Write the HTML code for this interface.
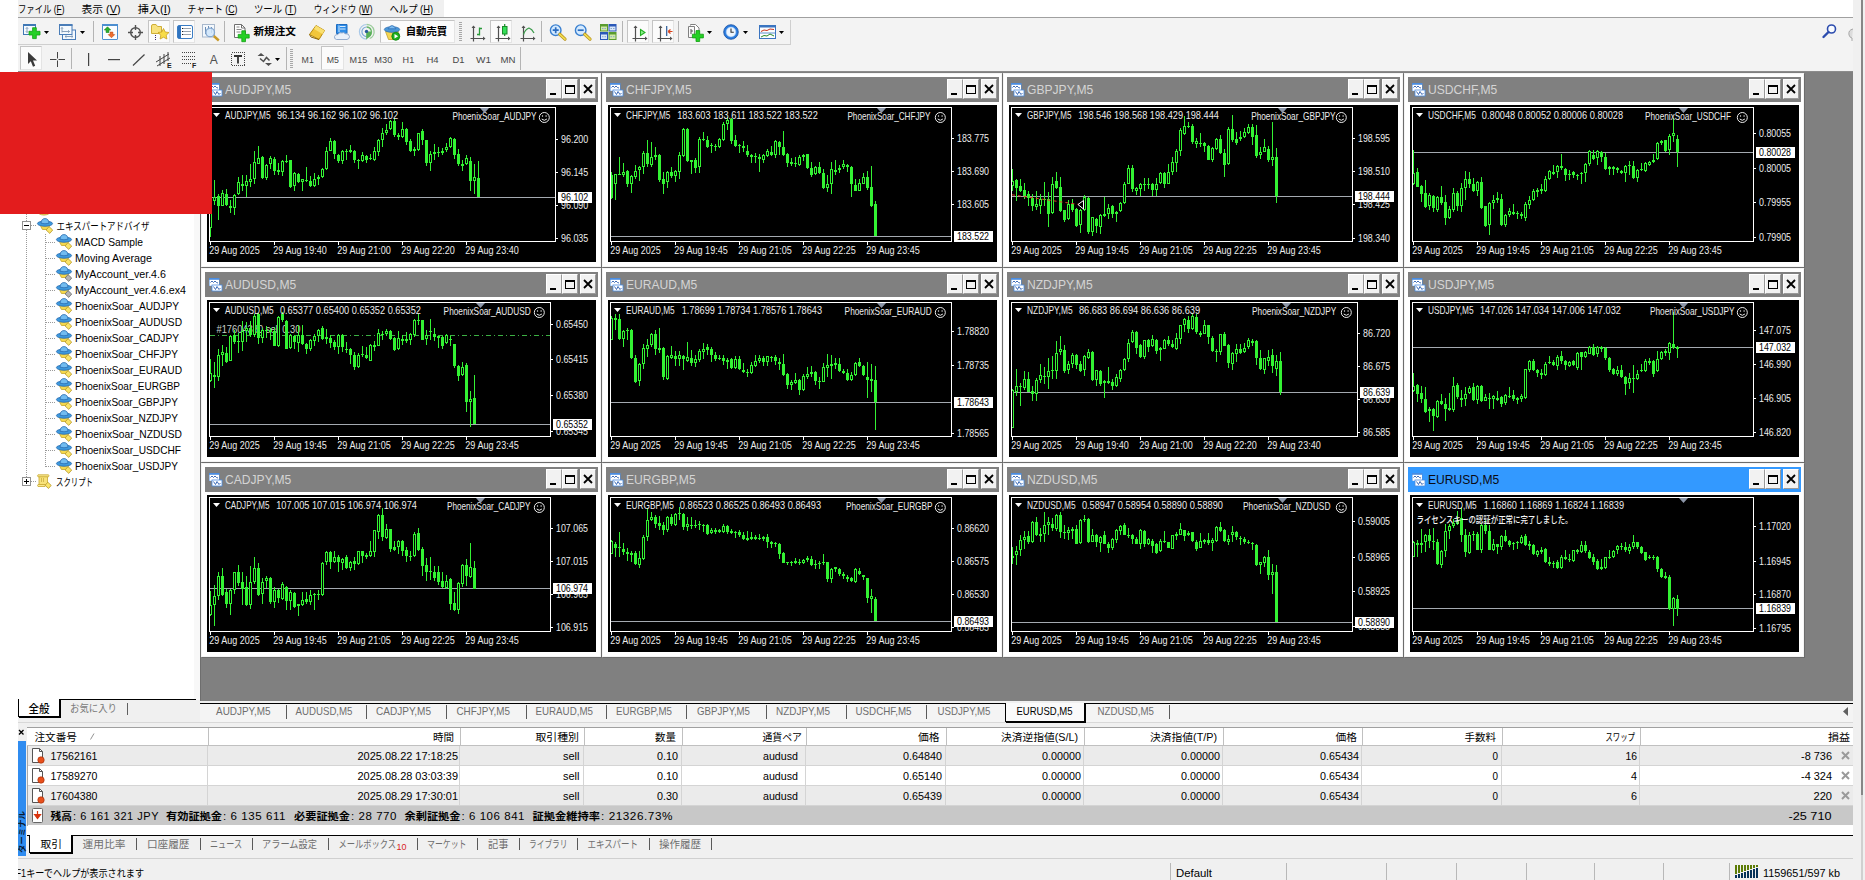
<!DOCTYPE html><html lang="ja"><head><meta charset="utf-8"><title>MetaTrader 4</title><style>
*{box-sizing:border-box;margin:0;padding:0}
html,body{width:1865px;height:880px;overflow:hidden;background:#fff}
body{position:relative;font-family:"Liberation Sans","Noto Sans CJK JP",sans-serif;font-size:11px;color:#000;line-height:1}
.a{position:absolute}
.t{position:absolute;white-space:nowrap}
.mi{position:absolute;top:2px;height:14px;line-height:14px;font-size:11px;white-space:nowrap}
.mi u{text-decoration:underline}
.win{position:absolute;width:400px;height:194px;background:#fff;border:1px solid #f4f4f4;box-shadow:1px 1px 0 #6c6c6c}
.win .tb{position:absolute;left:3px;top:3px;width:393px;height:25px;background:#808080}
.win .tb.act{background:#3399ff}
.win .tt{position:absolute;left:20px;top:5px;font-size:13px;line-height:15px;color:#d4d4d4;white-space:nowrap;transform:scaleX(0.93);transform-origin:0 0}
.win .tb.act .tt{color:#0a0a14}
.cb{position:absolute;top:2px;width:16px;height:20px;background:#f2f2f2;border:1px solid #fff;border-right-color:#9a9a9a;border-bottom-color:#9a9a9a}
.win .cl{position:absolute;left:5px;top:31px;width:389px;height:157px;background:#000}
svg{position:absolute;left:0;top:0;overflow:visible}
svg text{font-family:"Liberation Sans","Noto Sans CJK JP",sans-serif}
.tab{position:absolute;top:0;height:18px;line-height:18px;font-size:11px;color:#707070;white-space:nowrap}
.sep{position:absolute;width:1px;background:#606060}
.th{position:absolute;top:0;height:18px;line-height:18px;font-size:11px;text-align:right;padding-right:4px;border-right:1px solid #c8c8c8;white-space:nowrap}
.td{position:absolute;height:20px;line-height:20px;font-size:11px;text-align:right;padding-right:3px;border-right:1px solid #d8d8d8;white-space:nowrap}
.nv{position:absolute;left:74px;height:16px;line-height:16px;font-size:11px;white-space:nowrap}
</style></head><body>
<div class="a" style="left:18px;top:0;width:426px;height:17px;background:#f0f0f0"></div>
<svg class="a" style="left:0;top:0" width="460" height="18" viewBox="0 0 460 18"><text x="18" y="13" font-size="10.5" textLength="46.5" lengthAdjust="spacingAndGlyphs">ファイル (<tspan text-decoration="underline">F</tspan>)</text><text x="81.5" y="13" font-size="10.5" textLength="39" lengthAdjust="spacingAndGlyphs">表示 (<tspan text-decoration="underline">V</tspan>)</text><text x="137.7" y="13" font-size="10.5" textLength="33" lengthAdjust="spacingAndGlyphs">挿入(<tspan text-decoration="underline">I</tspan>)</text><text x="187.5" y="13" font-size="10.5" textLength="50" lengthAdjust="spacingAndGlyphs">チャート (<tspan text-decoration="underline">C</tspan>)</text><text x="254" y="13" font-size="10.5" textLength="42.7" lengthAdjust="spacingAndGlyphs">ツール (<tspan text-decoration="underline">T</tspan>)</text><text x="313.7" y="13" font-size="10.5" textLength="58.8" lengthAdjust="spacingAndGlyphs">ウィンドウ (<tspan text-decoration="underline">W</tspan>)</text><text x="389.5" y="13" font-size="10.5" textLength="43.5" lengthAdjust="spacingAndGlyphs">ヘルプ (<tspan text-decoration="underline">H</tspan>)</text></svg>
<div class="a" style="left:18px;top:17px;width:1835px;height:1px;background:#a0a0a0"></div>
<div class="a" style="left:18px;top:18px;width:1835px;height:53px;background:#f3f3f3"></div>
<div class="a" style="left:18px;top:44px;width:773px;height:1px;background:#cfcfcf"></div>
<div class="a" style="left:790px;top:20px;width:1px;height:25px;background:#cfcfcf"></div>
<div class="a" style="left:18px;top:71px;width:1835px;height:1px;background:#8c8c8c"></div>
<div class="a" style="left:1853px;top:0;width:12px;height:880px;background:#f0f0f0"></div>
<div class="a" style="left:1861px;top:0;width:2px;height:880px;background:#868686"></div>
<svg class="a" style="left:23px;top:24px" width="18" height="16" viewBox="0 0 18 16" ><rect x="0.500" y="1" width="12" height="9.500" fill="#f4f9fe" stroke="#3f78b5"/><rect x="0" y="0" width="13" height="2" fill="#3f78b5"/><path d="M4 3.500v5M2.800 4.800l1.200-1.300 1.200 1.300M2.800 7.200l1.200 1.300 1.200-1.300" stroke="#7f98b4" fill="none" stroke-width="0.900"/><path d="M6 7.3h3.600v-3.600h3.700v3.600h3.700v3.700h-3.700v3.600h-3.700v-3.600h-3.600z" fill="#25d025" stroke="#12a012" stroke-width="0.800"/></svg>
<svg class="a" style="left:44px;top:31px" width="5" height="3" viewBox="0 0 5 3" ><path d="M0 0h5l-2.500 3z" fill="#000"/></svg>
<svg class="a" style="left:59px;top:24px" width="18" height="17" viewBox="0 0 18 17" ><rect x="3.500" y="6" width="13" height="9.500" fill="#f4f9fe" stroke="#4a7db8"/><path d="M6 12.500h8M6 12.500l1.500-1.200M6 12.500l1.500 1.200M14 12.500l-1.500-1.200M14 12.500l-1.500 1.200" stroke="#7f98b4" fill="none" stroke-width="0.900"/><rect x="0.500" y="1" width="12.500" height="9.500" fill="#f4f9fe" stroke="#4a7db8"/><rect x="0" y="0" width="13.500" height="2" fill="#4a7db8"/><path d="M3 3.500v5M3 7.500h7.500M10.500 7.500l-1.500-1.200M10.500 7.500l-1.500 1.200M3 3.500l-1 1.200M3 3.500l1 1.200" stroke="#7f98b4" fill="none" stroke-width="0.900"/></svg>
<svg class="a" style="left:80px;top:31px" width="5" height="3" viewBox="0 0 5 3" ><path d="M0 0h5l-2.500 3z" fill="#000"/></svg>
<div class="a" style="left:93px;top:21px;width:1px;height:21px;background:#b4b4b4"></div>
<svg class="a" style="left:102px;top:24px" width="16" height="16" viewBox="0 0 16 16" ><rect x="0.500" y="1" width="15" height="14.500" rx="0.500" fill="#fbfdff" stroke="#4d8fd0"/><rect x="0" y="0" width="16" height="2" fill="#4d8fd0"/><path d="M5.500 2.800l3.200 3.200h-1.800v2.500h-2.800v-2.500h-1.800z" fill="#2bb02b" stroke="#148014" stroke-width="0.600"/><path d="M9.500 13.800l-3.200-3.200h1.800v-2.500h2.800v2.500h1.800z" fill="#f07030" stroke="#c04a10" stroke-width="0.600"/></svg>
<svg class="a" style="left:128px;top:25px" width="15" height="15" viewBox="0 0 15 15" ><circle cx="7.500" cy="7.500" r="4.800" fill="none" stroke="#505050" stroke-width="1.400"/><path d="M7.500 0v5M7.500 10v5M0 7.500h5M10 7.500h5" stroke="#505050" stroke-width="1.400"/></svg>
<div class="a" style="left:148px;top:20px;width:22px;height:23px;background:#fbfbfb;border:1px solid #c4c4c4;border-right-color:#e4e4e4;border-bottom-color:#e4e4e4"></div>
<svg class="a" style="left:151px;top:23px" width="19" height="19" viewBox="0 0 19 19" ><path d="M0.500 3q0-1.500 1.500-1.500h3l1.500 2h4v7h-10z" fill="#f8e27e" stroke="#cfae36"/><path d="M4.500 12v5" stroke="#3a2a6a" stroke-dasharray="1 1"/><path d="M12.500 5.500l1.700 3.500 3.800 .500-2.800 2.700 .700 3.800-3.400-1.800-3.400 1.800 .700-3.800-2.800-2.700 3.800-.500z" fill="#f8dc48" stroke="#c8a020" stroke-width="0.800"/></svg>
<div class="a" style="left:173px;top:20px;width:22px;height:23px;background:#fbfbfb;border:1px solid #c4c4c4;border-right-color:#e4e4e4;border-bottom-color:#e4e4e4"></div>
<svg class="a" style="left:177px;top:25px" width="16" height="14" viewBox="0 0 16 14" ><rect x="0.500" y="0.500" width="15" height="13" rx="1.500" fill="#fff" stroke="#3a7cc4"/><rect x="1" y="1" width="3" height="12" fill="#2f74c0"/><path d="M6 3.500h8M6 6.500h8M6 9.500h8" stroke="#9aa4b0"/><path d="M5 3.500h1M5 6.500h1M5 9.500h1" stroke="#222"/></svg>
<svg class="a" style="left:202px;top:24px" width="19" height="18" viewBox="0 0 19 18" ><rect x="0.500" y="0.500" width="12" height="12.500" fill="#f4f8fc" stroke="#a8b8cc"/><path d="M3.500 3v7M6.500 2v4M9.500 3v6" stroke="#6a8cb4"/><circle cx="8.200" cy="8.400" r="4.300" fill="#cfe6fb" fill-opacity="0.850" stroke="#86a8d0" stroke-width="1.300"/><path d="M11.800 12l5 4.500" stroke="#c89a28" stroke-width="2.400"/></svg>
<div class="a" style="left:224px;top:21px;width:1px;height:21px;background:#b4b4b4"></div>
<svg class="a" style="left:233px;top:24px" width="18" height="19" viewBox="0 0 18 19" ><path d="M1.500 0.500h7l3.500 3.500v9.500h-10.500z" fill="#fff" stroke="#707070"/><path d="M8.500 0.500v3.500h3.500" fill="none" stroke="#707070"/><path d="M3.500 3h3M3.500 5.500h5M3.500 8h4" stroke="#8a8a8a"/><path d="M5.2 10.4h3.600v-3.600h3.700v3.600h3.700v3.700h-3.700v3.600h-3.700v-3.600h-3.600z" fill="#25d025" stroke="#12a012" stroke-width="0.800"/></svg>
<svg class="a" style="left:309px;top:25px" width="16" height="15" viewBox="0 0 16 15" ><path d="M0.500 9.500l6.500-9 8.500 5-5.500 9z" fill="#f2c63a" stroke="#b88a10"/><path d="M7 0.500l8.500 5-2 3.500-8.500-5z" fill="#fae070"/><path d="M0.500 9.500l1.500 2.500 8 2.500" fill="none" stroke="#8a6608"/></svg>
<svg class="a" style="left:334px;top:24px" width="17" height="16" viewBox="0 0 17 16" ><path d="M2.500 0.500l2-0h8.500v9h-10.500z" fill="#2f8ee8" stroke="#1f6cc0"/><path d="M6 2.500h5.500M6 5h5.500M5 1.500v6.500" stroke="#d8ecff"/><path d="M2.500 15.500q-2.500-0.500-2-3 .800-2.500 3.500-2 1.200-2.600 4-1.600 1.800-1 3.200 .800 3.800-.600 4.300 2.800 0 2.500-2.500 3z" fill="#eaf1fa" stroke="#8aa4c8" stroke-width="0.900"/></svg>
<svg class="a" style="left:359px;top:24px" width="16" height="16" viewBox="0 0 16 16" ><path d="M7.700 0.500a7.300 7.300 0 0 0 0 14.600" fill="none" stroke="#a8c8e8" stroke-width="1.200"/><path d="M7.700 3a4.800 4.800 0 0 0 0 9.600" fill="none" stroke="#7aa8d8" stroke-width="1.200"/><path d="M7.700 0.500a7.300 7.300 0 0 1 3 14" fill="none" stroke="#9ccc9c" stroke-width="1.300"/><path d="M7.700 3a4.800 4.800 0 0 1 3 8.500" fill="none" stroke="#6ab86a" stroke-width="1.300"/><path d="M7.200 7.500v8l4.500-3.500q1.500-2 0-4.500z" fill="#58b058"/><circle cx="7.500" cy="7.400" r="1.700" fill="#2a5a9a"/></svg>
<div class="a" style="left:380px;top:20px;width:75px;height:23px;background:#fbfbfb;border:1px solid #c4c4c4;border-right-color:#e4e4e4;border-bottom-color:#e4e4e4"></div>
<svg class="a" style="left:384px;top:24px" width="17" height="17" viewBox="0 0 17 17" ><path d="M1.500 7.500h13l-3 8h-7z" fill="#f4d652" stroke="#c0a030" stroke-width="0.800"/><ellipse cx="8" cy="5.500" rx="7.700" ry="2.800" fill="#4a98d8" stroke="#2e6eb4" stroke-width="0.800"/><path d="M4 4.800q4-6.500 8 0z" fill="#7cbcf0" stroke="#2e6eb4" stroke-width="0.800"/><circle cx="11.800" cy="12.300" r="4" fill="#1fb01f" stroke="#0d800d" stroke-width="0.800"/><path d="M10.500 10l3.700 2.300-3.700 2.300z" fill="#fff"/></svg>
<div class="a" style="left:459px;top:22px;width:3px;height:20px;background:repeating-linear-gradient(#a8a8a8 0 1px,transparent 1px 2px)"></div>
<svg class="a" style="left:470px;top:25px" width="16" height="17" viewBox="0 0 16 17" ><path d="M3.500 1v15.500M0.500 13.500h14.500" stroke="#505050" stroke-width="1.200" fill="none"/><path d="M3.500 0.500l-2 2.500h4zM15.500 13.500l-2.500-2v4z" fill="#505050"/><path d="M9.500 2.500v8M9.500 9.500h-2.500M9.500 3.500h2.500" stroke="#2a9a3a" stroke-width="1.300" fill="none"/></svg>
<div class="a" style="left:490px;top:20px;width:22px;height:23px;background:#fbfbfb;border:1px solid #c4c4c4;border-right-color:#e4e4e4;border-bottom-color:#e4e4e4"></div>
<svg class="a" style="left:495px;top:24px" width="16" height="18" viewBox="0 0 16 18" ><path d="M3.500 2v15.500M0.500 14.500h14.500" stroke="#505050" stroke-width="1.200" fill="none"/><path d="M3.500 1.500l-2 2.500h4zM15.500 14.500l-2.500-2v4z" fill="#505050"/><path d="M9.700 0v12" stroke="#1a8a2a" stroke-width="1.200"/><rect x="7.500" y="2.500" width="4.500" height="7.500" fill="#34e058" stroke="#1a8a2a"/></svg>
<svg class="a" style="left:520px;top:25px" width="16" height="17" viewBox="0 0 16 17" ><path d="M3.500 1v15.500M0.500 13.500h14.500" stroke="#505050" stroke-width="1.200" fill="none"/><path d="M3.500 0.500l-2 2.500h4zM15.500 13.500l-2.500-2v4z" fill="#505050"/><path d="M3.500 9.500q1.500-5 5.500-6.500 3 1 5 5" stroke="#3a9a4a" stroke-width="1.200" fill="none"/></svg>
<div class="a" style="left:541px;top:21px;width:1px;height:21px;background:#b4b4b4"></div>
<svg class="a" style="left:549px;top:24px" width="18" height="17" viewBox="0 0 18 17" ><circle cx="6.700" cy="6.200" r="5.300" fill="#d4eaff" stroke="#3a80d0" stroke-width="1.400"/><path d="M10.800 10.300l5.200 4.800" stroke="#b89018" stroke-width="3.200" stroke-linecap="round"/><path d="M10.800 10.300l5.200 4.800" stroke="#f0dc50" stroke-width="1.800" stroke-linecap="round"/><path d="M3.700 6.200h6M6.700 3.200v6" stroke="#2a6cc0" stroke-width="1.700"/></svg>
<svg class="a" style="left:574px;top:24px" width="18" height="17" viewBox="0 0 18 17" ><circle cx="6.700" cy="6.200" r="5.300" fill="#d4eaff" stroke="#3a80d0" stroke-width="1.400"/><path d="M10.800 10.300l5.200 4.800" stroke="#b89018" stroke-width="3.200" stroke-linecap="round"/><path d="M10.800 10.300l5.200 4.800" stroke="#f0dc50" stroke-width="1.800" stroke-linecap="round"/><path d="M3.700 6.200h6" stroke="#2a6cc0" stroke-width="1.700"/></svg>
<svg class="a" style="left:600px;top:24px" width="17" height="16" viewBox="0 0 17 16" ><rect x="0" y="0" width="8" height="7.500" fill="#5a9c2e"/><rect x="8.500" y="0" width="8" height="7.500" fill="#2a58b8"/><rect x="0" y="8" width="8" height="8" fill="#2a58b8"/><rect x="8.500" y="8" width="8" height="8" fill="#5a9c2e"/><rect x="1" y="2.500" width="6" height="4" fill="#cfe8a8"/><rect x="9.500" y="2.500" width="6" height="4" fill="#d8e6fa"/><rect x="1" y="10.500" width="6" height="4.500" fill="#d8e6fa"/><rect x="9.500" y="10.500" width="6" height="4.500" fill="#cfe8a8"/><path d="M2 4.500h4M10.500 4.500h4M2 12.700h4M10.500 12.700h4" stroke="#88a8c8" stroke-dasharray="1.500 1"/></svg>
<div class="a" style="left:622px;top:21px;width:1px;height:21px;background:#b4b4b4"></div>
<div class="a" style="left:627px;top:20px;width:22px;height:23px;background:#fbfbfb;border:1px solid #c4c4c4;border-right-color:#e4e4e4;border-bottom-color:#e4e4e4"></div>
<svg class="a" style="left:632px;top:25px" width="16" height="17" viewBox="0 0 16 17" ><path d="M3.500 1v15.500M0.500 13.500h14.500" stroke="#505050" stroke-width="1.200" fill="none"/><path d="M3.500 0.500l-2 2.500h4zM15.500 13.500l-2.500-2v4z" fill="#505050"/><path d="M8.500 4.500l4.500 3-4.500 3z" fill="#8ef08e" stroke="#22b022" stroke-width="1.100"/></svg>
<div class="a" style="left:652px;top:20px;width:22px;height:23px;background:#fbfbfb;border:1px solid #c4c4c4;border-right-color:#e4e4e4;border-bottom-color:#e4e4e4"></div>
<svg class="a" style="left:657px;top:25px" width="16" height="17" viewBox="0 0 16 17" ><path d="M3.500 1v15.500M0.500 13.500h14.500" stroke="#505050" stroke-width="1.200" fill="none"/><path d="M3.500 0.500l-2 2.500h4zM15.500 13.500l-2.500-2v4z" fill="#505050"/><path d="M9.700 1v10" stroke="#2a5a9a" stroke-width="1.200"/><path d="M15.500 6.500h-4.500M11 6.500l2.500-2M11 6.500l2.500 2" stroke="#d8421a" stroke-width="1.200" fill="none"/></svg>
<div class="a" style="left:678px;top:21px;width:1px;height:21px;background:#b4b4b4"></div>
<svg class="a" style="left:687px;top:24px" width="18" height="19" viewBox="0 0 18 19" ><path d="M3.500 1.500v-1h5l3.500 3.500v9.500h-9" fill="#fff" stroke="#808080"/><path d="M1.500 2.500h6l0 0v11h-6z" fill="#fafafa" stroke="#808080"/><path d="M4 5v5M4 7h2" stroke="#555"/><path d="M5.4 10.2h3.600v-3.600h3.700v3.600h3.700v3.700h-3.700v3.600h-3.700v-3.600h-3.600z" fill="#25d025" stroke="#12a012" stroke-width="0.800"/></svg>
<svg class="a" style="left:707px;top:31px" width="5" height="3" viewBox="0 0 5 3" ><path d="M0 0h5l-2.500 3z" fill="#000"/></svg>
<svg class="a" style="left:723px;top:24px" width="17" height="17" viewBox="0 0 17 17" ><circle cx="8" cy="8" r="7.300" fill="#2a7ce0" stroke="#1a50a0" stroke-width="0.800"/><circle cx="8" cy="8" r="4.900" fill="#eef6ff" stroke="#9cc4f0" stroke-width="0.600"/><path d="M8 4.500v3.700h2.800" stroke="#333" fill="none" stroke-width="1.100"/></svg>
<svg class="a" style="left:743px;top:31px" width="5" height="3" viewBox="0 0 5 3" ><path d="M0 0h5l-2.500 3z" fill="#000"/></svg>
<svg class="a" style="left:759px;top:25px" width="17" height="14" viewBox="0 0 17 14" ><rect x="0.500" y="0.500" width="16" height="13" fill="#fbfdff" stroke="#3a74c0"/><rect x="0" y="0" width="17" height="2.500" fill="#3a74c0"/><path d="M1 8h15" stroke="#3a74c0" stroke-width="0.800"/><path d="M2 6.500l3-1.500 3 .500 3-1.500 4 .500" stroke="#c8321a" fill="none"/><path d="M2 12l3-1.500 3 .500 3-2 4 2" stroke="#2a8a2a" fill="none"/></svg>
<svg class="a" style="left:779px;top:31px" width="5" height="3" viewBox="0 0 5 3" ><path d="M0 0h5l-2.500 3z" fill="#000"/></svg>
<svg class="a" style="left:1822px;top:24px" width="15" height="15" viewBox="0 0 15 15" ><circle cx="9.5" cy="5" r="4" fill="#f8fbff" stroke="#2c4cae" stroke-width="1.6"/><path d="M6.500 8l-5 5" stroke="#2c4cae" stroke-width="2.4" stroke-linecap="round"/></svg>
<svg class="a" style="left:1848px;top:28px" width="5" height="14" viewBox="0 0 5 14" ><path d="M5 1q-5 1-4 6 1 3 3 3v3" fill="#dcdcdc" stroke="#a8a8a8"/></svg>
<div class="a" style="left:20px;top:46px;width:22px;height:24px;background:#fbfbfb;border:1px solid #c4c4c4;border-right-color:#e4e4e4;border-bottom-color:#e4e4e4"></div>
<svg class="a" style="left:27px;top:52px" width="11" height="16" viewBox="0 0 11 16" ><path d="M1 0v12l2.800-2.800 2.200 5.500 2.200-1-2.200-5.200h4z" fill="#3a3a3a"/></svg>
<svg class="a" style="left:50px;top:52px" width="15" height="15" viewBox="0 0 15 15" ><path d="M7.500 0v6.500M7.500 8.500v6.500M0 7.500h6.500M8.500 7.500h6.500" stroke="#444"/></svg>
<div class="a" style="left:71px;top:48px;width:1px;height:21px;background:#b4b4b4"></div>
<svg class="a" style="left:88px;top:53px" width="2" height="13" viewBox="0 0 2 13" ><rect x="0" y="0" width="1.200" height="13" fill="#444"/></svg>
<svg class="a" style="left:108px;top:59px" width="12" height="2" viewBox="0 0 12 2" ><rect x="0" y="0" width="12" height="1.200" fill="#444"/></svg>
<svg class="a" style="left:133px;top:54px" width="12" height="12" viewBox="0 0 12 12" ><path d="M0 11.500L11.500 0.500" stroke="#444" stroke-width="1.200"/></svg>
<svg class="a" style="left:156px;top:50px" width="18" height="20" viewBox="0 0 18 20" ><path d="M0 12l13-8M1 16l13-8M4 6v10M8 4v10M12 2v9" stroke="#444" stroke-width="1"/><text x="11" y="17.500" font-size="7" font-weight="bold" fill="#222">E</text></svg>
<svg class="a" style="left:181px;top:51px" width="18" height="19" viewBox="0 0 18 19" ><path d="M1 1.500h13M1 5h13M1 8.500h13M1 12.500h10" stroke="#444" stroke-dasharray="1 1" shape-rendering="crispEdges"/><text x="11" y="16.500" font-size="7" font-weight="bold" fill="#222">F</text></svg>
<svg class="a" style="left:231px;top:52px" width="15" height="15" viewBox="0 0 15 15" ><rect x="0.500" y="0.500" width="13" height="13" fill="none" stroke="#444" stroke-dasharray="1 1" shape-rendering="crispEdges"/><path d="M3 4h8M7 4v7.500" stroke="#333" stroke-width="1.800"/></svg>
<svg class="a" style="left:257px;top:52px" width="16" height="15" viewBox="0 0 16 15" ><path d="M0.500 4l3.500-3 3.500 3zM8 11l3.500 3 3.500-3z" fill="#505050"/><path d="M3 6.500l3.500 3 3-4 3 3" stroke="#505050" fill="none" stroke-width="1.500"/></svg>
<svg class="a" style="left:275px;top:58px" width="5" height="3" viewBox="0 0 5 3" ><path d="M0 0h5l-2.500 3z" fill="#000"/></svg>
<div class="a" style="left:286px;top:47px;width:1px;height:23px;background:#b4b4b4"></div>
<div class="a" style="left:290px;top:49px;width:3px;height:19px;background:repeating-linear-gradient(#a8a8a8 0 1px,transparent 1px 2px)"></div>
<div class="a" style="left:321px;top:46px;width:23px;height:24px;background:#fbfbfb;border:1px solid #c4c4c4;border-right-color:#e4e4e4;border-bottom-color:#e4e4e4"></div>
<div class="a" style="left:520px;top:47px;width:1px;height:23px;background:#b4b4b4"></div>
<svg class="a ov" style="left:0;top:0;pointer-events:none" width="1865" height="880" viewBox="0 0 1865 880"><text x="253.5" y="34.9" font-size="10.3" textLength="42.5" lengthAdjust="spacingAndGlyphs" font-weight="bold">新規注文</text><text x="405.7" y="34.9" font-size="10.3" textLength="41.5" lengthAdjust="spacingAndGlyphs" font-weight="bold">自動売買</text><text x="209.8" y="63.9" font-size="12" fill="#505050">A</text><text x="301.6" y="62.9" font-size="9.6" textLength="12.2" lengthAdjust="spacingAndGlyphs" fill="#484848">M1</text><text x="326.7" y="62.9" font-size="9.6" textLength="12.2" lengthAdjust="spacingAndGlyphs" fill="#484848">M5</text><text x="349.6" y="62.9" font-size="9.6" textLength="17.6" lengthAdjust="spacingAndGlyphs" fill="#484848">M15</text><text x="374.3" y="62.9" font-size="9.6" textLength="18" lengthAdjust="spacingAndGlyphs" fill="#484848">M30</text><text x="402.6" y="62.9" font-size="9.6" textLength="11.6" lengthAdjust="spacingAndGlyphs" fill="#484848">H1</text><text x="426.4" y="62.9" font-size="9.6" textLength="12.2" lengthAdjust="spacingAndGlyphs" fill="#484848">H4</text><text x="452.5" y="62.9" font-size="9.6" textLength="12" lengthAdjust="spacingAndGlyphs" fill="#484848">D1</text><text x="476" y="62.9" font-size="9.6" textLength="15" lengthAdjust="spacingAndGlyphs" fill="#484848">W1</text><text x="500.5" y="62.9" font-size="9.6" textLength="15" lengthAdjust="spacingAndGlyphs" fill="#484848">MN</text></svg>
<div class="a" style="left:200px;top:72px;width:1653px;height:629px;background:#808080"></div>
<div class="a" style="left:18px;top:72px;width:178px;height:628px;background:#fff"></div>
<div class="a" style="left:194px;top:72px;width:6px;height:628px;background:#f8f8f8"></div>
<div class="a" style="left:196px;top:700px;width:4px;height:22px;background:#f0f0f0"></div>
<div class="a" style="left:200px;top:72px;width:1px;height:629px;background:#6e6e6e"></div>
<div class="a" style="left:26px;top:214px;width:1px;height:268px;background:repeating-linear-gradient(#9a9a9a 0 1px,transparent 1px 2px)"></div>
<div class="a" style="left:45px;top:234px;width:1px;height:233px;background:repeating-linear-gradient(#9a9a9a 0 1px,transparent 1px 2px)"></div>
<svg class="a" style="left:37px;top:208px" width="14" height="8" viewBox="0 0 14 8" ><ellipse cx="7" cy="3" rx="6.500" ry="4" fill="#f4dc78" stroke="#c8a838"/></svg>
<div class="a" style="left:22px;top:221px;width:9px;height:9px;background:#fff;border:1px solid #919191"></div>
<div class="a" style="left:24px;top:225px;width:5px;height:1px;background:#000;"></div>
<div class="a" style="left:31px;top:225px;width:6px;height:1px;background:repeating-linear-gradient(90deg,#9a9a9a 0 1px,transparent 1px 2px)"></div>
<svg class="a" style="left:37px;top:218px" width="17" height="16" viewBox="0 0 17 16" ><path d="M3.200 7.200q4.800 2.200 9.600 0l-2.200 4.300h-5.200z" fill="#f6d84a" stroke="#c4a42c" stroke-width="0.800"/><path d="M12 8.600l3.700 3.400-2.900 3.400-3.700-3.400z" fill="#fae468" stroke="#b89828" stroke-width="0.800"/><ellipse cx="8" cy="5.600" rx="7.600" ry="2.600" fill="#3e9ade" stroke="#2a6cb0" stroke-width="0.800"/><path d="M4 5.200q.300-4.600 4-4.600t4 4.600q-4 1.200-8 0z" fill="#72bcf0" stroke="#2a6cb0" stroke-width="0.800"/></svg>
<div class="a" style="left:46px;top:242px;width:9px;height:1px;background:repeating-linear-gradient(90deg,#9a9a9a 0 1px,transparent 1px 2px)"></div>
<svg class="a" style="left:56px;top:234px" width="17" height="16" viewBox="0 0 17 16" ><path d="M3.200 7.200q4.800 2.200 9.600 0l-2.200 4.300h-5.200z" fill="#f6d84a" stroke="#c4a42c" stroke-width="0.800"/><path d="M12 8.600l3.700 3.400-2.900 3.400-3.700-3.400z" fill="#fae468" stroke="#b89828" stroke-width="0.800"/><ellipse cx="8" cy="5.600" rx="7.600" ry="2.600" fill="#3e9ade" stroke="#2a6cb0" stroke-width="0.800"/><path d="M4 5.200q.300-4.600 4-4.600t4 4.600q-4 1.200-8 0z" fill="#72bcf0" stroke="#2a6cb0" stroke-width="0.800"/></svg>
<div class="a" style="left:46px;top:258px;width:9px;height:1px;background:repeating-linear-gradient(90deg,#9a9a9a 0 1px,transparent 1px 2px)"></div>
<svg class="a" style="left:56px;top:250px" width="17" height="16" viewBox="0 0 17 16" ><path d="M3.200 7.200q4.800 2.200 9.600 0l-2.200 4.300h-5.200z" fill="#f6d84a" stroke="#c4a42c" stroke-width="0.800"/><path d="M12 8.600l3.700 3.400-2.900 3.400-3.700-3.400z" fill="#fae468" stroke="#b89828" stroke-width="0.800"/><ellipse cx="8" cy="5.600" rx="7.600" ry="2.600" fill="#3e9ade" stroke="#2a6cb0" stroke-width="0.800"/><path d="M4 5.200q.300-4.600 4-4.600t4 4.600q-4 1.200-8 0z" fill="#72bcf0" stroke="#2a6cb0" stroke-width="0.800"/></svg>
<div class="a" style="left:46px;top:274px;width:9px;height:1px;background:repeating-linear-gradient(90deg,#9a9a9a 0 1px,transparent 1px 2px)"></div>
<svg class="a" style="left:56px;top:266px" width="17" height="16" viewBox="0 0 17 16" ><path d="M3.200 7.200q4.800 2.200 9.600 0l-2.200 4.300h-5.200z" fill="#f6d84a" stroke="#c4a42c" stroke-width="0.800"/><path d="M12 8.600l3.700 3.400-2.900 3.400-3.700-3.400z" fill="#b4b4b4" stroke="#6a6a6a" stroke-width="0.800"/><ellipse cx="8" cy="5.600" rx="7.600" ry="2.600" fill="#3e9ade" stroke="#2a6cb0" stroke-width="0.800"/><path d="M4 5.200q.300-4.600 4-4.600t4 4.600q-4 1.200-8 0z" fill="#72bcf0" stroke="#2a6cb0" stroke-width="0.800"/></svg>
<div class="a" style="left:46px;top:290px;width:9px;height:1px;background:repeating-linear-gradient(90deg,#9a9a9a 0 1px,transparent 1px 2px)"></div>
<svg class="a" style="left:56px;top:282px" width="17" height="16" viewBox="0 0 17 16" ><path d="M3.200 7.200q4.800 2.200 9.600 0l-2.200 4.300h-5.200z" fill="#f6d84a" stroke="#c4a42c" stroke-width="0.800"/><path d="M12 8.600l3.700 3.400-2.900 3.400-3.700-3.400z" fill="#b4b4b4" stroke="#6a6a6a" stroke-width="0.800"/><ellipse cx="8" cy="5.600" rx="7.600" ry="2.600" fill="#3e9ade" stroke="#2a6cb0" stroke-width="0.800"/><path d="M4 5.200q.300-4.600 4-4.600t4 4.600q-4 1.200-8 0z" fill="#72bcf0" stroke="#2a6cb0" stroke-width="0.800"/></svg>
<div class="a" style="left:46px;top:306px;width:9px;height:1px;background:repeating-linear-gradient(90deg,#9a9a9a 0 1px,transparent 1px 2px)"></div>
<svg class="a" style="left:56px;top:298px" width="17" height="16" viewBox="0 0 17 16" ><path d="M3.200 7.200q4.800 2.200 9.600 0l-2.200 4.300h-5.200z" fill="#f6d84a" stroke="#c4a42c" stroke-width="0.800"/><path d="M12 8.600l3.700 3.400-2.900 3.400-3.700-3.400z" fill="#fae468" stroke="#b89828" stroke-width="0.800"/><ellipse cx="8" cy="5.600" rx="7.600" ry="2.600" fill="#3e9ade" stroke="#2a6cb0" stroke-width="0.800"/><path d="M4 5.200q.300-4.600 4-4.600t4 4.600q-4 1.200-8 0z" fill="#72bcf0" stroke="#2a6cb0" stroke-width="0.800"/></svg>
<div class="a" style="left:46px;top:322px;width:9px;height:1px;background:repeating-linear-gradient(90deg,#9a9a9a 0 1px,transparent 1px 2px)"></div>
<svg class="a" style="left:56px;top:314px" width="17" height="16" viewBox="0 0 17 16" ><path d="M3.200 7.200q4.800 2.200 9.600 0l-2.200 4.300h-5.200z" fill="#f6d84a" stroke="#c4a42c" stroke-width="0.800"/><path d="M12 8.600l3.700 3.400-2.900 3.400-3.700-3.400z" fill="#fae468" stroke="#b89828" stroke-width="0.800"/><ellipse cx="8" cy="5.600" rx="7.600" ry="2.600" fill="#3e9ade" stroke="#2a6cb0" stroke-width="0.800"/><path d="M4 5.200q.300-4.600 4-4.600t4 4.600q-4 1.200-8 0z" fill="#72bcf0" stroke="#2a6cb0" stroke-width="0.800"/></svg>
<div class="a" style="left:46px;top:338px;width:9px;height:1px;background:repeating-linear-gradient(90deg,#9a9a9a 0 1px,transparent 1px 2px)"></div>
<svg class="a" style="left:56px;top:330px" width="17" height="16" viewBox="0 0 17 16" ><path d="M3.200 7.200q4.800 2.200 9.600 0l-2.200 4.300h-5.200z" fill="#f6d84a" stroke="#c4a42c" stroke-width="0.800"/><path d="M12 8.600l3.700 3.400-2.900 3.400-3.700-3.400z" fill="#fae468" stroke="#b89828" stroke-width="0.800"/><ellipse cx="8" cy="5.600" rx="7.600" ry="2.600" fill="#3e9ade" stroke="#2a6cb0" stroke-width="0.800"/><path d="M4 5.200q.300-4.600 4-4.600t4 4.600q-4 1.200-8 0z" fill="#72bcf0" stroke="#2a6cb0" stroke-width="0.800"/></svg>
<div class="a" style="left:46px;top:354px;width:9px;height:1px;background:repeating-linear-gradient(90deg,#9a9a9a 0 1px,transparent 1px 2px)"></div>
<svg class="a" style="left:56px;top:346px" width="17" height="16" viewBox="0 0 17 16" ><path d="M3.200 7.200q4.800 2.200 9.600 0l-2.200 4.300h-5.200z" fill="#f6d84a" stroke="#c4a42c" stroke-width="0.800"/><path d="M12 8.600l3.700 3.400-2.900 3.400-3.700-3.400z" fill="#fae468" stroke="#b89828" stroke-width="0.800"/><ellipse cx="8" cy="5.600" rx="7.600" ry="2.600" fill="#3e9ade" stroke="#2a6cb0" stroke-width="0.800"/><path d="M4 5.200q.300-4.600 4-4.600t4 4.600q-4 1.200-8 0z" fill="#72bcf0" stroke="#2a6cb0" stroke-width="0.800"/></svg>
<div class="a" style="left:46px;top:370px;width:9px;height:1px;background:repeating-linear-gradient(90deg,#9a9a9a 0 1px,transparent 1px 2px)"></div>
<svg class="a" style="left:56px;top:362px" width="17" height="16" viewBox="0 0 17 16" ><path d="M3.200 7.200q4.800 2.200 9.600 0l-2.200 4.300h-5.200z" fill="#f6d84a" stroke="#c4a42c" stroke-width="0.800"/><path d="M12 8.600l3.700 3.400-2.900 3.400-3.700-3.400z" fill="#fae468" stroke="#b89828" stroke-width="0.800"/><ellipse cx="8" cy="5.600" rx="7.600" ry="2.600" fill="#3e9ade" stroke="#2a6cb0" stroke-width="0.800"/><path d="M4 5.200q.300-4.600 4-4.600t4 4.600q-4 1.200-8 0z" fill="#72bcf0" stroke="#2a6cb0" stroke-width="0.800"/></svg>
<div class="a" style="left:46px;top:386px;width:9px;height:1px;background:repeating-linear-gradient(90deg,#9a9a9a 0 1px,transparent 1px 2px)"></div>
<svg class="a" style="left:56px;top:378px" width="17" height="16" viewBox="0 0 17 16" ><path d="M3.200 7.200q4.800 2.200 9.600 0l-2.200 4.300h-5.200z" fill="#f6d84a" stroke="#c4a42c" stroke-width="0.800"/><path d="M12 8.600l3.700 3.400-2.900 3.400-3.700-3.400z" fill="#fae468" stroke="#b89828" stroke-width="0.800"/><ellipse cx="8" cy="5.600" rx="7.600" ry="2.600" fill="#3e9ade" stroke="#2a6cb0" stroke-width="0.800"/><path d="M4 5.200q.300-4.600 4-4.600t4 4.600q-4 1.200-8 0z" fill="#72bcf0" stroke="#2a6cb0" stroke-width="0.800"/></svg>
<div class="a" style="left:46px;top:402px;width:9px;height:1px;background:repeating-linear-gradient(90deg,#9a9a9a 0 1px,transparent 1px 2px)"></div>
<svg class="a" style="left:56px;top:394px" width="17" height="16" viewBox="0 0 17 16" ><path d="M3.200 7.200q4.800 2.200 9.600 0l-2.200 4.300h-5.200z" fill="#f6d84a" stroke="#c4a42c" stroke-width="0.800"/><path d="M12 8.600l3.700 3.400-2.900 3.400-3.700-3.400z" fill="#fae468" stroke="#b89828" stroke-width="0.800"/><ellipse cx="8" cy="5.600" rx="7.600" ry="2.600" fill="#3e9ade" stroke="#2a6cb0" stroke-width="0.800"/><path d="M4 5.200q.300-4.600 4-4.600t4 4.600q-4 1.200-8 0z" fill="#72bcf0" stroke="#2a6cb0" stroke-width="0.800"/></svg>
<div class="a" style="left:46px;top:418px;width:9px;height:1px;background:repeating-linear-gradient(90deg,#9a9a9a 0 1px,transparent 1px 2px)"></div>
<svg class="a" style="left:56px;top:410px" width="17" height="16" viewBox="0 0 17 16" ><path d="M3.200 7.200q4.800 2.200 9.600 0l-2.200 4.300h-5.200z" fill="#f6d84a" stroke="#c4a42c" stroke-width="0.800"/><path d="M12 8.600l3.700 3.400-2.900 3.400-3.700-3.400z" fill="#fae468" stroke="#b89828" stroke-width="0.800"/><ellipse cx="8" cy="5.600" rx="7.600" ry="2.600" fill="#3e9ade" stroke="#2a6cb0" stroke-width="0.800"/><path d="M4 5.200q.300-4.600 4-4.600t4 4.600q-4 1.200-8 0z" fill="#72bcf0" stroke="#2a6cb0" stroke-width="0.800"/></svg>
<div class="a" style="left:46px;top:434px;width:9px;height:1px;background:repeating-linear-gradient(90deg,#9a9a9a 0 1px,transparent 1px 2px)"></div>
<svg class="a" style="left:56px;top:426px" width="17" height="16" viewBox="0 0 17 16" ><path d="M3.200 7.200q4.800 2.200 9.600 0l-2.200 4.300h-5.200z" fill="#f6d84a" stroke="#c4a42c" stroke-width="0.800"/><path d="M12 8.600l3.700 3.400-2.900 3.400-3.700-3.400z" fill="#fae468" stroke="#b89828" stroke-width="0.800"/><ellipse cx="8" cy="5.600" rx="7.600" ry="2.600" fill="#3e9ade" stroke="#2a6cb0" stroke-width="0.800"/><path d="M4 5.200q.300-4.600 4-4.600t4 4.600q-4 1.200-8 0z" fill="#72bcf0" stroke="#2a6cb0" stroke-width="0.800"/></svg>
<div class="a" style="left:46px;top:450px;width:9px;height:1px;background:repeating-linear-gradient(90deg,#9a9a9a 0 1px,transparent 1px 2px)"></div>
<svg class="a" style="left:56px;top:442px" width="17" height="16" viewBox="0 0 17 16" ><path d="M3.200 7.200q4.800 2.200 9.600 0l-2.200 4.300h-5.200z" fill="#f6d84a" stroke="#c4a42c" stroke-width="0.800"/><path d="M12 8.600l3.700 3.400-2.900 3.400-3.700-3.400z" fill="#fae468" stroke="#b89828" stroke-width="0.800"/><ellipse cx="8" cy="5.600" rx="7.600" ry="2.600" fill="#3e9ade" stroke="#2a6cb0" stroke-width="0.800"/><path d="M4 5.200q.300-4.600 4-4.600t4 4.600q-4 1.200-8 0z" fill="#72bcf0" stroke="#2a6cb0" stroke-width="0.800"/></svg>
<div class="a" style="left:46px;top:466px;width:9px;height:1px;background:repeating-linear-gradient(90deg,#9a9a9a 0 1px,transparent 1px 2px)"></div>
<svg class="a" style="left:56px;top:458px" width="17" height="16" viewBox="0 0 17 16" ><path d="M3.200 7.200q4.800 2.200 9.600 0l-2.200 4.300h-5.200z" fill="#f6d84a" stroke="#c4a42c" stroke-width="0.800"/><path d="M12 8.600l3.700 3.400-2.900 3.400-3.700-3.400z" fill="#fae468" stroke="#b89828" stroke-width="0.800"/><ellipse cx="8" cy="5.600" rx="7.600" ry="2.600" fill="#3e9ade" stroke="#2a6cb0" stroke-width="0.800"/><path d="M4 5.200q.300-4.600 4-4.600t4 4.600q-4 1.200-8 0z" fill="#72bcf0" stroke="#2a6cb0" stroke-width="0.800"/></svg>
<div class="a" style="left:22px;top:477px;width:9px;height:9px;background:#fff;border:1px solid #919191"></div>
<div class="a" style="left:24px;top:481px;width:5px;height:1px;background:#000;"></div>
<div class="a" style="left:26px;top:479px;width:1px;height:5px;background:#000;"></div>
<div class="a" style="left:31px;top:481px;width:6px;height:1px;background:repeating-linear-gradient(90deg,#9a9a9a 0 1px,transparent 1px 2px)"></div>
<svg class="a" style="left:37px;top:474px" width="15" height="15" viewBox="0 0 15 15" ><path d="M2 2.500h8.500v8.500h-8.500z" fill="#f8e27a" stroke="#c8a830" stroke-width="0.800"/><path d="M1 0.800h10.500q1 1 0 2h-10.500q-1-1 0-2z" fill="#fae890" stroke="#c8a830" stroke-width="0.800"/><path d="M1 10.500h7q.800 1 0 2h-7q-1-1 0-2z" fill="#fae890" stroke="#c8a830" stroke-width="0.800"/><path d="M4 5h1M6 5h1M4 7h1M6 7h1" stroke="#b09020"/><path d="M10.800 8.200l3.400 3.200-2.700 3.100-3.400-3.200z" fill="#fae468" stroke="#b89828" stroke-width="0.800"/></svg>
<div class="a" style="left:18px;top:700px;width:178px;height:22px;background:#f0f0f0;"></div>
<div class="a" style="left:59px;top:699px;width:137px;height:1px;background:#000;"></div>
<div class="a" style="left:18px;top:699px;width:42px;height:18px;background:#fff;border:1px solid #000;border-top:none;box-shadow:1px 1px 0 #000"></div>
<div class="a" style="left:127px;top:703px;width:1px;height:12px;background:#606060;"></div>
<div class="a" style="left:18px;top:722px;width:1835px;height:1px;background:#d8d8d8;"></div>
<svg class="a ov" style="left:0;top:0;pointer-events:none" width="1865" height="880" viewBox="0 0 1865 880"><text x="56.5" y="230.3" font-size="10.5" textLength="93" lengthAdjust="spacingAndGlyphs">エキスパートアドバイザ</text><text x="75" y="246.3" font-size="10.5" textLength="68" lengthAdjust="spacingAndGlyphs">MACD Sample</text><text x="75" y="262.3" font-size="10.5" textLength="77" lengthAdjust="spacingAndGlyphs">Moving Average</text><text x="75" y="278.3" font-size="10.5" textLength="91" lengthAdjust="spacingAndGlyphs">MyAccount_ver.4.6</text><text x="75" y="294.3" font-size="10.5" textLength="111" lengthAdjust="spacingAndGlyphs">MyAccount_ver.4.6.ex4</text><text x="75" y="310.3" font-size="10.5" textLength="104" lengthAdjust="spacingAndGlyphs">PhoenixSoar_AUDJPY</text><text x="75" y="326.3" font-size="10.5" textLength="107" lengthAdjust="spacingAndGlyphs">PhoenixSoar_AUDUSD</text><text x="75" y="342.3" font-size="10.5" textLength="104" lengthAdjust="spacingAndGlyphs">PhoenixSoar_CADJPY</text><text x="75" y="358.3" font-size="10.5" textLength="103" lengthAdjust="spacingAndGlyphs">PhoenixSoar_CHFJPY</text><text x="75" y="374.3" font-size="10.5" textLength="107" lengthAdjust="spacingAndGlyphs">PhoenixSoar_EURAUD</text><text x="75" y="390.3" font-size="10.5" textLength="105" lengthAdjust="spacingAndGlyphs">PhoenixSoar_EURGBP</text><text x="75" y="406.3" font-size="10.5" textLength="103" lengthAdjust="spacingAndGlyphs">PhoenixSoar_GBPJPY</text><text x="75" y="422.3" font-size="10.5" textLength="103" lengthAdjust="spacingAndGlyphs">PhoenixSoar_NZDJPY</text><text x="75" y="438.3" font-size="10.5" textLength="107" lengthAdjust="spacingAndGlyphs">PhoenixSoar_NZDUSD</text><text x="75" y="454.3" font-size="10.5" textLength="106" lengthAdjust="spacingAndGlyphs">PhoenixSoar_USDCHF</text><text x="75" y="470.3" font-size="10.5" textLength="103" lengthAdjust="spacingAndGlyphs">PhoenixSoar_USDJPY</text><text x="56" y="486.3" font-size="10.5" textLength="37" lengthAdjust="spacingAndGlyphs">スクリプト</text><text x="28.5" y="712.5" font-size="11" textLength="21" lengthAdjust="spacingAndGlyphs" font-weight="500">全般</text><text x="70" y="712.3" font-size="10.5" textLength="47" lengthAdjust="spacingAndGlyphs" fill="#7a7a7a">お気に入り</text></svg>
<div class="win" style="left:201px;top:73px"><div class="tb"><svg width="14" height="14" viewBox="0 0 14 14" style="left:4px;top:6px"><rect x="0" y="0" width="10.500" height="8" fill="#4a8ce0"/><rect x="0.500" y="1.800" width="9.500" height="6" fill="#fff"/><path d="M1.500 4.500l1.500-1.500 1.500 1.500 1.500-1.500 1.500 1.500 1.500 .500" stroke="#2a5cb0" fill="none" stroke-width="0.900"/><rect x="3" y="7" width="10" height="6" fill="#fff" stroke="#4a8ce0" stroke-width="0.800"/><path d="M4.500 8.500l2 3 1.500-3 2 3 1.500-1.500" stroke="#2a5cb0" fill="none" stroke-width="0.900"/></svg><div class="tt">AUDJPY,M5</div>
<div class="cb" style="left:341px"><svg width="14" height="18"><rect x="3" y="13" width="6" height="2" fill="#000"/></svg></div>
<div class="cb" style="left:357px"><svg width="14" height="18"><rect x="2.5" y="5.5" width="9" height="8" fill="none" stroke="#000" stroke-width="1"/><rect x="2" y="5" width="10" height="2" fill="#000"/></svg></div>
<div class="cb" style="left:375px"><svg width="14" height="18"><path d="M3 5l8 8M11 5l-8 8" stroke="#000" stroke-width="1.8"/></svg></div>
</div><div class="cl"><svg width="390" height="157" viewBox="0 0 390 157" shape-rendering="crispEdges"><rect x="3" y="92" width="345" height="1" fill="#a4a9b0"/><path d="M3.5 103V132M7.5 75V100M11.5 89V115M15.5 85V101M19.5 84V101M23.5 95V108M22.0 101.5H25.0M22.0 102.5H25.0M27.5 89V110M31.5 72V90M35.5 70V86M34.0 79.5H37.0M34.0 80.5H37.0M39.5 70V92M43.5 59V82M47.5 46V79M51.5 41V59M55.5 51V74M59.5 59V75M63.5 51V64M67.5 52V70M71.5 58V70M70.0 65.5H73.0M70.0 66.5H73.0M75.5 55V71M79.5 50V58M78.0 56.5H81.0M83.5 55V83M87.5 67V86M91.5 68V78M95.5 74V86M99.5 62V77M98.0 75.5H101.0M103.5 71V82M107.5 68V82M111.5 70V80M110.0 72.5H113.0M110.0 73.5H113.0M115.5 63V73M119.5 42V65M123.5 33V46M127.5 35V54M131.5 49V58M135.5 45V59M139.5 44V55M138.0 46.5H141.0M143.5 40V48M142.0 45.5H145.0M142.0 46.5H145.0M147.5 45V58M151.5 54V64M150.0 55.5H153.0M155.5 47V57M159.5 50V58M163.5 49V55M162.0 53.5H165.0M167.5 42V56M171.5 34V51M175.5 23V42M179.5 19V30M183.5 15V25M187.5 13V32M191.5 28V35M190.0 30.5H193.0M190.0 31.5H193.0M195.5 17V33M199.5 23V40M203.5 34V47M207.5 42V51M206.0 44.5H209.0M206.0 45.5H209.0M211.5 28V46M215.5 24V40M219.5 35V61M223.5 46V66M227.5 39V55M226.0 47.5H229.0M226.0 48.5H229.0M231.5 42V52M230.0 47.5H233.0M235.5 43V50M234.0 46.5H237.0M234.0 47.5H237.0M239.5 38V47M243.5 32V43M247.5 33V54M251.5 44V61M255.5 55V66M254.0 59.5H257.0M254.0 60.5H257.0M259.5 50V60M263.5 52V86M267.5 59V89M271.5 56V92" stroke="#33f233" fill="none"/><rect x="2.5" y="104.5" width="2" height="18" fill="#000" stroke="#33f233"/><rect x="6.5" y="92.5" width="2" height="3" fill="#000" stroke="#33f233"/><rect x="10.0" y="91" width="3" height="10" fill="#33f233"/><rect x="14.5" y="88.5" width="2" height="12" fill="#000" stroke="#33f233"/><rect x="18.0" y="89" width="3" height="11" fill="#33f233"/><rect x="26.5" y="90.5" width="2" height="12" fill="#000" stroke="#33f233"/><rect x="30.5" y="77.5" width="2" height="11" fill="#000" stroke="#33f233"/><rect x="38.5" y="76.5" width="2" height="4" fill="#000" stroke="#33f233"/><rect x="42.5" y="74.5" width="2" height="2" fill="#000" stroke="#33f233"/><rect x="46.5" y="57.5" width="2" height="16" fill="#000" stroke="#33f233"/><rect x="50.5" y="53.5" width="2" height="5" fill="#000" stroke="#33f233"/><rect x="54.0" y="52" width="3" height="21" fill="#33f233"/><rect x="58.5" y="60.5" width="2" height="12" fill="#000" stroke="#33f233"/><rect x="62.5" y="53.5" width="2" height="5" fill="#000" stroke="#33f233"/><rect x="66.0" y="54" width="3" height="12" fill="#33f233"/><rect x="74.5" y="56.5" width="2" height="10" fill="#000" stroke="#33f233"/><rect x="82.0" y="55" width="3" height="27" fill="#33f233"/><rect x="86.5" y="68.5" width="2" height="12" fill="#000" stroke="#33f233"/><rect x="90.0" y="69" width="3" height="8" fill="#33f233"/><rect x="94.5" y="74.5" width="2" height="2" fill="#000" stroke="#33f233"/><rect x="102.0" y="76" width="3" height="5" fill="#33f233"/><rect x="106.5" y="74.5" width="2" height="6" fill="#000" stroke="#33f233"/><rect x="114.5" y="64.5" width="2" height="7" fill="#000" stroke="#33f233"/><rect x="118.5" y="46.5" width="2" height="17" fill="#000" stroke="#33f233"/><rect x="122.5" y="36.5" width="2" height="9" fill="#000" stroke="#33f233"/><rect x="126.0" y="36" width="3" height="13" fill="#33f233"/><rect x="130.0" y="50" width="3" height="6" fill="#33f233"/><rect x="134.5" y="46.5" width="2" height="9" fill="#000" stroke="#33f233"/><rect x="146.0" y="46" width="3" height="9" fill="#33f233"/><rect x="154.5" y="50.5" width="2" height="5" fill="#000" stroke="#33f233"/><rect x="158.0" y="51" width="3" height="4" fill="#33f233"/><rect x="166.5" y="46.5" width="2" height="8" fill="#000" stroke="#33f233"/><rect x="170.5" y="35.5" width="2" height="11" fill="#000" stroke="#33f233"/><rect x="174.5" y="28.5" width="2" height="6" fill="#000" stroke="#33f233"/><rect x="178.5" y="25.5" width="2" height="2" fill="#000" stroke="#33f233"/><rect x="182.5" y="16.5" width="2" height="7" fill="#000" stroke="#33f233"/><rect x="186.0" y="16" width="3" height="14" fill="#33f233"/><rect x="194.5" y="24.5" width="2" height="7" fill="#000" stroke="#33f233"/><rect x="198.0" y="24" width="3" height="13" fill="#33f233"/><rect x="202.0" y="36" width="3" height="10" fill="#33f233"/><rect x="210.5" y="28.5" width="2" height="16" fill="#000" stroke="#33f233"/><rect x="214.0" y="26" width="3" height="9" fill="#33f233"/><rect x="218.0" y="35" width="3" height="23" fill="#33f233"/><rect x="222.5" y="49.5" width="2" height="8" fill="#000" stroke="#33f233"/><rect x="238.5" y="42.5" width="2" height="2" fill="#000" stroke="#33f233"/><rect x="242.5" y="33.5" width="2" height="8" fill="#000" stroke="#33f233"/><rect x="246.0" y="34" width="3" height="16" fill="#33f233"/><rect x="250.0" y="49" width="3" height="10" fill="#33f233"/><rect x="258.5" y="53.5" width="2" height="5" fill="#000" stroke="#33f233"/><rect x="262.0" y="56" width="3" height="20" fill="#33f233"/><rect x="266.5" y="72.5" width="2" height="3" fill="#000" stroke="#33f233"/><rect x="270.0" y="73" width="3" height="19" fill="#33f233"/><rect x="2.5" y="2.5" width="346" height="134" fill="none" stroke="#fff"/><rect x="3" y="137" width="1" height="3" fill="#fff"/><text x="2.3" y="149.2" font-size="10.3" textLength="50.5" fill="#ececec" lengthAdjust="spacingAndGlyphs">29 Aug 2025</text><rect x="67" y="137" width="1" height="3" fill="#fff"/><text x="66.3" y="149.2" font-size="10.3" textLength="53.5" fill="#ececec" lengthAdjust="spacingAndGlyphs">29 Aug 19:40</text><rect x="131" y="137" width="1" height="3" fill="#fff"/><text x="130.3" y="149.2" font-size="10.3" textLength="53.5" fill="#ececec" lengthAdjust="spacingAndGlyphs">29 Aug 21:00</text><rect x="195" y="137" width="1" height="3" fill="#fff"/><text x="194.3" y="149.2" font-size="10.3" textLength="53.5" fill="#ececec" lengthAdjust="spacingAndGlyphs">29 Aug 22:20</text><rect x="259" y="137" width="1" height="3" fill="#fff"/><text x="258.3" y="149.2" font-size="10.3" textLength="53.5" fill="#ececec" lengthAdjust="spacingAndGlyphs">29 Aug 23:40</text><rect x="349" y="34" width="2" height="1" fill="#fff"/><text x="354" y="37.7" font-size="10.3" textLength="27.3" fill="#ececec" lengthAdjust="spacingAndGlyphs">96.200</text><rect x="349" y="67" width="2" height="1" fill="#fff"/><text x="354" y="70.7" font-size="10.3" textLength="27.3" fill="#ececec" lengthAdjust="spacingAndGlyphs">96.145</text><rect x="349" y="100" width="2" height="1" fill="#fff"/><text x="354" y="103.7" font-size="10.3" textLength="27.3" fill="#ececec" lengthAdjust="spacingAndGlyphs">96.090</text><rect x="349" y="133" width="2" height="1" fill="#fff"/><text x="354" y="136.7" font-size="10.3" textLength="27.3" fill="#ececec" lengthAdjust="spacingAndGlyphs">96.035</text><rect x="351" y="87" width="33.8" height="11" fill="#fff"/><text x="354" y="95.7" font-size="10.3" textLength="27.3" fill="#000" lengthAdjust="spacingAndGlyphs">96.102</text><path d="M6 8h7l-3.5 4z" fill="#fff" shape-rendering="auto"/><text x="18" y="14" font-size="10.3" textLength="45.6" fill="#ececec" lengthAdjust="spacingAndGlyphs">AUDJPY,M5</text><text x="69.9" y="14" font-size="10.3" textLength="121.3" fill="#ececec" lengthAdjust="spacingAndGlyphs">96.134 96.162 96.102 96.102</text><text x="245.4" y="15" font-size="10.3" textLength="84.1" fill="#ececec" lengthAdjust="spacingAndGlyphs">PhoenixSoar_AUDJPY</text><g shape-rendering="auto" fill="none" stroke="#ececec" stroke-width="1"><circle cx="337.3" cy="12.5" r="5"/><path d="M334.7 14q2.6 2.6 5.2 0"/><circle cx="335.5" cy="11" r="0.7" fill="#ececec" stroke="none"/><circle cx="339.1" cy="11" r="0.7" fill="#ececec" stroke="none"/></g><path d="M273.0 3h9l-4.5 5z" fill="#8c96a8" shape-rendering="auto"/></svg></div></div>
<div class="win" style="left:602px;top:73px"><div class="tb"><svg width="14" height="14" viewBox="0 0 14 14" style="left:4px;top:6px"><rect x="0" y="0" width="10.500" height="8" fill="#4a8ce0"/><rect x="0.500" y="1.800" width="9.500" height="6" fill="#fff"/><path d="M1.500 4.500l1.500-1.500 1.500 1.500 1.500-1.500 1.500 1.500 1.500 .500" stroke="#2a5cb0" fill="none" stroke-width="0.900"/><rect x="3" y="7" width="10" height="6" fill="#fff" stroke="#4a8ce0" stroke-width="0.800"/><path d="M4.500 8.500l2 3 1.500-3 2 3 1.500-1.500" stroke="#2a5cb0" fill="none" stroke-width="0.900"/></svg><div class="tt">CHFJPY,M5</div>
<div class="cb" style="left:341px"><svg width="14" height="18"><rect x="3" y="13" width="6" height="2" fill="#000"/></svg></div>
<div class="cb" style="left:357px"><svg width="14" height="18"><rect x="2.5" y="5.5" width="9" height="8" fill="none" stroke="#000" stroke-width="1"/><rect x="2" y="5" width="10" height="2" fill="#000"/></svg></div>
<div class="cb" style="left:375px"><svg width="14" height="18"><path d="M3 5l8 8M11 5l-8 8" stroke="#000" stroke-width="1.8"/></svg></div>
</div><div class="cl"><svg width="390" height="157" viewBox="0 0 390 157" shape-rendering="crispEdges"><rect x="3" y="131" width="340" height="1" fill="#a4a9b0"/><path d="M3.5 67V94M7.5 69V95M11.5 52V70M10.0 69.5H13.0M15.5 58V72M19.5 65V82M23.5 70V88M27.5 60V74M31.5 61V76M35.5 46V69M39.5 35V62M43.5 37V62M47.5 42V55M46.0 50.5H49.0M46.0 51.5H49.0M51.5 49V77M55.5 67V89M59.5 66V83M63.5 62V73M67.5 65V77M71.5 47V74M75.5 23V52M79.5 23V57M83.5 55V69M82.0 55.5H85.0M82.0 56.5H85.0M87.5 53V68M91.5 32V68M95.5 27V36M94.0 34.5H97.0M99.5 31V43M103.5 38V48M102.0 40.5H105.0M107.5 39V46M106.0 41.5H109.0M111.5 33V43M115.5 17V36M119.5 12V25M123.5 13V39M127.5 30V42M131.5 39V48M130.0 40.5H133.0M135.5 36V47M134.0 41.5H137.0M134.0 42.5H137.0M139.5 40V52M143.5 49V58M142.0 50.5H145.0M142.0 51.5H145.0M147.5 48V58M146.0 51.5H149.0M151.5 49V67M150.0 52.5H153.0M150.0 53.5H153.0M155.5 49V58M159.5 44V52M163.5 41V51M167.5 35V53M171.5 36V50M175.5 26V51M179.5 48V62M183.5 53V61M182.0 57.5H185.0M182.0 58.5H185.0M187.5 52V62M186.0 58.5H189.0M191.5 50V61M195.5 49V56M194.0 50.5H197.0M194.0 51.5H197.0M199.5 49V64M203.5 57V72M207.5 61V70M211.5 57V69M215.5 64V84M219.5 70V87M223.5 57V89M227.5 55V70M226.0 65.5H229.0M226.0 66.5H229.0M231.5 60V68M230.0 63.5H233.0M230.0 64.5H233.0M235.5 55V64M239.5 59V67M238.0 60.5H241.0M238.0 61.5H241.0M243.5 61V92M247.5 74V86M251.5 74V86M255.5 68V79M259.5 66V85M263.5 61V102M267.5 96V131" stroke="#33f233" fill="none"/><rect x="2.0" y="70" width="3" height="23" fill="#33f233"/><rect x="6.5" y="69.5" width="2" height="9" fill="#000" stroke="#33f233"/><rect x="14.5" y="67.5" width="2" height="2" fill="#000" stroke="#33f233"/><rect x="18.0" y="66" width="3" height="13" fill="#33f233"/><rect x="22.5" y="71.5" width="2" height="7" fill="#000" stroke="#33f233"/><rect x="26.5" y="66.5" width="2" height="5" fill="#000" stroke="#33f233"/><rect x="30.5" y="62.5" width="2" height="2" fill="#000" stroke="#33f233"/><rect x="34.5" y="48.5" width="2" height="13" fill="#000" stroke="#33f233"/><rect x="38.0" y="48" width="3" height="11" fill="#33f233"/><rect x="42.5" y="52.5" width="2" height="7" fill="#000" stroke="#33f233"/><rect x="50.0" y="50" width="3" height="25" fill="#33f233"/><rect x="54.0" y="74" width="3" height="5" fill="#33f233"/><rect x="58.5" y="67.5" width="2" height="9" fill="#000" stroke="#33f233"/><rect x="62.0" y="67" width="3" height="4" fill="#33f233"/><rect x="66.5" y="66.5" width="2" height="4" fill="#000" stroke="#33f233"/><rect x="70.5" y="50.5" width="2" height="16" fill="#000" stroke="#33f233"/><rect x="74.5" y="24.5" width="2" height="26" fill="#000" stroke="#33f233"/><rect x="78.0" y="24" width="3" height="32" fill="#33f233"/><rect x="86.0" y="55" width="3" height="8" fill="#33f233"/><rect x="90.5" y="34.5" width="2" height="27" fill="#000" stroke="#33f233"/><rect x="98.0" y="35" width="3" height="7" fill="#33f233"/><rect x="110.5" y="34.5" width="2" height="7" fill="#000" stroke="#33f233"/><rect x="114.5" y="19.5" width="2" height="15" fill="#000" stroke="#33f233"/><rect x="118.5" y="15.5" width="2" height="3" fill="#000" stroke="#33f233"/><rect x="122.0" y="14" width="3" height="22" fill="#33f233"/><rect x="126.0" y="35" width="3" height="6" fill="#33f233"/><rect x="138.0" y="46" width="3" height="4" fill="#33f233"/><rect x="154.5" y="50.5" width="2" height="4" fill="#000" stroke="#33f233"/><rect x="158.5" y="46.5" width="2" height="4" fill="#000" stroke="#33f233"/><rect x="162.0" y="47" width="3" height="3" fill="#33f233"/><rect x="166.5" y="36.5" width="2" height="13" fill="#000" stroke="#33f233"/><rect x="170.0" y="37" width="3" height="5" fill="#33f233"/><rect x="174.0" y="42" width="3" height="8" fill="#33f233"/><rect x="178.0" y="49" width="3" height="9" fill="#33f233"/><rect x="190.5" y="52.5" width="2" height="7" fill="#000" stroke="#33f233"/><rect x="198.0" y="49" width="3" height="14" fill="#33f233"/><rect x="202.0" y="63" width="3" height="7" fill="#33f233"/><rect x="206.5" y="62.5" width="2" height="6" fill="#000" stroke="#33f233"/><rect x="210.0" y="62" width="3" height="6" fill="#33f233"/><rect x="214.0" y="68" width="3" height="15" fill="#33f233"/><rect x="218.5" y="79.5" width="2" height="3" fill="#000" stroke="#33f233"/><rect x="222.5" y="64.5" width="2" height="14" fill="#000" stroke="#33f233"/><rect x="234.5" y="59.5" width="2" height="2" fill="#000" stroke="#33f233"/><rect x="242.0" y="62" width="3" height="17" fill="#33f233"/><rect x="246.0" y="80" width="3" height="6" fill="#33f233"/><rect x="250.5" y="78.5" width="2" height="7" fill="#000" stroke="#33f233"/><rect x="254.5" y="72.5" width="2" height="6" fill="#000" stroke="#33f233"/><rect x="258.0" y="72" width="3" height="11" fill="#33f233"/><rect x="262.0" y="82" width="3" height="19" fill="#33f233"/><rect x="266.0" y="99" width="3" height="32" fill="#33f233"/><rect x="2.5" y="2.5" width="341" height="134" fill="none" stroke="#fff"/><rect x="3" y="137" width="1" height="3" fill="#fff"/><text x="2.3" y="149.2" font-size="10.3" textLength="50.5" fill="#ececec" lengthAdjust="spacingAndGlyphs">29 Aug 2025</text><rect x="67" y="137" width="1" height="3" fill="#fff"/><text x="66.3" y="149.2" font-size="10.3" textLength="53.5" fill="#ececec" lengthAdjust="spacingAndGlyphs">29 Aug 19:45</text><rect x="131" y="137" width="1" height="3" fill="#fff"/><text x="130.3" y="149.2" font-size="10.3" textLength="53.5" fill="#ececec" lengthAdjust="spacingAndGlyphs">29 Aug 21:05</text><rect x="195" y="137" width="1" height="3" fill="#fff"/><text x="194.3" y="149.2" font-size="10.3" textLength="53.5" fill="#ececec" lengthAdjust="spacingAndGlyphs">29 Aug 22:25</text><rect x="259" y="137" width="1" height="3" fill="#fff"/><text x="258.3" y="149.2" font-size="10.3" textLength="53.5" fill="#ececec" lengthAdjust="spacingAndGlyphs">29 Aug 23:45</text><rect x="344" y="33" width="2" height="1" fill="#fff"/><text x="349" y="36.7" font-size="10.3" textLength="32" fill="#ececec" lengthAdjust="spacingAndGlyphs">183.775</text><rect x="344" y="66" width="2" height="1" fill="#fff"/><text x="349" y="69.7" font-size="10.3" textLength="32" fill="#ececec" lengthAdjust="spacingAndGlyphs">183.690</text><rect x="344" y="99" width="2" height="1" fill="#fff"/><text x="349" y="102.7" font-size="10.3" textLength="32" fill="#ececec" lengthAdjust="spacingAndGlyphs">183.605</text><rect x="346" y="126" width="38.5" height="11" fill="#fff"/><text x="349" y="134.7" font-size="10.3" textLength="32" fill="#000" lengthAdjust="spacingAndGlyphs">183.522</text><path d="M6 8h7l-3.5 4z" fill="#fff" shape-rendering="auto"/><text x="18" y="14" font-size="10.3" textLength="44.4" fill="#ececec" lengthAdjust="spacingAndGlyphs">CHFJPY,M5</text><text x="69.2" y="14" font-size="10.3" textLength="140.7" fill="#ececec" lengthAdjust="spacingAndGlyphs">183.603 183.611 183.522 183.522</text><text x="239.4" y="15" font-size="10.3" textLength="83.1" fill="#ececec" lengthAdjust="spacingAndGlyphs">PhoenixSoar_CHFJPY</text><g shape-rendering="auto" fill="none" stroke="#ececec" stroke-width="1"><circle cx="332.3" cy="12.5" r="5"/><path d="M329.7 14q2.6 2.6 5.2 0"/><circle cx="330.5" cy="11" r="0.7" fill="#ececec" stroke="none"/><circle cx="334.1" cy="11" r="0.7" fill="#ececec" stroke="none"/></g><path d="M269.0 3h9l-4.5 5z" fill="#8c96a8" shape-rendering="auto"/></svg></div></div>
<div class="win" style="left:1003px;top:73px"><div class="tb"><svg width="14" height="14" viewBox="0 0 14 14" style="left:4px;top:6px"><rect x="0" y="0" width="10.500" height="8" fill="#4a8ce0"/><rect x="0.500" y="1.800" width="9.500" height="6" fill="#fff"/><path d="M1.500 4.500l1.500-1.500 1.500 1.500 1.500-1.500 1.500 1.500 1.500 .500" stroke="#2a5cb0" fill="none" stroke-width="0.900"/><rect x="3" y="7" width="10" height="6" fill="#fff" stroke="#4a8ce0" stroke-width="0.800"/><path d="M4.500 8.500l2 3 1.500-3 2 3 1.500-1.500" stroke="#2a5cb0" fill="none" stroke-width="0.900"/></svg><div class="tt">GBPJPY,M5</div>
<div class="cb" style="left:341px"><svg width="14" height="18"><rect x="3" y="13" width="6" height="2" fill="#000"/></svg></div>
<div class="cb" style="left:357px"><svg width="14" height="18"><rect x="2.5" y="5.5" width="9" height="8" fill="none" stroke="#000" stroke-width="1"/><rect x="2" y="5" width="10" height="2" fill="#000"/></svg></div>
<div class="cb" style="left:375px"><svg width="14" height="18"><path d="M3 5l8 8M11 5l-8 8" stroke="#000" stroke-width="1.8"/></svg></div>
</div><div class="cl"><svg width="390" height="157" viewBox="0 0 390 157" shape-rendering="crispEdges"><rect x="3" y="91" width="340" height="1" fill="#a4a9b0"/><path d="M3.5 64V86M7.5 74V96M11.5 74V87M15.5 78V94M19.5 86V101M23.5 89V106M27.5 86V105M31.5 89V109M35.5 77V101M34.0 94.5H37.0M39.5 87V122M43.5 72V109M47.5 67V84M51.5 72V107M55.5 105V117M59.5 95V115M63.5 94V107M67.5 103V122M71.5 104V128M75.5 90V106M79.5 92V129M83.5 112V131M87.5 113V128M91.5 109V129M95.5 92V112M94.0 109.5H97.0M94.0 110.5H97.0M99.5 99V114M103.5 100V113M107.5 106V117M106.0 107.5H109.0M106.0 108.5H109.0M111.5 97V107M115.5 77V99M119.5 60V79M123.5 60V87M127.5 82V90M131.5 78V91M135.5 73V86M134.0 79.5H137.0M139.5 73V84M138.0 79.5H141.0M143.5 78V91M147.5 73V91M151.5 67V79M155.5 67V83M159.5 59V79M163.5 52V70M167.5 44V67M171.5 23V51M175.5 11V30M179.5 17V23M178.0 21.5H181.0M183.5 19V39M187.5 33V43M191.5 28V42M190.0 38.5H193.0M195.5 37V47M199.5 40V55M203.5 42V57M207.5 33V45M211.5 30V49M215.5 44V72M219.5 22V60M223.5 10V37M227.5 27V40M231.5 26V36M230.0 32.5H233.0M230.0 33.5H233.0M235.5 23V33M239.5 19V29M243.5 19V40M247.5 20V53M251.5 42V54M255.5 34V47M259.5 41V57M263.5 17V61M267.5 43V98" stroke="#33f233" fill="none"/><rect x="2.5" y="76.5" width="2" height="4" fill="#000" stroke="#33f233"/><rect x="6.0" y="75" width="3" height="8" fill="#33f233"/><rect x="10.0" y="81" width="3" height="5" fill="#33f233"/><rect x="14.0" y="85" width="3" height="6" fill="#33f233"/><rect x="18.0" y="89" width="3" height="4" fill="#33f233"/><rect x="22.0" y="93" width="3" height="8" fill="#33f233"/><rect x="26.5" y="99.5" width="2" height="2" fill="#000" stroke="#33f233"/><rect x="30.5" y="94.5" width="2" height="6" fill="#000" stroke="#33f233"/><rect x="38.0" y="94" width="3" height="15" fill="#33f233"/><rect x="42.5" y="79.5" width="2" height="28" fill="#000" stroke="#33f233"/><rect x="46.0" y="76" width="3" height="7" fill="#33f233"/><rect x="50.0" y="82" width="3" height="24" fill="#33f233"/><rect x="54.0" y="105" width="3" height="10" fill="#33f233"/><rect x="58.5" y="99.5" width="2" height="14" fill="#000" stroke="#33f233"/><rect x="62.0" y="99" width="3" height="6" fill="#33f233"/><rect x="66.0" y="104" width="3" height="17" fill="#33f233"/><rect x="70.5" y="105.5" width="2" height="14" fill="#000" stroke="#33f233"/><rect x="74.5" y="92.5" width="2" height="12" fill="#000" stroke="#33f233"/><rect x="78.0" y="93" width="3" height="34" fill="#33f233"/><rect x="82.5" y="112.5" width="2" height="14" fill="#000" stroke="#33f233"/><rect x="86.0" y="114" width="3" height="7" fill="#33f233"/><rect x="90.5" y="110.5" width="2" height="11" fill="#000" stroke="#33f233"/><rect x="98.5" y="103.5" width="2" height="5" fill="#000" stroke="#33f233"/><rect x="102.0" y="101" width="3" height="8" fill="#33f233"/><rect x="110.5" y="98.5" width="2" height="7" fill="#000" stroke="#33f233"/><rect x="114.5" y="79.5" width="2" height="18" fill="#000" stroke="#33f233"/><rect x="118.5" y="63.5" width="2" height="15" fill="#000" stroke="#33f233"/><rect x="122.0" y="63" width="3" height="21" fill="#33f233"/><rect x="126.5" y="83.5" width="2" height="2" fill="#000" stroke="#33f233"/><rect x="130.5" y="79.5" width="2" height="4" fill="#000" stroke="#33f233"/><rect x="142.0" y="79" width="3" height="6" fill="#33f233"/><rect x="146.5" y="79.5" width="2" height="5" fill="#000" stroke="#33f233"/><rect x="150.5" y="68.5" width="2" height="9" fill="#000" stroke="#33f233"/><rect x="154.0" y="68" width="3" height="11" fill="#33f233"/><rect x="158.5" y="67.5" width="2" height="11" fill="#000" stroke="#33f233"/><rect x="162.5" y="57.5" width="2" height="9" fill="#000" stroke="#33f233"/><rect x="166.5" y="46.5" width="2" height="11" fill="#000" stroke="#33f233"/><rect x="170.5" y="25.5" width="2" height="20" fill="#000" stroke="#33f233"/><rect x="174.5" y="21.5" width="2" height="7" fill="#000" stroke="#33f233"/><rect x="182.0" y="21" width="3" height="16" fill="#33f233"/><rect x="186.5" y="36.5" width="2" height="2" fill="#000" stroke="#33f233"/><rect x="194.0" y="38" width="3" height="3" fill="#33f233"/><rect x="198.0" y="41" width="3" height="14" fill="#33f233"/><rect x="202.5" y="43.5" width="2" height="11" fill="#000" stroke="#33f233"/><rect x="206.5" y="34.5" width="2" height="9" fill="#000" stroke="#33f233"/><rect x="210.0" y="34" width="3" height="14" fill="#33f233"/><rect x="214.0" y="48" width="3" height="12" fill="#33f233"/><rect x="218.5" y="24.5" width="2" height="34" fill="#000" stroke="#33f233"/><rect x="222.0" y="24" width="3" height="11" fill="#33f233"/><rect x="226.0" y="34" width="3" height="4" fill="#33f233"/><rect x="234.5" y="27.5" width="2" height="4" fill="#000" stroke="#33f233"/><rect x="238.5" y="22.5" width="2" height="5" fill="#000" stroke="#33f233"/><rect x="242.0" y="22" width="3" height="10" fill="#33f233"/><rect x="246.0" y="30" width="3" height="21" fill="#33f233"/><rect x="250.5" y="47.5" width="2" height="2" fill="#000" stroke="#33f233"/><rect x="254.5" y="42.5" width="2" height="4" fill="#000" stroke="#33f233"/><rect x="258.0" y="44" width="3" height="11" fill="#33f233"/><rect x="262.5" y="52.5" width="2" height="2" fill="#000" stroke="#33f233"/><rect x="266.0" y="52" width="3" height="39" fill="#33f233"/><path d="M3 89.800L70 99.500" stroke="#e04028" stroke-dasharray="3 3" fill="none" shape-rendering="auto"/><path d="M74.500 95.500l-5.500 4 5.500 4.500z" fill="#000" stroke="#fff" shape-rendering="auto"/><rect x="2.5" y="2.5" width="341" height="134" fill="none" stroke="#fff"/><rect x="3" y="137" width="1" height="3" fill="#fff"/><text x="2.3" y="149.2" font-size="10.3" textLength="50.5" fill="#ececec" lengthAdjust="spacingAndGlyphs">29 Aug 2025</text><rect x="67" y="137" width="1" height="3" fill="#fff"/><text x="66.3" y="149.2" font-size="10.3" textLength="53.5" fill="#ececec" lengthAdjust="spacingAndGlyphs">29 Aug 19:45</text><rect x="131" y="137" width="1" height="3" fill="#fff"/><text x="130.3" y="149.2" font-size="10.3" textLength="53.5" fill="#ececec" lengthAdjust="spacingAndGlyphs">29 Aug 21:05</text><rect x="195" y="137" width="1" height="3" fill="#fff"/><text x="194.3" y="149.2" font-size="10.3" textLength="53.5" fill="#ececec" lengthAdjust="spacingAndGlyphs">29 Aug 22:25</text><rect x="259" y="137" width="1" height="3" fill="#fff"/><text x="258.3" y="149.2" font-size="10.3" textLength="53.5" fill="#ececec" lengthAdjust="spacingAndGlyphs">29 Aug 23:45</text><rect x="344" y="33" width="2" height="1" fill="#fff"/><text x="349" y="36.7" font-size="10.3" textLength="32" fill="#ececec" lengthAdjust="spacingAndGlyphs">198.595</text><rect x="344" y="66" width="2" height="1" fill="#fff"/><text x="349" y="69.7" font-size="10.3" textLength="32" fill="#ececec" lengthAdjust="spacingAndGlyphs">198.510</text><rect x="344" y="99" width="2" height="1" fill="#fff"/><text x="349" y="102.7" font-size="10.3" textLength="32" fill="#ececec" lengthAdjust="spacingAndGlyphs">198.425</text><rect x="344" y="133" width="2" height="1" fill="#fff"/><text x="349" y="136.7" font-size="10.3" textLength="32" fill="#ececec" lengthAdjust="spacingAndGlyphs">198.340</text><rect x="346" y="86" width="38.5" height="11" fill="#fff"/><text x="349" y="94.7" font-size="10.3" textLength="32" fill="#000" lengthAdjust="spacingAndGlyphs">198.444</text><path d="M6 8h7l-3.5 4z" fill="#fff" shape-rendering="auto"/><text x="18" y="14" font-size="10.3" textLength="44.4" fill="#ececec" lengthAdjust="spacingAndGlyphs">GBPJPY,M5</text><text x="69.2" y="14" font-size="10.3" textLength="140.7" fill="#ececec" lengthAdjust="spacingAndGlyphs">198.546 198.568 198.429 198.444</text><text x="242.2" y="15" font-size="10.3" textLength="84.4" fill="#ececec" lengthAdjust="spacingAndGlyphs">PhoenixSoar_GBPJPY</text><g shape-rendering="auto" fill="none" stroke="#ececec" stroke-width="1"><circle cx="332.3" cy="12.5" r="5"/><path d="M329.7 14q2.6 2.6 5.2 0"/><circle cx="330.5" cy="11" r="0.7" fill="#ececec" stroke="none"/><circle cx="334.1" cy="11" r="0.7" fill="#ececec" stroke="none"/></g><path d="M269.0 3h9l-4.5 5z" fill="#8c96a8" shape-rendering="auto"/></svg></div></div>
<div class="win" style="left:1404px;top:73px"><div class="tb"><svg width="14" height="14" viewBox="0 0 14 14" style="left:4px;top:6px"><rect x="0" y="0" width="10.500" height="8" fill="#4a8ce0"/><rect x="0.500" y="1.800" width="9.500" height="6" fill="#fff"/><path d="M1.500 4.500l1.500-1.500 1.500 1.500 1.500-1.500 1.500 1.500 1.500 .500" stroke="#2a5cb0" fill="none" stroke-width="0.900"/><rect x="3" y="7" width="10" height="6" fill="#fff" stroke="#4a8ce0" stroke-width="0.800"/><path d="M4.500 8.500l2 3 1.500-3 2 3 1.500-1.500" stroke="#2a5cb0" fill="none" stroke-width="0.900"/></svg><div class="tt">USDCHF,M5</div>
<div class="cb" style="left:341px"><svg width="14" height="18"><rect x="3" y="13" width="6" height="2" fill="#000"/></svg></div>
<div class="cb" style="left:357px"><svg width="14" height="18"><rect x="2.5" y="5.5" width="9" height="8" fill="none" stroke="#000" stroke-width="1"/><rect x="2" y="5" width="10" height="2" fill="#000"/></svg></div>
<div class="cb" style="left:375px"><svg width="14" height="18"><path d="M3 5l8 8M11 5l-8 8" stroke="#000" stroke-width="1.8"/></svg></div>
</div><div class="cl"><svg width="390" height="157" viewBox="0 0 390 157" shape-rendering="crispEdges"><rect x="3" y="47" width="340" height="1" fill="#a4a9b0"/><path d="M3.5 45V80M7.5 63V82M11.5 80V97M15.5 75V103M19.5 88V105M23.5 90V107M27.5 91V107M31.5 81V100M35.5 90V120M39.5 101V114M43.5 83V107M47.5 86V106M51.5 78V107M55.5 66V95M59.5 67V83M63.5 73V87M67.5 76V91M71.5 72V104M75.5 101V122M79.5 97V130M83.5 90V104M87.5 87V98M86.0 93.5H89.0M86.0 94.5H89.0M91.5 89V121M95.5 109V122M99.5 103V112M103.5 99V110M102.0 107.5H105.0M102.0 108.5H105.0M107.5 106V114M106.0 108.5H109.0M111.5 107V114M110.0 109.5H113.0M110.0 110.5H113.0M115.5 97V116M119.5 91V104M123.5 84V96M127.5 83V92M126.0 85.5H129.0M126.0 86.5H129.0M131.5 79V89M130.0 84.5H133.0M130.0 85.5H133.0M135.5 71V87M139.5 65V75M143.5 60V70M142.0 67.5H145.0M142.0 68.5H145.0M147.5 60V73M151.5 49V65M150.0 61.5H153.0M150.0 62.5H153.0M155.5 63V76M159.5 65V75M158.0 69.5H161.0M163.5 66V73M167.5 69V75M166.0 70.5H169.0M171.5 67V79M170.0 68.5H173.0M175.5 58V77M179.5 45V61M183.5 45V55M187.5 45V60M191.5 46V57M195.5 48V65M199.5 61V70M198.0 62.5H201.0M198.0 63.5H201.0M203.5 61V70M202.0 62.5H205.0M202.0 63.5H205.0M207.5 62V68M206.0 63.5H209.0M206.0 64.5H209.0M211.5 65V69M210.0 66.5H213.0M210.0 67.5H213.0M215.5 60V77M219.5 56V70M218.0 60.5H221.0M223.5 56V74M227.5 64V77M231.5 58V66M230.0 64.5H233.0M235.5 57V67M239.5 56V61M243.5 49V58M242.0 55.5H245.0M242.0 56.5H245.0M247.5 37V55M251.5 35V40M250.0 36.5H253.0M250.0 37.5H253.0M255.5 35V47M259.5 29V50M263.5 13V37M267.5 30V62" stroke="#33f233" fill="none"/><rect x="2.5" y="68.5" width="2" height="10" fill="#000" stroke="#33f233"/><rect x="6.0" y="67" width="3" height="15" fill="#33f233"/><rect x="10.0" y="81" width="3" height="8" fill="#33f233"/><rect x="14.0" y="88" width="3" height="14" fill="#33f233"/><rect x="18.5" y="90.5" width="2" height="10" fill="#000" stroke="#33f233"/><rect x="22.0" y="91" width="3" height="12" fill="#33f233"/><rect x="26.5" y="92.5" width="2" height="12" fill="#000" stroke="#33f233"/><rect x="30.0" y="92" width="3" height="6" fill="#33f233"/><rect x="34.0" y="97" width="3" height="16" fill="#33f233"/><rect x="38.5" y="104.5" width="2" height="8" fill="#000" stroke="#33f233"/><rect x="42.5" y="88.5" width="2" height="16" fill="#000" stroke="#33f233"/><rect x="46.0" y="88" width="3" height="13" fill="#33f233"/><rect x="50.5" y="83.5" width="2" height="17" fill="#000" stroke="#33f233"/><rect x="54.5" y="74.5" width="2" height="8" fill="#000" stroke="#33f233"/><rect x="58.0" y="74" width="3" height="5" fill="#33f233"/><rect x="62.0" y="79" width="3" height="7" fill="#33f233"/><rect x="66.5" y="77.5" width="2" height="8" fill="#000" stroke="#33f233"/><rect x="70.0" y="77" width="3" height="26" fill="#33f233"/><rect x="74.0" y="101" width="3" height="20" fill="#33f233"/><rect x="78.5" y="98.5" width="2" height="21" fill="#000" stroke="#33f233"/><rect x="82.5" y="95.5" width="2" height="2" fill="#000" stroke="#33f233"/><rect x="90.0" y="94" width="3" height="26" fill="#33f233"/><rect x="94.5" y="110.5" width="2" height="9" fill="#000" stroke="#33f233"/><rect x="98.5" y="106.5" width="2" height="3" fill="#000" stroke="#33f233"/><rect x="114.5" y="99.5" width="2" height="13" fill="#000" stroke="#33f233"/><rect x="118.5" y="95.5" width="2" height="4" fill="#000" stroke="#33f233"/><rect x="122.5" y="86.5" width="2" height="8" fill="#000" stroke="#33f233"/><rect x="134.5" y="74.5" width="2" height="11" fill="#000" stroke="#33f233"/><rect x="138.5" y="66.5" width="2" height="7" fill="#000" stroke="#33f233"/><rect x="146.5" y="61.5" width="2" height="5" fill="#000" stroke="#33f233"/><rect x="154.0" y="64" width="3" height="6" fill="#33f233"/><rect x="162.0" y="67" width="3" height="3" fill="#33f233"/><rect x="174.5" y="59.5" width="2" height="8" fill="#000" stroke="#33f233"/><rect x="178.5" y="46.5" width="2" height="12" fill="#000" stroke="#33f233"/><rect x="182.0" y="50" width="3" height="4" fill="#33f233"/><rect x="186.5" y="46.5" width="2" height="6" fill="#000" stroke="#33f233"/><rect x="190.0" y="47" width="3" height="5" fill="#33f233"/><rect x="194.0" y="52" width="3" height="12" fill="#33f233"/><rect x="214.5" y="61.5" width="2" height="6" fill="#000" stroke="#33f233"/><rect x="222.0" y="61" width="3" height="12" fill="#33f233"/><rect x="226.5" y="65.5" width="2" height="7" fill="#000" stroke="#33f233"/><rect x="234.5" y="58.5" width="2" height="7" fill="#000" stroke="#33f233"/><rect x="238.5" y="57.5" width="2" height="2" fill="#000" stroke="#33f233"/><rect x="246.5" y="38.5" width="2" height="15" fill="#000" stroke="#33f233"/><rect x="254.0" y="35" width="3" height="11" fill="#33f233"/><rect x="258.5" y="31.5" width="2" height="13" fill="#000" stroke="#33f233"/><rect x="262.5" y="28.5" width="2" height="2" fill="#000" stroke="#33f233"/><rect x="266.0" y="34" width="3" height="13" fill="#33f233"/><rect x="2.5" y="2.5" width="341" height="134" fill="none" stroke="#fff"/><rect x="3" y="137" width="1" height="3" fill="#fff"/><text x="2.3" y="149.2" font-size="10.3" textLength="50.5" fill="#ececec" lengthAdjust="spacingAndGlyphs">29 Aug 2025</text><rect x="67" y="137" width="1" height="3" fill="#fff"/><text x="66.3" y="149.2" font-size="10.3" textLength="53.5" fill="#ececec" lengthAdjust="spacingAndGlyphs">29 Aug 19:45</text><rect x="131" y="137" width="1" height="3" fill="#fff"/><text x="130.3" y="149.2" font-size="10.3" textLength="53.5" fill="#ececec" lengthAdjust="spacingAndGlyphs">29 Aug 21:05</text><rect x="195" y="137" width="1" height="3" fill="#fff"/><text x="194.3" y="149.2" font-size="10.3" textLength="53.5" fill="#ececec" lengthAdjust="spacingAndGlyphs">29 Aug 22:25</text><rect x="259" y="137" width="1" height="3" fill="#fff"/><text x="258.3" y="149.2" font-size="10.3" textLength="53.5" fill="#ececec" lengthAdjust="spacingAndGlyphs">29 Aug 23:45</text><rect x="344" y="28" width="2" height="1" fill="#fff"/><text x="349" y="31.7" font-size="10.3" textLength="32" fill="#ececec" lengthAdjust="spacingAndGlyphs">0.80055</text><rect x="344" y="63" width="2" height="1" fill="#fff"/><text x="349" y="66.7" font-size="10.3" textLength="32" fill="#ececec" lengthAdjust="spacingAndGlyphs">0.80005</text><rect x="344" y="97" width="2" height="1" fill="#fff"/><text x="349" y="100.7" font-size="10.3" textLength="32" fill="#ececec" lengthAdjust="spacingAndGlyphs">0.79955</text><rect x="344" y="132" width="2" height="1" fill="#fff"/><text x="349" y="135.7" font-size="10.3" textLength="32" fill="#ececec" lengthAdjust="spacingAndGlyphs">0.79905</text><rect x="346" y="42" width="38.5" height="11" fill="#fff"/><text x="349" y="50.7" font-size="10.3" textLength="32" fill="#000" lengthAdjust="spacingAndGlyphs">0.80028</text><path d="M6 8h7l-3.5 4z" fill="#fff" shape-rendering="auto"/><text x="18" y="14" font-size="10.3" textLength="47.8" fill="#ececec" lengthAdjust="spacingAndGlyphs">USDCHF,M5</text><text x="71.8" y="14" font-size="10.3" textLength="141.3" fill="#ececec" lengthAdjust="spacingAndGlyphs">0.80048 0.80052 0.80006 0.80028</text><text x="235" y="15" font-size="10.3" textLength="86.0" fill="#ececec" lengthAdjust="spacingAndGlyphs">PhoenixSoar_USDCHF</text><g shape-rendering="auto" fill="none" stroke="#ececec" stroke-width="1"><circle cx="332.3" cy="12.5" r="5"/><path d="M329.7 14q2.6 2.6 5.2 0"/><circle cx="330.5" cy="11" r="0.7" fill="#ececec" stroke="none"/><circle cx="334.1" cy="11" r="0.7" fill="#ececec" stroke="none"/></g><path d="M269.0 3h9l-4.5 5z" fill="#8c96a8" shape-rendering="auto"/></svg></div></div>
<div class="win" style="left:201px;top:268px"><div class="tb"><svg width="14" height="14" viewBox="0 0 14 14" style="left:4px;top:6px"><rect x="0" y="0" width="10.500" height="8" fill="#4a8ce0"/><rect x="0.500" y="1.800" width="9.500" height="6" fill="#fff"/><path d="M1.500 4.500l1.500-1.500 1.500 1.500 1.500-1.500 1.500 1.500 1.500 .500" stroke="#2a5cb0" fill="none" stroke-width="0.900"/><rect x="3" y="7" width="10" height="6" fill="#fff" stroke="#4a8ce0" stroke-width="0.800"/><path d="M4.500 8.500l2 3 1.500-3 2 3 1.500-1.500" stroke="#2a5cb0" fill="none" stroke-width="0.900"/></svg><div class="tt">AUDUSD,M5</div>
<div class="cb" style="left:341px"><svg width="14" height="18"><rect x="3" y="13" width="6" height="2" fill="#000"/></svg></div>
<div class="cb" style="left:357px"><svg width="14" height="18"><rect x="2.5" y="5.5" width="9" height="8" fill="none" stroke="#000" stroke-width="1"/><rect x="2" y="5" width="10" height="2" fill="#000"/></svg></div>
<div class="cb" style="left:375px"><svg width="14" height="18"><path d="M3 5l8 8M11 5l-8 8" stroke="#000" stroke-width="1.8"/></svg></div>
</div><div class="cl"><svg width="390" height="157" viewBox="0 0 390 157" shape-rendering="crispEdges"><path d="M3 35.500H343" stroke="#3cb043" stroke-dasharray="5 3 1 3" fill="none"/><text x="9.500" y="33" font-size="10.3" textLength="84" fill="#c8d0c8" lengthAdjust="spacingAndGlyphs">#17604380 sell 0.30</text><rect x="3" y="124" width="340" height="1" fill="#a4a9b0"/><path d="M3.5 59V82M7.5 62V88M6.0 75.5H9.0M6.0 76.5H9.0M11.5 49V81M15.5 45V66M19.5 47V63M23.5 35V61M27.5 30V44M31.5 33V53M30.0 41.5H33.0M35.5 21V51M39.5 22V42M43.5 21V37M47.5 14V37M51.5 13V44M55.5 28V43M59.5 26V38M58.0 30.5H61.0M63.5 28V40M62.0 30.5H65.0M62.0 31.5H65.0M67.5 27V46M71.5 16V47M75.5 12V22M79.5 20V49M83.5 34V49M87.5 35V49M91.5 25V52M95.5 25V45M99.5 43V54M103.5 39V51M107.5 34V46M111.5 29V42M115.5 26V40M119.5 29V44M118.0 37.5H121.0M118.0 38.5H121.0M123.5 35V48M127.5 40V50M131.5 34V54M135.5 34V52M139.5 42V53M138.0 49.5H141.0M143.5 48V64M147.5 52V70M151.5 53V68M155.5 46V57M154.0 54.5H157.0M159.5 47V59M163.5 44V61M167.5 41V51M166.0 45.5H169.0M166.0 46.5H169.0M171.5 29V46M175.5 31V40M174.0 34.5H177.0M179.5 29V36M183.5 30V40M187.5 37V51M191.5 31V50M195.5 35V45M194.0 39.5H197.0M194.0 40.5H197.0M199.5 32V43M198.0 39.5H201.0M198.0 40.5H201.0M203.5 33V45M207.5 19V37M211.5 14V25M210.0 20.5H213.0M215.5 20V40M219.5 30V45M223.5 19V40M222.0 31.5H225.0M227.5 28V41M231.5 36V48M230.0 36.5H233.0M230.0 37.5H233.0M235.5 36V49M239.5 34V44M243.5 36V46M242.0 39.5H245.0M247.5 44V68M251.5 65V81M255.5 62V76M259.5 63V112M263.5 91V127M267.5 75V124" stroke="#33f233" fill="none"/><rect x="2.5" y="73.5" width="2" height="7" fill="#000" stroke="#33f233"/><rect x="10.5" y="55.5" width="2" height="21" fill="#000" stroke="#33f233"/><rect x="14.5" y="52.5" width="2" height="2" fill="#000" stroke="#33f233"/><rect x="18.0" y="53" width="3" height="9" fill="#33f233"/><rect x="22.5" y="36.5" width="2" height="24" fill="#000" stroke="#33f233"/><rect x="26.0" y="35" width="3" height="7" fill="#33f233"/><rect x="34.5" y="31.5" width="2" height="10" fill="#000" stroke="#33f233"/><rect x="38.5" y="28.5" width="2" height="2" fill="#000" stroke="#33f233"/><rect x="42.0" y="28" width="3" height="7" fill="#33f233"/><rect x="46.5" y="16.5" width="2" height="18" fill="#000" stroke="#33f233"/><rect x="50.0" y="14" width="3" height="24" fill="#33f233"/><rect x="54.5" y="30.5" width="2" height="7" fill="#000" stroke="#33f233"/><rect x="66.0" y="31" width="3" height="15" fill="#33f233"/><rect x="70.5" y="17.5" width="2" height="28" fill="#000" stroke="#33f233"/><rect x="74.0" y="14" width="3" height="6" fill="#33f233"/><rect x="78.0" y="21" width="3" height="28" fill="#33f233"/><rect x="82.5" y="35.5" width="2" height="12" fill="#000" stroke="#33f233"/><rect x="86.0" y="36" width="3" height="6" fill="#33f233"/><rect x="90.5" y="35.5" width="2" height="7" fill="#000" stroke="#33f233"/><rect x="94.0" y="35" width="3" height="9" fill="#33f233"/><rect x="98.0" y="44" width="3" height="5" fill="#33f233"/><rect x="102.5" y="40.5" width="2" height="8" fill="#000" stroke="#33f233"/><rect x="106.5" y="36.5" width="2" height="4" fill="#000" stroke="#33f233"/><rect x="110.5" y="30.5" width="2" height="5" fill="#000" stroke="#33f233"/><rect x="114.0" y="28" width="3" height="11" fill="#33f233"/><rect x="122.0" y="38" width="3" height="5" fill="#33f233"/><rect x="126.0" y="42" width="3" height="5" fill="#33f233"/><rect x="130.5" y="35.5" width="2" height="11" fill="#000" stroke="#33f233"/><rect x="134.0" y="35" width="3" height="12" fill="#33f233"/><rect x="142.0" y="49" width="3" height="6" fill="#33f233"/><rect x="146.0" y="55" width="3" height="12" fill="#33f233"/><rect x="150.5" y="55.5" width="2" height="11" fill="#000" stroke="#33f233"/><rect x="158.0" y="55" width="3" height="3" fill="#33f233"/><rect x="162.5" y="45.5" width="2" height="15" fill="#000" stroke="#33f233"/><rect x="170.5" y="33.5" width="2" height="12" fill="#000" stroke="#33f233"/><rect x="178.5" y="31.5" width="2" height="2" fill="#000" stroke="#33f233"/><rect x="182.0" y="31" width="3" height="8" fill="#33f233"/><rect x="186.0" y="38" width="3" height="12" fill="#33f233"/><rect x="190.5" y="38.5" width="2" height="10" fill="#000" stroke="#33f233"/><rect x="202.5" y="34.5" width="2" height="5" fill="#000" stroke="#33f233"/><rect x="206.5" y="20.5" width="2" height="14" fill="#000" stroke="#33f233"/><rect x="214.0" y="20" width="3" height="20" fill="#33f233"/><rect x="218.5" y="35.5" width="2" height="3" fill="#000" stroke="#33f233"/><rect x="226.0" y="34" width="3" height="3" fill="#33f233"/><rect x="234.0" y="37" width="3" height="9" fill="#33f233"/><rect x="238.5" y="35.5" width="2" height="7" fill="#000" stroke="#33f233"/><rect x="246.0" y="44" width="3" height="22" fill="#33f233"/><rect x="250.0" y="66" width="3" height="10" fill="#33f233"/><rect x="254.5" y="67.5" width="2" height="7" fill="#000" stroke="#33f233"/><rect x="258.0" y="65" width="3" height="37" fill="#33f233"/><rect x="262.5" y="99.5" width="2" height="2" fill="#000" stroke="#33f233"/><rect x="266.0" y="98" width="3" height="26" fill="#33f233"/><rect x="2.5" y="2.5" width="341" height="134" fill="none" stroke="#fff"/><rect x="3" y="137" width="1" height="3" fill="#fff"/><text x="2.3" y="149.2" font-size="10.3" textLength="50.5" fill="#ececec" lengthAdjust="spacingAndGlyphs">29 Aug 2025</text><rect x="67" y="137" width="1" height="3" fill="#fff"/><text x="66.3" y="149.2" font-size="10.3" textLength="53.5" fill="#ececec" lengthAdjust="spacingAndGlyphs">29 Aug 19:45</text><rect x="131" y="137" width="1" height="3" fill="#fff"/><text x="130.3" y="149.2" font-size="10.3" textLength="53.5" fill="#ececec" lengthAdjust="spacingAndGlyphs">29 Aug 21:05</text><rect x="195" y="137" width="1" height="3" fill="#fff"/><text x="194.3" y="149.2" font-size="10.3" textLength="53.5" fill="#ececec" lengthAdjust="spacingAndGlyphs">29 Aug 22:25</text><rect x="259" y="137" width="1" height="3" fill="#fff"/><text x="258.3" y="149.2" font-size="10.3" textLength="53.5" fill="#ececec" lengthAdjust="spacingAndGlyphs">29 Aug 23:45</text><rect x="344" y="24" width="2" height="1" fill="#fff"/><text x="349" y="27.7" font-size="10.3" textLength="32" fill="#ececec" lengthAdjust="spacingAndGlyphs">0.65450</text><rect x="344" y="59" width="2" height="1" fill="#fff"/><text x="349" y="62.7" font-size="10.3" textLength="32" fill="#ececec" lengthAdjust="spacingAndGlyphs">0.65415</text><rect x="344" y="95" width="2" height="1" fill="#fff"/><text x="349" y="98.7" font-size="10.3" textLength="32" fill="#ececec" lengthAdjust="spacingAndGlyphs">0.65380</text><rect x="344" y="131" width="2" height="1" fill="#fff"/><text x="349" y="134.7" font-size="10.3" textLength="32" fill="#ececec" lengthAdjust="spacingAndGlyphs">0.65345</text><rect x="346" y="119" width="38.5" height="11" fill="#fff"/><text x="349" y="127.7" font-size="10.3" textLength="32" fill="#000" lengthAdjust="spacingAndGlyphs">0.65352</text><path d="M6 8h7l-3.5 4z" fill="#fff" shape-rendering="auto"/><text x="18" y="14" font-size="10.3" textLength="48.7" fill="#ececec" lengthAdjust="spacingAndGlyphs">AUDUSD,M5</text><text x="72.9" y="14" font-size="10.3" textLength="141.1" fill="#ececec" lengthAdjust="spacingAndGlyphs">0.65377 0.65400 0.65352 0.65352</text><text x="236.6" y="15" font-size="10.3" textLength="87.2" fill="#ececec" lengthAdjust="spacingAndGlyphs">PhoenixSoar_AUDUSD</text><g shape-rendering="auto" fill="none" stroke="#ececec" stroke-width="1"><circle cx="332.3" cy="12.5" r="5"/><path d="M329.7 14q2.6 2.6 5.2 0"/><circle cx="330.5" cy="11" r="0.7" fill="#ececec" stroke="none"/><circle cx="334.1" cy="11" r="0.7" fill="#ececec" stroke="none"/></g><path d="M269.0 3h9l-4.5 5z" fill="#8c96a8" shape-rendering="auto"/></svg></div></div>
<div class="win" style="left:602px;top:268px"><div class="tb"><svg width="14" height="14" viewBox="0 0 14 14" style="left:4px;top:6px"><rect x="0" y="0" width="10.500" height="8" fill="#4a8ce0"/><rect x="0.500" y="1.800" width="9.500" height="6" fill="#fff"/><path d="M1.500 4.500l1.500-1.500 1.500 1.500 1.500-1.500 1.500 1.500 1.500 .500" stroke="#2a5cb0" fill="none" stroke-width="0.900"/><rect x="3" y="7" width="10" height="6" fill="#fff" stroke="#4a8ce0" stroke-width="0.800"/><path d="M4.500 8.500l2 3 1.500-3 2 3 1.500-1.500" stroke="#2a5cb0" fill="none" stroke-width="0.900"/></svg><div class="tt">EURAUD,M5</div>
<div class="cb" style="left:341px"><svg width="14" height="18"><rect x="3" y="13" width="6" height="2" fill="#000"/></svg></div>
<div class="cb" style="left:357px"><svg width="14" height="18"><rect x="2.5" y="5.5" width="9" height="8" fill="none" stroke="#000" stroke-width="1"/><rect x="2" y="5" width="10" height="2" fill="#000"/></svg></div>
<div class="cb" style="left:375px"><svg width="14" height="18"><path d="M3 5l8 8M11 5l-8 8" stroke="#000" stroke-width="1.8"/></svg></div>
</div><div class="cl"><svg width="390" height="157" viewBox="0 0 390 157" shape-rendering="crispEdges"><rect x="3" y="102" width="340" height="1" fill="#a4a9b0"/><path d="M3.5 16V40M7.5 14V30M6.0 18.5H9.0M6.0 19.5H9.0M11.5 14V40M15.5 30V47M19.5 28V40M18.0 30.5H21.0M23.5 29V59M27.5 55V83M31.5 63V86M35.5 44V69M39.5 39V57M43.5 33V47M47.5 30V55M51.5 28V53M50.0 48.5H53.0M50.0 49.5H53.0M55.5 47V80M59.5 55V80M63.5 46V59M67.5 51V66M71.5 51V66M75.5 55V70M79.5 42V62M83.5 50V66M87.5 55V67M91.5 49V62M95.5 43V59M99.5 44V55M103.5 47V62M107.5 52V61M111.5 55V60M110.0 58.5H113.0M115.5 55V65M119.5 58V69M118.0 60.5H121.0M118.0 61.5H121.0M123.5 58V69M127.5 56V69M131.5 56V70M135.5 63V73M134.0 70.5H137.0M134.0 71.5H137.0M139.5 69V77M138.0 72.5H141.0M143.5 62V74M147.5 55V67M151.5 55V63M155.5 56V66M159.5 56V66M163.5 56V62M162.0 57.5H165.0M167.5 55V65M171.5 58V70M170.0 62.5H173.0M170.0 63.5H173.0M175.5 54V76M179.5 73V89M183.5 80V90M187.5 73V84M191.5 79V95M195.5 74V91M199.5 67V79M203.5 66V77M202.0 72.5H205.0M202.0 73.5H205.0M207.5 71V85M211.5 77V89M210.0 81.5H213.0M215.5 63V82M219.5 54V77M223.5 55V79M222.0 64.5H225.0M222.0 65.5H225.0M227.5 58V69M226.0 63.5H229.0M226.0 64.5H229.0M231.5 58V72M235.5 69V74M234.0 71.5H237.0M234.0 72.5H237.0M239.5 69V81M243.5 72V81M247.5 62V76M251.5 58V67M255.5 65V76M259.5 62V98M263.5 64V92M262.0 79.5H265.0M262.0 80.5H265.0M267.5 66V130" stroke="#33f233" fill="none"/><rect x="2.5" y="18.5" width="2" height="21" fill="#000" stroke="#33f233"/><rect x="10.0" y="19" width="3" height="20" fill="#33f233"/><rect x="14.5" y="31.5" width="2" height="7" fill="#000" stroke="#33f233"/><rect x="22.0" y="30" width="3" height="28" fill="#33f233"/><rect x="26.0" y="58" width="3" height="24" fill="#33f233"/><rect x="30.5" y="64.5" width="2" height="16" fill="#000" stroke="#33f233"/><rect x="34.5" y="48.5" width="2" height="15" fill="#000" stroke="#33f233"/><rect x="38.5" y="45.5" width="2" height="3" fill="#000" stroke="#33f233"/><rect x="42.5" y="34.5" width="2" height="10" fill="#000" stroke="#33f233"/><rect x="46.0" y="34" width="3" height="15" fill="#33f233"/><rect x="54.0" y="48" width="3" height="29" fill="#33f233"/><rect x="58.5" y="56.5" width="2" height="22" fill="#000" stroke="#33f233"/><rect x="62.5" y="55.5" width="2" height="2" fill="#000" stroke="#33f233"/><rect x="66.0" y="56" width="3" height="3" fill="#33f233"/><rect x="70.5" y="55.5" width="2" height="3" fill="#000" stroke="#33f233"/><rect x="74.0" y="56" width="3" height="3" fill="#33f233"/><rect x="78.5" y="57.5" width="2" height="3" fill="#000" stroke="#33f233"/><rect x="82.0" y="58" width="3" height="5" fill="#33f233"/><rect x="86.5" y="59.5" width="2" height="3" fill="#000" stroke="#33f233"/><rect x="90.5" y="51.5" width="2" height="8" fill="#000" stroke="#33f233"/><rect x="94.5" y="49.5" width="2" height="2" fill="#000" stroke="#33f233"/><rect x="98.0" y="47" width="3" height="3" fill="#33f233"/><rect x="102.0" y="49" width="3" height="6" fill="#33f233"/><rect x="106.0" y="55" width="3" height="4" fill="#33f233"/><rect x="114.0" y="58" width="3" height="3" fill="#33f233"/><rect x="122.0" y="59" width="3" height="9" fill="#33f233"/><rect x="126.5" y="59.5" width="2" height="8" fill="#000" stroke="#33f233"/><rect x="130.0" y="59" width="3" height="10" fill="#33f233"/><rect x="142.5" y="65.5" width="2" height="7" fill="#000" stroke="#33f233"/><rect x="146.5" y="61.5" width="2" height="4" fill="#000" stroke="#33f233"/><rect x="150.5" y="58.5" width="2" height="2" fill="#000" stroke="#33f233"/><rect x="154.0" y="58" width="3" height="4" fill="#33f233"/><rect x="158.5" y="56.5" width="2" height="5" fill="#000" stroke="#33f233"/><rect x="166.0" y="57" width="3" height="4" fill="#33f233"/><rect x="174.0" y="64" width="3" height="11" fill="#33f233"/><rect x="178.0" y="74" width="3" height="11" fill="#33f233"/><rect x="182.5" y="82.5" width="2" height="2" fill="#000" stroke="#33f233"/><rect x="186.5" y="80.5" width="2" height="2" fill="#000" stroke="#33f233"/><rect x="190.0" y="80" width="3" height="10" fill="#33f233"/><rect x="194.5" y="76.5" width="2" height="13" fill="#000" stroke="#33f233"/><rect x="198.5" y="74.5" width="2" height="2" fill="#000" stroke="#33f233"/><rect x="206.0" y="72" width="3" height="9" fill="#33f233"/><rect x="214.5" y="67.5" width="2" height="14" fill="#000" stroke="#33f233"/><rect x="218.5" y="65.5" width="2" height="2" fill="#000" stroke="#33f233"/><rect x="230.0" y="64" width="3" height="7" fill="#33f233"/><rect x="238.0" y="73" width="3" height="7" fill="#33f233"/><rect x="242.5" y="75.5" width="2" height="4" fill="#000" stroke="#33f233"/><rect x="246.5" y="63.5" width="2" height="11" fill="#000" stroke="#33f233"/><rect x="250.0" y="62" width="3" height="4" fill="#33f233"/><rect x="254.0" y="66" width="3" height="9" fill="#33f233"/><rect x="258.0" y="77" width="3" height="3" fill="#33f233"/><rect x="266.0" y="80" width="3" height="22" fill="#33f233"/><rect x="2.5" y="2.5" width="341" height="134" fill="none" stroke="#fff"/><rect x="3" y="137" width="1" height="3" fill="#fff"/><text x="2.3" y="149.2" font-size="10.3" textLength="50.5" fill="#ececec" lengthAdjust="spacingAndGlyphs">29 Aug 2025</text><rect x="67" y="137" width="1" height="3" fill="#fff"/><text x="66.3" y="149.2" font-size="10.3" textLength="53.5" fill="#ececec" lengthAdjust="spacingAndGlyphs">29 Aug 19:45</text><rect x="131" y="137" width="1" height="3" fill="#fff"/><text x="130.3" y="149.2" font-size="10.3" textLength="53.5" fill="#ececec" lengthAdjust="spacingAndGlyphs">29 Aug 21:05</text><rect x="195" y="137" width="1" height="3" fill="#fff"/><text x="194.3" y="149.2" font-size="10.3" textLength="53.5" fill="#ececec" lengthAdjust="spacingAndGlyphs">29 Aug 22:25</text><rect x="259" y="137" width="1" height="3" fill="#fff"/><text x="258.3" y="149.2" font-size="10.3" textLength="53.5" fill="#ececec" lengthAdjust="spacingAndGlyphs">29 Aug 23:45</text><rect x="344" y="31" width="2" height="1" fill="#fff"/><text x="349" y="34.7" font-size="10.3" textLength="32" fill="#ececec" lengthAdjust="spacingAndGlyphs">1.78820</text><rect x="344" y="65" width="2" height="1" fill="#fff"/><text x="349" y="68.7" font-size="10.3" textLength="32" fill="#ececec" lengthAdjust="spacingAndGlyphs">1.78735</text><rect x="344" y="133" width="2" height="1" fill="#fff"/><text x="349" y="136.7" font-size="10.3" textLength="32" fill="#ececec" lengthAdjust="spacingAndGlyphs">1.78565</text><rect x="346" y="97" width="38.5" height="11" fill="#fff"/><text x="349" y="105.7" font-size="10.3" textLength="32" fill="#000" lengthAdjust="spacingAndGlyphs">1.78643</text><path d="M6 8h7l-3.5 4z" fill="#fff" shape-rendering="auto"/><text x="18" y="14" font-size="10.3" textLength="48.7" fill="#ececec" lengthAdjust="spacingAndGlyphs">EURAUD,M5</text><text x="73.7" y="14" font-size="10.3" textLength="140.3" fill="#ececec" lengthAdjust="spacingAndGlyphs">1.78699 1.78734 1.78576 1.78643</text><text x="236.6" y="15" font-size="10.3" textLength="87.2" fill="#ececec" lengthAdjust="spacingAndGlyphs">PhoenixSoar_EURAUD</text><g shape-rendering="auto" fill="none" stroke="#ececec" stroke-width="1"><circle cx="332.3" cy="12.5" r="5"/><path d="M329.7 14q2.6 2.6 5.2 0"/><circle cx="330.5" cy="11" r="0.7" fill="#ececec" stroke="none"/><circle cx="334.1" cy="11" r="0.7" fill="#ececec" stroke="none"/></g><path d="M269.0 3h9l-4.5 5z" fill="#8c96a8" shape-rendering="auto"/></svg></div></div>
<div class="win" style="left:1003px;top:268px"><div class="tb"><svg width="14" height="14" viewBox="0 0 14 14" style="left:4px;top:6px"><rect x="0" y="0" width="10.500" height="8" fill="#4a8ce0"/><rect x="0.500" y="1.800" width="9.500" height="6" fill="#fff"/><path d="M1.500 4.500l1.500-1.500 1.500 1.500 1.500-1.500 1.500 1.500 1.500 .500" stroke="#2a5cb0" fill="none" stroke-width="0.900"/><rect x="3" y="7" width="10" height="6" fill="#fff" stroke="#4a8ce0" stroke-width="0.800"/><path d="M4.500 8.500l2 3 1.500-3 2 3 1.500-1.500" stroke="#2a5cb0" fill="none" stroke-width="0.900"/></svg><div class="tt">NZDJPY,M5</div>
<div class="cb" style="left:341px"><svg width="14" height="18"><rect x="3" y="13" width="6" height="2" fill="#000"/></svg></div>
<div class="cb" style="left:357px"><svg width="14" height="18"><rect x="2.5" y="5.5" width="9" height="8" fill="none" stroke="#000" stroke-width="1"/><rect x="2" y="5" width="10" height="2" fill="#000"/></svg></div>
<div class="cb" style="left:375px"><svg width="14" height="18"><path d="M3 5l8 8M11 5l-8 8" stroke="#000" stroke-width="1.8"/></svg></div>
</div><div class="cl"><svg width="390" height="157" viewBox="0 0 390 157" shape-rendering="crispEdges"><rect x="3" y="92" width="345" height="1" fill="#a4a9b0"/><path d="M3.5 89V128M7.5 69V96M11.5 83V106M10.0 86.5H13.0M15.5 71V90M19.5 72V92M23.5 86V101M27.5 78V101M31.5 64V83M35.5 67V84M34.0 76.5H37.0M39.5 58V89M43.5 56V79M42.0 70.5H45.0M47.5 41V79M51.5 36V55M55.5 45V73M59.5 61V74M63.5 53V68M67.5 54V69M71.5 61V72M75.5 55V76M79.5 49V59M83.5 51V81M87.5 70V86M91.5 70V86M95.5 80V98M94.0 81.5H97.0M94.0 82.5H97.0M99.5 67V84M98.0 81.5H101.0M98.0 82.5H101.0M103.5 79V90M107.5 74V87M111.5 69V82M115.5 58V71M119.5 39V62M123.5 30V43M127.5 31V54M131.5 44V58M135.5 40V59M139.5 39V52M143.5 35V47M147.5 39V54M151.5 47V61M150.0 48.5H153.0M150.0 49.5H153.0M155.5 39V49M159.5 36V46M163.5 40V48M167.5 33V50M171.5 25V44M175.5 18V32M179.5 16V33M183.5 14V30M187.5 14V34M191.5 31V37M190.0 33.5H193.0M190.0 34.5H193.0M195.5 20V34M199.5 25V44M203.5 36V52M207.5 49V62M206.0 51.5H209.0M211.5 34V55M215.5 32V46M219.5 44V68M223.5 52V70M227.5 44V62M231.5 44V54M235.5 43V53M239.5 38V49M243.5 39V46M242.0 41.5H245.0M242.0 42.5H245.0M247.5 40V65M251.5 50V70M255.5 58V74M259.5 50V66M263.5 49V73M267.5 55V76M271.5 52V95" stroke="#33f233" fill="none"/><rect x="2.5" y="90.5" width="2" height="37" fill="#000" stroke="#33f233"/><rect x="6.5" y="86.5" width="2" height="5" fill="#000" stroke="#33f233"/><rect x="14.5" y="79.5" width="2" height="8" fill="#000" stroke="#33f233"/><rect x="18.0" y="79" width="3" height="13" fill="#33f233"/><rect x="22.0" y="91" width="3" height="3" fill="#33f233"/><rect x="26.5" y="80.5" width="2" height="13" fill="#000" stroke="#33f233"/><rect x="30.5" y="75.5" width="2" height="4" fill="#000" stroke="#33f233"/><rect x="38.5" y="71.5" width="2" height="5" fill="#000" stroke="#33f233"/><rect x="46.5" y="53.5" width="2" height="17" fill="#000" stroke="#33f233"/><rect x="50.5" y="49.5" width="2" height="2" fill="#000" stroke="#33f233"/><rect x="54.0" y="50" width="3" height="21" fill="#33f233"/><rect x="58.5" y="64.5" width="2" height="5" fill="#000" stroke="#33f233"/><rect x="62.5" y="55.5" width="2" height="8" fill="#000" stroke="#33f233"/><rect x="66.0" y="55" width="3" height="10" fill="#33f233"/><rect x="70.0" y="64" width="3" height="7" fill="#33f233"/><rect x="74.5" y="56.5" width="2" height="13" fill="#000" stroke="#33f233"/><rect x="78.5" y="52.5" width="2" height="5" fill="#000" stroke="#33f233"/><rect x="82.0" y="52" width="3" height="28" fill="#33f233"/><rect x="86.5" y="70.5" width="2" height="9" fill="#000" stroke="#33f233"/><rect x="90.0" y="71" width="3" height="13" fill="#33f233"/><rect x="102.0" y="82" width="3" height="4" fill="#33f233"/><rect x="106.5" y="77.5" width="2" height="8" fill="#000" stroke="#33f233"/><rect x="110.5" y="70.5" width="2" height="8" fill="#000" stroke="#33f233"/><rect x="114.5" y="59.5" width="2" height="10" fill="#000" stroke="#33f233"/><rect x="118.5" y="43.5" width="2" height="15" fill="#000" stroke="#33f233"/><rect x="122.5" y="32.5" width="2" height="9" fill="#000" stroke="#33f233"/><rect x="126.0" y="32" width="3" height="16" fill="#33f233"/><rect x="130.0" y="45" width="3" height="12" fill="#33f233"/><rect x="134.5" y="40.5" width="2" height="16" fill="#000" stroke="#33f233"/><rect x="138.0" y="40" width="3" height="7" fill="#33f233"/><rect x="142.5" y="39.5" width="2" height="6" fill="#000" stroke="#33f233"/><rect x="146.0" y="40" width="3" height="11" fill="#33f233"/><rect x="154.5" y="40.5" width="2" height="8" fill="#000" stroke="#33f233"/><rect x="158.0" y="40" width="3" height="4" fill="#33f233"/><rect x="162.0" y="44" width="3" height="3" fill="#33f233"/><rect x="166.5" y="38.5" width="2" height="10" fill="#000" stroke="#33f233"/><rect x="170.5" y="25.5" width="2" height="13" fill="#000" stroke="#33f233"/><rect x="174.5" y="19.5" width="2" height="5" fill="#000" stroke="#33f233"/><rect x="178.0" y="20" width="3" height="9" fill="#33f233"/><rect x="182.5" y="16.5" width="2" height="12" fill="#000" stroke="#33f233"/><rect x="186.0" y="17" width="3" height="15" fill="#33f233"/><rect x="194.5" y="25.5" width="2" height="8" fill="#000" stroke="#33f233"/><rect x="198.0" y="25" width="3" height="12" fill="#33f233"/><rect x="202.0" y="38" width="3" height="13" fill="#33f233"/><rect x="210.5" y="34.5" width="2" height="17" fill="#000" stroke="#33f233"/><rect x="214.0" y="34" width="3" height="12" fill="#33f233"/><rect x="218.0" y="45" width="3" height="18" fill="#33f233"/><rect x="222.5" y="53.5" width="2" height="10" fill="#000" stroke="#33f233"/><rect x="226.5" y="49.5" width="2" height="4" fill="#000" stroke="#33f233"/><rect x="230.0" y="49" width="3" height="4" fill="#33f233"/><rect x="234.5" y="48.5" width="2" height="3" fill="#000" stroke="#33f233"/><rect x="238.5" y="40.5" width="2" height="6" fill="#000" stroke="#33f233"/><rect x="246.0" y="41" width="3" height="17" fill="#33f233"/><rect x="250.0" y="58" width="3" height="11" fill="#33f233"/><rect x="254.5" y="58.5" width="2" height="11" fill="#000" stroke="#33f233"/><rect x="258.5" y="57.5" width="2" height="3" fill="#000" stroke="#33f233"/><rect x="262.0" y="55" width="3" height="11" fill="#33f233"/><rect x="266.5" y="61.5" width="2" height="7" fill="#000" stroke="#33f233"/><rect x="270.0" y="61" width="3" height="31" fill="#33f233"/><rect x="2.5" y="2.5" width="346" height="134" fill="none" stroke="#fff"/><rect x="3" y="137" width="1" height="3" fill="#fff"/><text x="2.3" y="149.2" font-size="10.3" textLength="50.5" fill="#ececec" lengthAdjust="spacingAndGlyphs">29 Aug 2025</text><rect x="67" y="137" width="1" height="3" fill="#fff"/><text x="66.3" y="149.2" font-size="10.3" textLength="53.5" fill="#ececec" lengthAdjust="spacingAndGlyphs">29 Aug 19:40</text><rect x="131" y="137" width="1" height="3" fill="#fff"/><text x="130.3" y="149.2" font-size="10.3" textLength="53.5" fill="#ececec" lengthAdjust="spacingAndGlyphs">29 Aug 21:00</text><rect x="195" y="137" width="1" height="3" fill="#fff"/><text x="194.3" y="149.2" font-size="10.3" textLength="53.5" fill="#ececec" lengthAdjust="spacingAndGlyphs">29 Aug 22:20</text><rect x="259" y="137" width="1" height="3" fill="#fff"/><text x="258.3" y="149.2" font-size="10.3" textLength="53.5" fill="#ececec" lengthAdjust="spacingAndGlyphs">29 Aug 23:40</text><rect x="349" y="33" width="2" height="1" fill="#fff"/><text x="354" y="36.7" font-size="10.3" textLength="27.3" fill="#ececec" lengthAdjust="spacingAndGlyphs">86.720</text><rect x="349" y="66" width="2" height="1" fill="#fff"/><text x="354" y="69.7" font-size="10.3" textLength="27.3" fill="#ececec" lengthAdjust="spacingAndGlyphs">86.675</text><rect x="349" y="99" width="2" height="1" fill="#fff"/><text x="354" y="102.7" font-size="10.3" textLength="27.3" fill="#ececec" lengthAdjust="spacingAndGlyphs">86.630</text><rect x="349" y="132" width="2" height="1" fill="#fff"/><text x="354" y="135.7" font-size="10.3" textLength="27.3" fill="#ececec" lengthAdjust="spacingAndGlyphs">86.585</text><rect x="351" y="87" width="33.8" height="11" fill="#fff"/><text x="354" y="95.7" font-size="10.3" textLength="27.3" fill="#000" lengthAdjust="spacingAndGlyphs">86.639</text><path d="M6 8h7l-3.5 4z" fill="#fff" shape-rendering="auto"/><text x="18" y="14" font-size="10.3" textLength="45.6" fill="#ececec" lengthAdjust="spacingAndGlyphs">NZDJPY,M5</text><text x="69.9" y="14" font-size="10.3" textLength="121.3" fill="#ececec" lengthAdjust="spacingAndGlyphs">86.683 86.694 86.636 86.639</text><text x="243.1" y="15" font-size="10.3" textLength="84.1" fill="#ececec" lengthAdjust="spacingAndGlyphs">PhoenixSoar_NZDJPY</text><g shape-rendering="auto" fill="none" stroke="#ececec" stroke-width="1"><circle cx="337.3" cy="12.5" r="5"/><path d="M334.7 14q2.6 2.6 5.2 0"/><circle cx="335.5" cy="11" r="0.7" fill="#ececec" stroke="none"/><circle cx="339.1" cy="11" r="0.7" fill="#ececec" stroke="none"/></g><path d="M273.0 3h9l-4.5 5z" fill="#8c96a8" shape-rendering="auto"/></svg></div></div>
<div class="win" style="left:1404px;top:268px"><div class="tb"><svg width="14" height="14" viewBox="0 0 14 14" style="left:4px;top:6px"><rect x="0" y="0" width="10.500" height="8" fill="#4a8ce0"/><rect x="0.500" y="1.800" width="9.500" height="6" fill="#fff"/><path d="M1.500 4.500l1.500-1.500 1.500 1.500 1.500-1.500 1.500 1.500 1.500 .500" stroke="#2a5cb0" fill="none" stroke-width="0.900"/><rect x="3" y="7" width="10" height="6" fill="#fff" stroke="#4a8ce0" stroke-width="0.800"/><path d="M4.500 8.500l2 3 1.500-3 2 3 1.500-1.500" stroke="#2a5cb0" fill="none" stroke-width="0.900"/></svg><div class="tt">USDJPY,M5</div>
<div class="cb" style="left:341px"><svg width="14" height="18"><rect x="3" y="13" width="6" height="2" fill="#000"/></svg></div>
<div class="cb" style="left:357px"><svg width="14" height="18"><rect x="2.5" y="5.5" width="9" height="8" fill="none" stroke="#000" stroke-width="1"/><rect x="2" y="5" width="10" height="2" fill="#000"/></svg></div>
<div class="cb" style="left:375px"><svg width="14" height="18"><path d="M3 5l8 8M11 5l-8 8" stroke="#000" stroke-width="1.8"/></svg></div>
</div><div class="cl"><svg width="390" height="157" viewBox="0 0 390 157" shape-rendering="crispEdges"><rect x="3" y="47" width="340" height="1" fill="#a4a9b0"/><path d="M3.5 73V92M7.5 84V102M11.5 86V103M15.5 87V113M19.5 107V122M18.0 109.5H21.0M18.0 110.5H21.0M23.5 108V131M27.5 100V118M31.5 94V105M35.5 98V121M39.5 93V111M38.0 108.5H41.0M38.0 109.5H41.0M43.5 77V112M47.5 83V99M51.5 90V107M50.0 98.5H53.0M50.0 99.5H53.0M55.5 87V106M59.5 86V94M63.5 83V101M67.5 85V104M71.5 85V102M75.5 94V101M79.5 93V109M78.0 98.5H81.0M83.5 95V109M87.5 91V101M86.0 98.5H89.0M86.0 99.5H89.0M91.5 96V107M95.5 94V105M99.5 87V98M98.0 96.5H101.0M103.5 90V101M107.5 97V104M106.0 98.5H109.0M106.0 99.5H109.0M111.5 94V102M115.5 69V99M119.5 60V72M123.5 59V71M127.5 69V77M131.5 69V79M130.0 73.5H133.0M130.0 74.5H133.0M135.5 62V76M139.5 56V64M138.0 62.5H141.0M143.5 60V66M147.5 55V70M151.5 51V64M155.5 60V70M159.5 61V67M163.5 60V66M167.5 52V70M171.5 52V70M175.5 51V58M179.5 46V54M183.5 44V56M187.5 46V57M191.5 46V52M190.0 47.5H193.0M190.0 48.5H193.0M195.5 47V60M199.5 57V72M203.5 68V75M207.5 66V76M211.5 65V78M215.5 76V95M219.5 73V89M223.5 65V93M222.0 78.5H225.0M227.5 70V80M231.5 64V72M230.0 70.5H233.0M235.5 59V72M239.5 58V65M238.0 61.5H241.0M238.0 62.5H241.0M243.5 60V77M247.5 51V72M251.5 51V60M255.5 49V56M254.0 51.5H257.0M254.0 52.5H257.0M259.5 42V60M263.5 12V49M267.5 46V58M266.0 47.5H269.0M266.0 48.5H269.0" stroke="#33f233" fill="none"/><rect x="2.5" y="86.5" width="2" height="4" fill="#000" stroke="#33f233"/><rect x="6.0" y="85" width="3" height="9" fill="#33f233"/><rect x="10.0" y="93" width="3" height="6" fill="#33f233"/><rect x="14.0" y="99" width="3" height="13" fill="#33f233"/><rect x="22.0" y="109" width="3" height="7" fill="#33f233"/><rect x="26.5" y="101.5" width="2" height="15" fill="#000" stroke="#33f233"/><rect x="30.0" y="101" width="3" height="3" fill="#33f233"/><rect x="34.0" y="104" width="3" height="5" fill="#33f233"/><rect x="42.5" y="86.5" width="2" height="23" fill="#000" stroke="#33f233"/><rect x="46.0" y="85" width="3" height="12" fill="#33f233"/><rect x="54.5" y="94.5" width="2" height="4" fill="#000" stroke="#33f233"/><rect x="58.5" y="88.5" width="2" height="4" fill="#000" stroke="#33f233"/><rect x="62.0" y="87" width="3" height="13" fill="#33f233"/><rect x="66.5" y="86.5" width="2" height="13" fill="#000" stroke="#33f233"/><rect x="70.0" y="86" width="3" height="15" fill="#33f233"/><rect x="74.5" y="97.5" width="2" height="3" fill="#000" stroke="#33f233"/><rect x="82.5" y="96.5" width="2" height="2" fill="#000" stroke="#33f233"/><rect x="90.0" y="97" width="3" height="7" fill="#33f233"/><rect x="94.5" y="95.5" width="2" height="7" fill="#000" stroke="#33f233"/><rect x="102.0" y="95" width="3" height="4" fill="#33f233"/><rect x="110.5" y="96.5" width="2" height="2" fill="#000" stroke="#33f233"/><rect x="114.5" y="69.5" width="2" height="28" fill="#000" stroke="#33f233"/><rect x="118.5" y="61.5" width="2" height="8" fill="#000" stroke="#33f233"/><rect x="122.0" y="61" width="3" height="9" fill="#33f233"/><rect x="126.0" y="70" width="3" height="3" fill="#33f233"/><rect x="134.5" y="64.5" width="2" height="10" fill="#000" stroke="#33f233"/><rect x="142.0" y="62" width="3" height="3" fill="#33f233"/><rect x="146.5" y="57.5" width="2" height="8" fill="#000" stroke="#33f233"/><rect x="150.0" y="56" width="3" height="5" fill="#33f233"/><rect x="154.0" y="61" width="3" height="4" fill="#33f233"/><rect x="158.5" y="62.5" width="2" height="3" fill="#000" stroke="#33f233"/><rect x="162.0" y="61" width="3" height="4" fill="#33f233"/><rect x="166.5" y="53.5" width="2" height="14" fill="#000" stroke="#33f233"/><rect x="170.0" y="52" width="3" height="5" fill="#33f233"/><rect x="174.5" y="52.5" width="2" height="4" fill="#000" stroke="#33f233"/><rect x="178.5" y="47.5" width="2" height="6" fill="#000" stroke="#33f233"/><rect x="182.0" y="47" width="3" height="8" fill="#33f233"/><rect x="186.5" y="47.5" width="2" height="6" fill="#000" stroke="#33f233"/><rect x="194.0" y="48" width="3" height="10" fill="#33f233"/><rect x="198.0" y="58" width="3" height="12" fill="#33f233"/><rect x="202.0" y="69" width="3" height="5" fill="#33f233"/><rect x="206.5" y="70.5" width="2" height="3" fill="#000" stroke="#33f233"/><rect x="210.0" y="70" width="3" height="7" fill="#33f233"/><rect x="214.0" y="77" width="3" height="7" fill="#33f233"/><rect x="218.5" y="78.5" width="2" height="4" fill="#000" stroke="#33f233"/><rect x="226.5" y="74.5" width="2" height="4" fill="#000" stroke="#33f233"/><rect x="234.5" y="61.5" width="2" height="9" fill="#000" stroke="#33f233"/><rect x="242.0" y="61" width="3" height="13" fill="#33f233"/><rect x="246.5" y="59.5" width="2" height="11" fill="#000" stroke="#33f233"/><rect x="250.5" y="52.5" width="2" height="6" fill="#000" stroke="#33f233"/><rect x="258.5" y="43.5" width="2" height="9" fill="#000" stroke="#33f233"/><rect x="262.0" y="44" width="3" height="4" fill="#33f233"/><rect x="2.5" y="2.5" width="341" height="134" fill="none" stroke="#fff"/><rect x="3" y="137" width="1" height="3" fill="#fff"/><text x="2.3" y="149.2" font-size="10.3" textLength="50.5" fill="#ececec" lengthAdjust="spacingAndGlyphs">29 Aug 2025</text><rect x="67" y="137" width="1" height="3" fill="#fff"/><text x="66.3" y="149.2" font-size="10.3" textLength="53.5" fill="#ececec" lengthAdjust="spacingAndGlyphs">29 Aug 19:45</text><rect x="131" y="137" width="1" height="3" fill="#fff"/><text x="130.3" y="149.2" font-size="10.3" textLength="53.5" fill="#ececec" lengthAdjust="spacingAndGlyphs">29 Aug 21:05</text><rect x="195" y="137" width="1" height="3" fill="#fff"/><text x="194.3" y="149.2" font-size="10.3" textLength="53.5" fill="#ececec" lengthAdjust="spacingAndGlyphs">29 Aug 22:25</text><rect x="259" y="137" width="1" height="3" fill="#fff"/><text x="258.3" y="149.2" font-size="10.3" textLength="53.5" fill="#ececec" lengthAdjust="spacingAndGlyphs">29 Aug 23:45</text><rect x="344" y="30" width="2" height="1" fill="#fff"/><text x="349" y="33.7" font-size="10.3" textLength="32" fill="#ececec" lengthAdjust="spacingAndGlyphs">147.075</text><rect x="344" y="64" width="2" height="1" fill="#fff"/><text x="349" y="67.7" font-size="10.3" textLength="32" fill="#ececec" lengthAdjust="spacingAndGlyphs">146.990</text><rect x="344" y="98" width="2" height="1" fill="#fff"/><text x="349" y="101.7" font-size="10.3" textLength="32" fill="#ececec" lengthAdjust="spacingAndGlyphs">146.905</text><rect x="344" y="132" width="2" height="1" fill="#fff"/><text x="349" y="135.7" font-size="10.3" textLength="32" fill="#ececec" lengthAdjust="spacingAndGlyphs">146.820</text><rect x="346" y="42" width="38.5" height="11" fill="#fff"/><text x="349" y="50.7" font-size="10.3" textLength="32" fill="#000" lengthAdjust="spacingAndGlyphs">147.032</text><path d="M6 8h7l-3.5 4z" fill="#fff" shape-rendering="auto"/><text x="18" y="14" font-size="10.3" textLength="45.6" fill="#ececec" lengthAdjust="spacingAndGlyphs">USDJPY,M5</text><text x="69.9" y="14" font-size="10.3" textLength="141.0" fill="#ececec" lengthAdjust="spacingAndGlyphs">147.026 147.034 147.006 147.032</text><text x="240" y="15" font-size="10.3" textLength="84.5" fill="#ececec" lengthAdjust="spacingAndGlyphs">PhoenixSoar_USDJPY</text><g shape-rendering="auto" fill="none" stroke="#ececec" stroke-width="1"><circle cx="332.3" cy="12.5" r="5"/><path d="M329.7 14q2.6 2.6 5.2 0"/><circle cx="330.5" cy="11" r="0.7" fill="#ececec" stroke="none"/><circle cx="334.1" cy="11" r="0.7" fill="#ececec" stroke="none"/></g><path d="M269.0 3h9l-4.5 5z" fill="#8c96a8" shape-rendering="auto"/></svg></div></div>
<div class="win" style="left:201px;top:463px"><div class="tb"><svg width="14" height="14" viewBox="0 0 14 14" style="left:4px;top:6px"><rect x="0" y="0" width="10.500" height="8" fill="#4a8ce0"/><rect x="0.500" y="1.800" width="9.500" height="6" fill="#fff"/><path d="M1.500 4.500l1.500-1.500 1.500 1.500 1.500-1.500 1.500 1.500 1.500 .500" stroke="#2a5cb0" fill="none" stroke-width="0.900"/><rect x="3" y="7" width="10" height="6" fill="#fff" stroke="#4a8ce0" stroke-width="0.800"/><path d="M4.500 8.500l2 3 1.500-3 2 3 1.500-1.500" stroke="#2a5cb0" fill="none" stroke-width="0.900"/></svg><div class="tt">CADJPY,M5</div>
<div class="cb" style="left:341px"><svg width="14" height="18"><rect x="3" y="13" width="6" height="2" fill="#000"/></svg></div>
<div class="cb" style="left:357px"><svg width="14" height="18"><rect x="2.5" y="5.5" width="9" height="8" fill="none" stroke="#000" stroke-width="1"/><rect x="2" y="5" width="10" height="2" fill="#000"/></svg></div>
<div class="cb" style="left:375px"><svg width="14" height="18"><path d="M3 5l8 8M11 5l-8 8" stroke="#000" stroke-width="1.8"/></svg></div>
</div><div class="cl"><svg width="390" height="157" viewBox="0 0 390 157" shape-rendering="crispEdges"><rect x="3" y="93" width="340" height="1" fill="#a4a9b0"/><path d="M3.5 96V121M7.5 90V131M11.5 77V105M15.5 73V101M19.5 94V113M23.5 94V120M27.5 77V99M31.5 70V91M35.5 77V110M39.5 81V111M43.5 71V114M47.5 62V89M51.5 68V101M55.5 83V109M59.5 81V93M63.5 82V109M67.5 92V113M71.5 94V108M75.5 87V105M79.5 91V115M83.5 95V115M87.5 97V113M91.5 109V121M90.0 109.5H93.0M90.0 110.5H93.0M95.5 97V111M99.5 97V109M103.5 95V110M107.5 98V115M106.0 99.5H109.0M111.5 95V105M110.0 99.5H113.0M115.5 67V101M119.5 56V70M123.5 56V74M127.5 56V68M131.5 60V77M135.5 63V75M139.5 60V74M143.5 66V76M147.5 62V75M151.5 56V70M155.5 56V68M159.5 58V64M158.0 60.5H161.0M158.0 61.5H161.0M163.5 46V62M167.5 35V62M171.5 19V44M175.5 13V46M179.5 29V44M183.5 34V57M187.5 46V56M191.5 45V59M195.5 45V61M199.5 52V67M203.5 56V66M202.0 61.5H205.0M207.5 37V62M211.5 33V56M215.5 52V81M219.5 63V86M223.5 62V85M222.0 76.5H225.0M227.5 71V86M231.5 71V90M235.5 77V93M239.5 80V94M243.5 83V115M247.5 97V116M251.5 87V119M255.5 69V92M259.5 64V91M263.5 48V83M267.5 66V94" stroke="#33f233" fill="none"/><rect x="2.5" y="110.5" width="2" height="9" fill="#000" stroke="#33f233"/><rect x="6.5" y="101.5" width="2" height="8" fill="#000" stroke="#33f233"/><rect x="10.5" y="81.5" width="2" height="19" fill="#000" stroke="#33f233"/><rect x="14.0" y="81" width="3" height="19" fill="#33f233"/><rect x="18.0" y="97" width="3" height="12" fill="#33f233"/><rect x="22.5" y="95.5" width="2" height="13" fill="#000" stroke="#33f233"/><rect x="26.5" y="77.5" width="2" height="17" fill="#000" stroke="#33f233"/><rect x="30.0" y="77" width="3" height="11" fill="#33f233"/><rect x="34.0" y="87" width="3" height="7" fill="#33f233"/><rect x="38.0" y="92" width="3" height="18" fill="#33f233"/><rect x="42.5" y="87.5" width="2" height="22" fill="#000" stroke="#33f233"/><rect x="46.5" y="73.5" width="2" height="13" fill="#000" stroke="#33f233"/><rect x="50.0" y="73" width="3" height="27" fill="#33f233"/><rect x="54.5" y="87.5" width="2" height="11" fill="#000" stroke="#33f233"/><rect x="58.5" y="83.5" width="2" height="2" fill="#000" stroke="#33f233"/><rect x="62.0" y="83" width="3" height="24" fill="#33f233"/><rect x="66.5" y="95.5" width="2" height="11" fill="#000" stroke="#33f233"/><rect x="70.0" y="95" width="3" height="8" fill="#33f233"/><rect x="74.5" y="89.5" width="2" height="14" fill="#000" stroke="#33f233"/><rect x="78.0" y="92" width="3" height="14" fill="#33f233"/><rect x="82.5" y="97.5" width="2" height="8" fill="#000" stroke="#33f233"/><rect x="86.0" y="98" width="3" height="14" fill="#33f233"/><rect x="94.5" y="105.5" width="2" height="4" fill="#000" stroke="#33f233"/><rect x="98.0" y="104" width="3" height="3" fill="#33f233"/><rect x="102.5" y="100.5" width="2" height="6" fill="#000" stroke="#33f233"/><rect x="114.5" y="68.5" width="2" height="31" fill="#000" stroke="#33f233"/><rect x="118.5" y="57.5" width="2" height="9" fill="#000" stroke="#33f233"/><rect x="122.0" y="57" width="3" height="10" fill="#33f233"/><rect x="126.5" y="62.5" width="2" height="4" fill="#000" stroke="#33f233"/><rect x="130.0" y="62" width="3" height="5" fill="#33f233"/><rect x="134.5" y="64.5" width="2" height="3" fill="#000" stroke="#33f233"/><rect x="138.0" y="62" width="3" height="11" fill="#33f233"/><rect x="142.5" y="67.5" width="2" height="5" fill="#000" stroke="#33f233"/><rect x="146.0" y="66" width="3" height="3" fill="#33f233"/><rect x="150.5" y="56.5" width="2" height="12" fill="#000" stroke="#33f233"/><rect x="154.0" y="56" width="3" height="5" fill="#33f233"/><rect x="162.5" y="56.5" width="2" height="4" fill="#000" stroke="#33f233"/><rect x="166.5" y="35.5" width="2" height="21" fill="#000" stroke="#33f233"/><rect x="170.5" y="20.5" width="2" height="16" fill="#000" stroke="#33f233"/><rect x="174.0" y="20" width="3" height="22" fill="#33f233"/><rect x="178.5" y="34.5" width="2" height="8" fill="#000" stroke="#33f233"/><rect x="182.0" y="34" width="3" height="20" fill="#33f233"/><rect x="186.0" y="52" width="3" height="3" fill="#33f233"/><rect x="190.5" y="46.5" width="2" height="5" fill="#000" stroke="#33f233"/><rect x="194.0" y="46" width="3" height="10" fill="#33f233"/><rect x="198.0" y="55" width="3" height="6" fill="#33f233"/><rect x="206.5" y="39.5" width="2" height="21" fill="#000" stroke="#33f233"/><rect x="210.0" y="38" width="3" height="17" fill="#33f233"/><rect x="214.0" y="54" width="3" height="17" fill="#33f233"/><rect x="218.0" y="70" width="3" height="7" fill="#33f233"/><rect x="226.0" y="77" width="3" height="6" fill="#33f233"/><rect x="230.0" y="77" width="3" height="10" fill="#33f233"/><rect x="234.0" y="86" width="3" height="6" fill="#33f233"/><rect x="238.5" y="86.5" width="2" height="6" fill="#000" stroke="#33f233"/><rect x="242.0" y="84" width="3" height="25" fill="#33f233"/><rect x="246.0" y="108" width="3" height="7" fill="#33f233"/><rect x="250.5" y="88.5" width="2" height="26" fill="#000" stroke="#33f233"/><rect x="254.5" y="70.5" width="2" height="18" fill="#000" stroke="#33f233"/><rect x="258.0" y="70" width="3" height="11" fill="#33f233"/><rect x="262.5" y="72.5" width="2" height="9" fill="#000" stroke="#33f233"/><rect x="266.0" y="73" width="3" height="21" fill="#33f233"/><rect x="2.5" y="2.5" width="341" height="134" fill="none" stroke="#fff"/><rect x="3" y="137" width="1" height="3" fill="#fff"/><text x="2.3" y="149.2" font-size="10.3" textLength="50.5" fill="#ececec" lengthAdjust="spacingAndGlyphs">29 Aug 2025</text><rect x="67" y="137" width="1" height="3" fill="#fff"/><text x="66.3" y="149.2" font-size="10.3" textLength="53.5" fill="#ececec" lengthAdjust="spacingAndGlyphs">29 Aug 19:45</text><rect x="131" y="137" width="1" height="3" fill="#fff"/><text x="130.3" y="149.2" font-size="10.3" textLength="53.5" fill="#ececec" lengthAdjust="spacingAndGlyphs">29 Aug 21:05</text><rect x="195" y="137" width="1" height="3" fill="#fff"/><text x="194.3" y="149.2" font-size="10.3" textLength="53.5" fill="#ececec" lengthAdjust="spacingAndGlyphs">29 Aug 22:25</text><rect x="259" y="137" width="1" height="3" fill="#fff"/><text x="258.3" y="149.2" font-size="10.3" textLength="53.5" fill="#ececec" lengthAdjust="spacingAndGlyphs">29 Aug 23:45</text><rect x="344" y="33" width="2" height="1" fill="#fff"/><text x="349" y="36.7" font-size="10.3" textLength="32" fill="#ececec" lengthAdjust="spacingAndGlyphs">107.065</text><rect x="344" y="66" width="2" height="1" fill="#fff"/><text x="349" y="69.7" font-size="10.3" textLength="32" fill="#ececec" lengthAdjust="spacingAndGlyphs">107.015</text><rect x="344" y="99" width="2" height="1" fill="#fff"/><text x="349" y="102.7" font-size="10.3" textLength="32" fill="#ececec" lengthAdjust="spacingAndGlyphs">106.965</text><rect x="344" y="132" width="2" height="1" fill="#fff"/><text x="349" y="135.7" font-size="10.3" textLength="32" fill="#ececec" lengthAdjust="spacingAndGlyphs">106.915</text><rect x="346" y="88" width="38.5" height="11" fill="#fff"/><text x="349" y="96.7" font-size="10.3" textLength="32" fill="#000" lengthAdjust="spacingAndGlyphs">106.974</text><path d="M6 8h7l-3.5 4z" fill="#fff" shape-rendering="auto"/><text x="18" y="14" font-size="10.3" textLength="44.4" fill="#ececec" lengthAdjust="spacingAndGlyphs">CADJPY,M5</text><text x="69.2" y="14" font-size="10.3" textLength="140.7" fill="#ececec" lengthAdjust="spacingAndGlyphs">107.005 107.015 106.974 106.974</text><text x="240" y="15" font-size="10.3" textLength="83.5" fill="#ececec" lengthAdjust="spacingAndGlyphs">PhoenixSoar_CADJPY</text><g shape-rendering="auto" fill="none" stroke="#ececec" stroke-width="1"><circle cx="332.3" cy="12.5" r="5"/><path d="M329.7 14q2.6 2.6 5.2 0"/><circle cx="330.5" cy="11" r="0.7" fill="#ececec" stroke="none"/><circle cx="334.1" cy="11" r="0.7" fill="#ececec" stroke="none"/></g><path d="M269.0 3h9l-4.5 5z" fill="#8c96a8" shape-rendering="auto"/></svg></div></div>
<div class="win" style="left:602px;top:463px"><div class="tb"><svg width="14" height="14" viewBox="0 0 14 14" style="left:4px;top:6px"><rect x="0" y="0" width="10.500" height="8" fill="#4a8ce0"/><rect x="0.500" y="1.800" width="9.500" height="6" fill="#fff"/><path d="M1.500 4.500l1.500-1.500 1.500 1.500 1.500-1.500 1.500 1.500 1.500 .500" stroke="#2a5cb0" fill="none" stroke-width="0.900"/><rect x="3" y="7" width="10" height="6" fill="#fff" stroke="#4a8ce0" stroke-width="0.800"/><path d="M4.500 8.500l2 3 1.500-3 2 3 1.500-1.500" stroke="#2a5cb0" fill="none" stroke-width="0.900"/></svg><div class="tt">EURGBP,M5</div>
<div class="cb" style="left:341px"><svg width="14" height="18"><rect x="3" y="13" width="6" height="2" fill="#000"/></svg></div>
<div class="cb" style="left:357px"><svg width="14" height="18"><rect x="2.5" y="5.5" width="9" height="8" fill="none" stroke="#000" stroke-width="1"/><rect x="2" y="5" width="10" height="2" fill="#000"/></svg></div>
<div class="cb" style="left:375px"><svg width="14" height="18"><path d="M3 5l8 8M11 5l-8 8" stroke="#000" stroke-width="1.8"/></svg></div>
</div><div class="cl"><svg width="390" height="157" viewBox="0 0 390 157" shape-rendering="crispEdges"><rect x="3" y="126" width="340" height="1" fill="#a4a9b0"/><path d="M3.5 45V59M7.5 47V62M11.5 37V62M10.0 52.5H13.0M15.5 48V60M19.5 53V66M18.0 57.5H21.0M18.0 58.5H21.0M23.5 56V67M22.0 58.5H25.0M22.0 59.5H25.0M27.5 56V70M31.5 56V73M35.5 40V65M39.5 13V46M43.5 17V26M47.5 20V33M51.5 21V35M55.5 27V40M59.5 21V37M63.5 19V31M67.5 18V31M71.5 12V25M70.0 18.5H73.0M75.5 18V35M79.5 22V36M83.5 22V34M82.0 30.5H85.0M87.5 25V33M86.0 30.5H89.0M91.5 26V35M90.0 29.5H93.0M95.5 29V37M94.0 30.5H97.0M99.5 29V40M103.5 33V39M107.5 33V39M106.0 35.5H109.0M106.0 36.5H109.0M111.5 34V38M110.0 35.5H113.0M110.0 36.5H113.0M115.5 29V38M119.5 30V39M123.5 34V39M122.0 36.5H125.0M122.0 37.5H125.0M127.5 36V43M126.0 37.5H129.0M131.5 35V42M135.5 37V45M139.5 36V46M138.0 43.5H141.0M138.0 44.5H141.0M143.5 37V45M142.0 42.5H145.0M142.0 43.5H145.0M147.5 40V45M146.0 42.5H149.0M146.0 43.5H149.0M151.5 39V45M150.0 43.5H153.0M155.5 41V46M154.0 42.5H157.0M154.0 43.5H157.0M159.5 39V53M163.5 46V53M162.0 47.5H165.0M162.0 48.5H165.0M167.5 47V52M166.0 48.5H169.0M171.5 48V64M175.5 57V68M179.5 67V70M178.0 67.5H181.0M183.5 66V71M182.0 67.5H185.0M187.5 63V69M186.0 66.5H189.0M186.0 67.5H189.0M191.5 64V70M190.0 67.5H193.0M195.5 64V69M199.5 61V67M198.0 63.5H201.0M198.0 64.5H201.0M203.5 61V71M207.5 65V74M206.0 69.5H209.0M211.5 66V74M210.0 68.5H213.0M215.5 59V70M214.0 67.5H217.0M219.5 67V87M223.5 73V88M227.5 72V77M226.0 72.5H229.0M226.0 73.5H229.0M231.5 73V81M235.5 77V84M234.0 79.5H237.0M234.0 80.5H237.0M239.5 80V87M238.0 82.5H241.0M238.0 83.5H241.0M243.5 82V87M247.5 73V88M251.5 73V80M255.5 80V85M254.0 80.5H257.0M254.0 81.5H257.0M259.5 83V108M263.5 94V118M267.5 102V126" stroke="#33f233" fill="none"/><rect x="2.5" y="46.5" width="2" height="12" fill="#000" stroke="#33f233"/><rect x="6.0" y="49" width="3" height="4" fill="#33f233"/><rect x="14.0" y="54" width="3" height="3" fill="#33f233"/><rect x="26.0" y="58" width="3" height="11" fill="#33f233"/><rect x="30.5" y="63.5" width="2" height="6" fill="#000" stroke="#33f233"/><rect x="34.5" y="42.5" width="2" height="21" fill="#000" stroke="#33f233"/><rect x="38.5" y="25.5" width="2" height="16" fill="#000" stroke="#33f233"/><rect x="42.5" y="22.5" width="2" height="2" fill="#000" stroke="#33f233"/><rect x="46.0" y="22" width="3" height="7" fill="#33f233"/><rect x="50.0" y="28" width="3" height="3" fill="#33f233"/><rect x="54.0" y="30" width="3" height="5" fill="#33f233"/><rect x="58.5" y="22.5" width="2" height="12" fill="#000" stroke="#33f233"/><rect x="62.0" y="22" width="3" height="7" fill="#33f233"/><rect x="66.5" y="19.5" width="2" height="10" fill="#000" stroke="#33f233"/><rect x="74.0" y="19" width="3" height="13" fill="#33f233"/><rect x="78.5" y="29.5" width="2" height="2" fill="#000" stroke="#33f233"/><rect x="98.0" y="30" width="3" height="9" fill="#33f233"/><rect x="102.5" y="35.5" width="2" height="2" fill="#000" stroke="#33f233"/><rect x="114.5" y="31.5" width="2" height="5" fill="#000" stroke="#33f233"/><rect x="118.0" y="31" width="3" height="6" fill="#33f233"/><rect x="130.0" y="37" width="3" height="3" fill="#33f233"/><rect x="134.0" y="40" width="3" height="4" fill="#33f233"/><rect x="158.0" y="42" width="3" height="5" fill="#33f233"/><rect x="170.0" y="49" width="3" height="10" fill="#33f233"/><rect x="174.0" y="58" width="3" height="10" fill="#33f233"/><rect x="194.5" y="65.5" width="2" height="2" fill="#000" stroke="#33f233"/><rect x="202.0" y="64" width="3" height="6" fill="#33f233"/><rect x="218.0" y="67" width="3" height="17" fill="#33f233"/><rect x="222.5" y="74.5" width="2" height="9" fill="#000" stroke="#33f233"/><rect x="230.0" y="74" width="3" height="5" fill="#33f233"/><rect x="242.0" y="83" width="3" height="3" fill="#33f233"/><rect x="246.5" y="74.5" width="2" height="12" fill="#000" stroke="#33f233"/><rect x="250.0" y="76" width="3" height="3" fill="#33f233"/><rect x="258.0" y="83" width="3" height="20" fill="#33f233"/><rect x="262.5" y="101.5" width="2" height="2" fill="#000" stroke="#33f233"/><rect x="266.0" y="104" width="3" height="22" fill="#33f233"/><rect x="2.5" y="2.5" width="341" height="134" fill="none" stroke="#fff"/><rect x="3" y="137" width="1" height="3" fill="#fff"/><text x="2.3" y="149.2" font-size="10.3" textLength="50.5" fill="#ececec" lengthAdjust="spacingAndGlyphs">29 Aug 2025</text><rect x="67" y="137" width="1" height="3" fill="#fff"/><text x="66.3" y="149.2" font-size="10.3" textLength="53.5" fill="#ececec" lengthAdjust="spacingAndGlyphs">29 Aug 19:45</text><rect x="131" y="137" width="1" height="3" fill="#fff"/><text x="130.3" y="149.2" font-size="10.3" textLength="53.5" fill="#ececec" lengthAdjust="spacingAndGlyphs">29 Aug 21:05</text><rect x="195" y="137" width="1" height="3" fill="#fff"/><text x="194.3" y="149.2" font-size="10.3" textLength="53.5" fill="#ececec" lengthAdjust="spacingAndGlyphs">29 Aug 22:25</text><rect x="259" y="137" width="1" height="3" fill="#fff"/><text x="258.3" y="149.2" font-size="10.3" textLength="53.5" fill="#ececec" lengthAdjust="spacingAndGlyphs">29 Aug 23:45</text><rect x="344" y="33" width="2" height="1" fill="#fff"/><text x="349" y="36.7" font-size="10.3" textLength="32" fill="#ececec" lengthAdjust="spacingAndGlyphs">0.86620</text><rect x="344" y="66" width="2" height="1" fill="#fff"/><text x="349" y="69.7" font-size="10.3" textLength="32" fill="#ececec" lengthAdjust="spacingAndGlyphs">0.86575</text><rect x="344" y="99" width="2" height="1" fill="#fff"/><text x="349" y="102.7" font-size="10.3" textLength="32" fill="#ececec" lengthAdjust="spacingAndGlyphs">0.86530</text><rect x="344" y="132" width="2" height="1" fill="#fff"/><text x="349" y="135.7" font-size="10.3" textLength="32" fill="#ececec" lengthAdjust="spacingAndGlyphs">0.86485</text><rect x="346" y="121" width="38.5" height="11" fill="#fff"/><text x="349" y="129.7" font-size="10.3" textLength="32" fill="#000" lengthAdjust="spacingAndGlyphs">0.86493</text><path d="M6 8h7l-3.5 4z" fill="#fff" shape-rendering="auto"/><text x="18" y="14" font-size="10.3" textLength="47.8" fill="#ececec" lengthAdjust="spacingAndGlyphs">EURGBP,M5</text><text x="71.8" y="14" font-size="10.3" textLength="141.3" fill="#ececec" lengthAdjust="spacingAndGlyphs">0.86523 0.86525 0.86493 0.86493</text><text x="238" y="15" font-size="10.3" textLength="86.5" fill="#ececec" lengthAdjust="spacingAndGlyphs">PhoenixSoar_EURGBP</text><g shape-rendering="auto" fill="none" stroke="#ececec" stroke-width="1"><circle cx="332.3" cy="12.5" r="5"/><path d="M329.7 14q2.6 2.6 5.2 0"/><circle cx="330.5" cy="11" r="0.7" fill="#ececec" stroke="none"/><circle cx="334.1" cy="11" r="0.7" fill="#ececec" stroke="none"/></g><path d="M269.0 3h9l-4.5 5z" fill="#8c96a8" shape-rendering="auto"/></svg></div></div>
<div class="win" style="left:1003px;top:463px"><div class="tb"><svg width="14" height="14" viewBox="0 0 14 14" style="left:4px;top:6px"><rect x="0" y="0" width="10.500" height="8" fill="#4a8ce0"/><rect x="0.500" y="1.800" width="9.500" height="6" fill="#fff"/><path d="M1.500 4.500l1.500-1.500 1.500 1.500 1.500-1.500 1.500 1.500 1.500 .500" stroke="#2a5cb0" fill="none" stroke-width="0.900"/><rect x="3" y="7" width="10" height="6" fill="#fff" stroke="#4a8ce0" stroke-width="0.800"/><path d="M4.500 8.500l2 3 1.500-3 2 3 1.500-1.500" stroke="#2a5cb0" fill="none" stroke-width="0.900"/></svg><div class="tt">NZDUSD,M5</div>
<div class="cb" style="left:341px"><svg width="14" height="18"><rect x="3" y="13" width="6" height="2" fill="#000"/></svg></div>
<div class="cb" style="left:357px"><svg width="14" height="18"><rect x="2.5" y="5.5" width="9" height="8" fill="none" stroke="#000" stroke-width="1"/><rect x="2" y="5" width="10" height="2" fill="#000"/></svg></div>
<div class="cb" style="left:375px"><svg width="14" height="18"><path d="M3 5l8 8M11 5l-8 8" stroke="#000" stroke-width="1.8"/></svg></div>
</div><div class="cl"><svg width="390" height="157" viewBox="0 0 390 157" shape-rendering="crispEdges"><rect x="3" y="127" width="340" height="1" fill="#a4a9b0"/><path d="M3.5 52V69M2.0 61.5H5.0M2.0 62.5H5.0M7.5 51V70M11.5 40V61M15.5 36V54M19.5 36V49M23.5 26V48M27.5 22V41M31.5 33V47M30.0 39.5H33.0M30.0 40.5H33.0M35.5 17V47M39.5 22V40M43.5 23V36M47.5 19V36M51.5 17V43M55.5 30V44M54.0 37.5H57.0M59.5 32V45M63.5 32V44M62.0 34.5H65.0M62.0 35.5H65.0M67.5 30V49M71.5 24V49M75.5 20V27M74.0 24.5H77.0M79.5 23V48M83.5 34V47M87.5 39V52M91.5 41V57M95.5 36V49M99.5 47V58M103.5 43V55M107.5 34V48M111.5 30V40M115.5 28V40M119.5 33V43M118.0 40.5H121.0M123.5 39V49M127.5 42V49M131.5 34V54M135.5 35V52M139.5 43V50M143.5 44V58M147.5 48V59M151.5 44V57M155.5 36V48M154.0 46.5H157.0M159.5 47V53M163.5 40V54M167.5 37V45M166.0 39.5H169.0M166.0 40.5H169.0M171.5 28V40M175.5 35V46M179.5 36V41M178.0 38.5H181.0M178.0 39.5H181.0M183.5 37V47M187.5 45V56M191.5 38V53M195.5 44V49M194.0 45.5H197.0M194.0 46.5H197.0M199.5 38V50M203.5 43V56M207.5 31V47M211.5 27V37M215.5 34V47M219.5 40V50M223.5 31V47M227.5 36V45M231.5 41V50M230.0 43.5H233.0M235.5 42V49M239.5 45V49M238.0 47.5H241.0M243.5 47V55M242.0 48.5H245.0M247.5 49V71M251.5 67V79M255.5 61V72M259.5 55V85M263.5 69V99M267.5 70V127" stroke="#33f233" fill="none"/><rect x="6.5" y="56.5" width="2" height="3" fill="#000" stroke="#33f233"/><rect x="10.5" y="45.5" width="2" height="9" fill="#000" stroke="#33f233"/><rect x="14.5" y="42.5" width="2" height="2" fill="#000" stroke="#33f233"/><rect x="18.0" y="41" width="3" height="6" fill="#33f233"/><rect x="22.5" y="27.5" width="2" height="19" fill="#000" stroke="#33f233"/><rect x="26.0" y="27" width="3" height="13" fill="#33f233"/><rect x="34.5" y="30.5" width="2" height="8" fill="#000" stroke="#33f233"/><rect x="38.5" y="27.5" width="2" height="2" fill="#000" stroke="#33f233"/><rect x="42.0" y="29" width="3" height="4" fill="#33f233"/><rect x="46.5" y="20.5" width="2" height="13" fill="#000" stroke="#33f233"/><rect x="50.0" y="20" width="3" height="17" fill="#33f233"/><rect x="58.5" y="35.5" width="2" height="2" fill="#000" stroke="#33f233"/><rect x="66.0" y="34" width="3" height="15" fill="#33f233"/><rect x="70.5" y="25.5" width="2" height="22" fill="#000" stroke="#33f233"/><rect x="78.0" y="24" width="3" height="23" fill="#33f233"/><rect x="82.5" y="40.5" width="2" height="6" fill="#000" stroke="#33f233"/><rect x="86.0" y="40" width="3" height="7" fill="#33f233"/><rect x="90.5" y="42.5" width="2" height="5" fill="#000" stroke="#33f233"/><rect x="94.0" y="40" width="3" height="9" fill="#33f233"/><rect x="98.0" y="49" width="3" height="4" fill="#33f233"/><rect x="102.5" y="44.5" width="2" height="8" fill="#000" stroke="#33f233"/><rect x="106.5" y="35.5" width="2" height="9" fill="#000" stroke="#33f233"/><rect x="110.5" y="31.5" width="2" height="4" fill="#000" stroke="#33f233"/><rect x="114.0" y="30" width="3" height="10" fill="#33f233"/><rect x="122.0" y="40" width="3" height="4" fill="#33f233"/><rect x="126.0" y="44" width="3" height="5" fill="#33f233"/><rect x="130.5" y="35.5" width="2" height="13" fill="#000" stroke="#33f233"/><rect x="134.0" y="36" width="3" height="13" fill="#33f233"/><rect x="138.5" y="44.5" width="2" height="4" fill="#000" stroke="#33f233"/><rect x="142.0" y="46" width="3" height="5" fill="#33f233"/><rect x="146.0" y="49" width="3" height="9" fill="#33f233"/><rect x="150.5" y="46.5" width="2" height="9" fill="#000" stroke="#33f233"/><rect x="158.0" y="47" width="3" height="6" fill="#33f233"/><rect x="162.5" y="40.5" width="2" height="13" fill="#000" stroke="#33f233"/><rect x="170.5" y="34.5" width="2" height="5" fill="#000" stroke="#33f233"/><rect x="174.0" y="35" width="3" height="6" fill="#33f233"/><rect x="182.0" y="37" width="3" height="9" fill="#33f233"/><rect x="186.0" y="47" width="3" height="7" fill="#33f233"/><rect x="190.5" y="46.5" width="2" height="6" fill="#000" stroke="#33f233"/><rect x="198.0" y="45" width="3" height="3" fill="#33f233"/><rect x="202.5" y="45.5" width="2" height="2" fill="#000" stroke="#33f233"/><rect x="206.5" y="32.5" width="2" height="13" fill="#000" stroke="#33f233"/><rect x="210.0" y="32" width="3" height="4" fill="#33f233"/><rect x="214.0" y="35" width="3" height="11" fill="#33f233"/><rect x="218.5" y="44.5" width="2" height="2" fill="#000" stroke="#33f233"/><rect x="222.5" y="37.5" width="2" height="2" fill="#000" stroke="#33f233"/><rect x="226.0" y="37" width="3" height="5" fill="#33f233"/><rect x="234.0" y="44" width="3" height="3" fill="#33f233"/><rect x="246.0" y="50" width="3" height="20" fill="#33f233"/><rect x="250.5" y="67.5" width="2" height="2" fill="#000" stroke="#33f233"/><rect x="254.5" y="62.5" width="2" height="5" fill="#000" stroke="#33f233"/><rect x="258.0" y="62" width="3" height="18" fill="#33f233"/><rect x="262.5" y="77.5" width="2" height="2" fill="#000" stroke="#33f233"/><rect x="266.0" y="77" width="3" height="50" fill="#33f233"/><rect x="2.5" y="2.5" width="341" height="134" fill="none" stroke="#fff"/><rect x="3" y="137" width="1" height="3" fill="#fff"/><text x="2.3" y="149.2" font-size="10.3" textLength="50.5" fill="#ececec" lengthAdjust="spacingAndGlyphs">29 Aug 2025</text><rect x="67" y="137" width="1" height="3" fill="#fff"/><text x="66.3" y="149.2" font-size="10.3" textLength="53.5" fill="#ececec" lengthAdjust="spacingAndGlyphs">29 Aug 19:45</text><rect x="131" y="137" width="1" height="3" fill="#fff"/><text x="130.3" y="149.2" font-size="10.3" textLength="53.5" fill="#ececec" lengthAdjust="spacingAndGlyphs">29 Aug 21:05</text><rect x="195" y="137" width="1" height="3" fill="#fff"/><text x="194.3" y="149.2" font-size="10.3" textLength="53.5" fill="#ececec" lengthAdjust="spacingAndGlyphs">29 Aug 22:25</text><rect x="259" y="137" width="1" height="3" fill="#fff"/><text x="258.3" y="149.2" font-size="10.3" textLength="53.5" fill="#ececec" lengthAdjust="spacingAndGlyphs">29 Aug 23:45</text><rect x="344" y="26" width="2" height="1" fill="#fff"/><text x="349" y="29.7" font-size="10.3" textLength="32" fill="#ececec" lengthAdjust="spacingAndGlyphs">0.59005</text><rect x="344" y="62" width="2" height="1" fill="#fff"/><text x="349" y="65.7" font-size="10.3" textLength="32" fill="#ececec" lengthAdjust="spacingAndGlyphs">0.58965</text><rect x="344" y="96" width="2" height="1" fill="#fff"/><text x="349" y="99.7" font-size="10.3" textLength="32" fill="#ececec" lengthAdjust="spacingAndGlyphs">0.58925</text><rect x="344" y="131" width="2" height="1" fill="#fff"/><text x="349" y="134.7" font-size="10.3" textLength="32" fill="#ececec" lengthAdjust="spacingAndGlyphs">0.58885</text><rect x="346" y="122" width="38.5" height="11" fill="#fff"/><text x="349" y="130.7" font-size="10.3" textLength="32" fill="#000" lengthAdjust="spacingAndGlyphs">0.58890</text><path d="M6 8h7l-3.5 4z" fill="#fff" shape-rendering="auto"/><text x="18" y="14" font-size="10.3" textLength="48.7" fill="#ececec" lengthAdjust="spacingAndGlyphs">NZDUSD,M5</text><text x="72.9" y="14" font-size="10.3" textLength="141.1" fill="#ececec" lengthAdjust="spacingAndGlyphs">0.58947 0.58954 0.58890 0.58890</text><text x="234" y="15" font-size="10.3" textLength="87.5" fill="#ececec" lengthAdjust="spacingAndGlyphs">PhoenixSoar_NZDUSD</text><g shape-rendering="auto" fill="none" stroke="#ececec" stroke-width="1"><circle cx="332.3" cy="12.5" r="5"/><path d="M329.7 14q2.6 2.6 5.2 0"/><circle cx="330.5" cy="11" r="0.7" fill="#ececec" stroke="none"/><circle cx="334.1" cy="11" r="0.7" fill="#ececec" stroke="none"/></g><path d="M269.0 3h9l-4.5 5z" fill="#8c96a8" shape-rendering="auto"/></svg></div></div>
<div class="win" style="left:1404px;top:463px"><div class="tb act"><svg width="14" height="14" viewBox="0 0 14 14" style="left:4px;top:6px"><rect x="0" y="0" width="10.500" height="8" fill="#4a8ce0"/><rect x="0.500" y="1.800" width="9.500" height="6" fill="#fff"/><path d="M1.500 4.500l1.500-1.500 1.500 1.500 1.500-1.500 1.500 1.500 1.500 .500" stroke="#2a5cb0" fill="none" stroke-width="0.900"/><rect x="3" y="7" width="10" height="6" fill="#fff" stroke="#4a8ce0" stroke-width="0.800"/><path d="M4.500 8.500l2 3 1.500-3 2 3 1.500-1.500" stroke="#2a5cb0" fill="none" stroke-width="0.900"/></svg><div class="tt">EURUSD,M5</div>
<div class="cb" style="left:341px"><svg width="14" height="18"><rect x="3" y="13" width="6" height="2" fill="#000"/></svg></div>
<div class="cb" style="left:357px"><svg width="14" height="18"><rect x="2.5" y="5.5" width="9" height="8" fill="none" stroke="#000" stroke-width="1"/><rect x="2" y="5" width="10" height="2" fill="#000"/></svg></div>
<div class="cb" style="left:375px"><svg width="14" height="18"><path d="M3 5l8 8M11 5l-8 8" stroke="#000" stroke-width="1.8"/></svg></div>
</div><div class="cl"><svg width="390" height="157" viewBox="0 0 390 157" shape-rendering="crispEdges"><rect x="3" y="113" width="340" height="1" fill="#a4a9b0"/><path d="M3.5 46V62M7.5 45V62M6.0 48.5H9.0M6.0 49.5H9.0M11.5 34V58M10.0 48.5H13.0M10.0 49.5H13.0M15.5 39V57M19.5 34V53M23.5 33V55M22.0 46.5H25.0M27.5 44V70M31.5 55V73M35.5 29V62M39.5 29V44M43.5 24V33M47.5 16V30M51.5 12V47M55.5 34V62M59.5 37V59M63.5 36V46M62.0 39.5H65.0M67.5 37V55M71.5 29V58M75.5 25V39M79.5 30V55M83.5 44V56M87.5 49V59M91.5 40V55M95.5 35V47M99.5 45V52M103.5 47V55M102.0 48.5H105.0M107.5 46V54M106.0 47.5H109.0M111.5 40V49M115.5 39V51M119.5 46V55M118.0 49.5H121.0M118.0 50.5H121.0M123.5 49V60M127.5 55V62M131.5 52V59M130.0 55.5H133.0M130.0 56.5H133.0M135.5 53V68M139.5 62V71M138.0 67.5H141.0M138.0 68.5H141.0M143.5 66V73M142.0 68.5H145.0M147.5 65V74M151.5 60V74M155.5 55V65M154.0 62.5H157.0M154.0 63.5H157.0M159.5 59V67M158.0 64.5H161.0M163.5 55V67M167.5 54V59M166.0 55.5H169.0M166.0 56.5H169.0M171.5 46V58M175.5 46V58M179.5 55V64M183.5 59V70M187.5 64V75M191.5 64V75M190.0 72.5H193.0M190.0 73.5H193.0M195.5 62V74M199.5 55V64M198.0 62.5H201.0M203.5 55V63M207.5 50V59M211.5 48V55M210.0 51.5H213.0M215.5 47V57M219.5 49V59M223.5 40V54M227.5 47V54M231.5 51V59M235.5 57V66M239.5 60V64M238.0 62.5H241.0M243.5 60V65M242.0 62.5H245.0M247.5 61V77M251.5 73V83M255.5 77V84M254.0 81.5H257.0M254.0 82.5H257.0M259.5 80V115M263.5 102V131M267.5 100V121" stroke="#33f233" fill="none"/><rect x="2.5" y="47.5" width="2" height="14" fill="#000" stroke="#33f233"/><rect x="14.5" y="40.5" width="2" height="6" fill="#000" stroke="#33f233"/><rect x="18.0" y="40" width="3" height="6" fill="#33f233"/><rect x="26.0" y="47" width="3" height="22" fill="#33f233"/><rect x="30.5" y="56.5" width="2" height="13" fill="#000" stroke="#33f233"/><rect x="34.5" y="36.5" width="2" height="19" fill="#000" stroke="#33f233"/><rect x="38.5" y="31.5" width="2" height="4" fill="#000" stroke="#33f233"/><rect x="42.5" y="28.5" width="2" height="2" fill="#000" stroke="#33f233"/><rect x="46.5" y="26.5" width="2" height="2" fill="#000" stroke="#33f233"/><rect x="50.0" y="23" width="3" height="17" fill="#33f233"/><rect x="54.0" y="40" width="3" height="17" fill="#33f233"/><rect x="58.5" y="40.5" width="2" height="17" fill="#000" stroke="#33f233"/><rect x="66.0" y="39" width="3" height="16" fill="#33f233"/><rect x="70.5" y="30.5" width="2" height="24" fill="#000" stroke="#33f233"/><rect x="74.0" y="30" width="3" height="6" fill="#33f233"/><rect x="78.0" y="36" width="3" height="19" fill="#33f233"/><rect x="82.5" y="49.5" width="2" height="5" fill="#000" stroke="#33f233"/><rect x="86.0" y="49" width="3" height="3" fill="#33f233"/><rect x="90.5" y="41.5" width="2" height="10" fill="#000" stroke="#33f233"/><rect x="94.0" y="41" width="3" height="5" fill="#33f233"/><rect x="98.0" y="46" width="3" height="4" fill="#33f233"/><rect x="110.5" y="42.5" width="2" height="5" fill="#000" stroke="#33f233"/><rect x="114.0" y="41" width="3" height="9" fill="#33f233"/><rect x="122.0" y="50" width="3" height="9" fill="#33f233"/><rect x="126.5" y="56.5" width="2" height="3" fill="#000" stroke="#33f233"/><rect x="134.0" y="54" width="3" height="13" fill="#33f233"/><rect x="146.0" y="67" width="3" height="6" fill="#33f233"/><rect x="150.5" y="62.5" width="2" height="10" fill="#000" stroke="#33f233"/><rect x="162.5" y="55.5" width="2" height="10" fill="#000" stroke="#33f233"/><rect x="170.5" y="50.5" width="2" height="6" fill="#000" stroke="#33f233"/><rect x="174.0" y="50" width="3" height="6" fill="#33f233"/><rect x="178.0" y="57" width="3" height="6" fill="#33f233"/><rect x="182.0" y="62" width="3" height="5" fill="#33f233"/><rect x="186.0" y="66" width="3" height="8" fill="#33f233"/><rect x="194.5" y="62.5" width="2" height="10" fill="#000" stroke="#33f233"/><rect x="202.5" y="56.5" width="2" height="5" fill="#000" stroke="#33f233"/><rect x="206.5" y="51.5" width="2" height="3" fill="#000" stroke="#33f233"/><rect x="214.0" y="52" width="3" height="3" fill="#33f233"/><rect x="218.5" y="52.5" width="2" height="3" fill="#000" stroke="#33f233"/><rect x="222.5" y="47.5" width="2" height="4" fill="#000" stroke="#33f233"/><rect x="226.0" y="47" width="3" height="5" fill="#33f233"/><rect x="230.0" y="52" width="3" height="6" fill="#33f233"/><rect x="234.0" y="57" width="3" height="8" fill="#33f233"/><rect x="246.0" y="62" width="3" height="12" fill="#33f233"/><rect x="250.0" y="74" width="3" height="8" fill="#33f233"/><rect x="258.0" y="82" width="3" height="32" fill="#33f233"/><rect x="262.5" y="103.5" width="2" height="10" fill="#000" stroke="#33f233"/><rect x="266.0" y="104" width="3" height="10" fill="#33f233"/><rect x="2.5" y="2.5" width="341" height="134" fill="none" stroke="#fff"/><rect x="3" y="137" width="1" height="3" fill="#fff"/><text x="2.3" y="149.2" font-size="10.3" textLength="50.5" fill="#ececec" lengthAdjust="spacingAndGlyphs">29 Aug 2025</text><rect x="67" y="137" width="1" height="3" fill="#fff"/><text x="66.3" y="149.2" font-size="10.3" textLength="53.5" fill="#ececec" lengthAdjust="spacingAndGlyphs">29 Aug 19:45</text><rect x="131" y="137" width="1" height="3" fill="#fff"/><text x="130.3" y="149.2" font-size="10.3" textLength="53.5" fill="#ececec" lengthAdjust="spacingAndGlyphs">29 Aug 21:05</text><rect x="195" y="137" width="1" height="3" fill="#fff"/><text x="194.3" y="149.2" font-size="10.3" textLength="53.5" fill="#ececec" lengthAdjust="spacingAndGlyphs">29 Aug 22:25</text><rect x="259" y="137" width="1" height="3" fill="#fff"/><text x="258.3" y="149.2" font-size="10.3" textLength="53.5" fill="#ececec" lengthAdjust="spacingAndGlyphs">29 Aug 23:45</text><rect x="344" y="31" width="2" height="1" fill="#fff"/><text x="349" y="34.7" font-size="10.3" textLength="32" fill="#ececec" lengthAdjust="spacingAndGlyphs">1.17020</text><rect x="344" y="66" width="2" height="1" fill="#fff"/><text x="349" y="69.7" font-size="10.3" textLength="32" fill="#ececec" lengthAdjust="spacingAndGlyphs">1.16945</text><rect x="344" y="99" width="2" height="1" fill="#fff"/><text x="349" y="102.7" font-size="10.3" textLength="32" fill="#ececec" lengthAdjust="spacingAndGlyphs">1.16870</text><rect x="344" y="133" width="2" height="1" fill="#fff"/><text x="349" y="136.7" font-size="10.3" textLength="32" fill="#ececec" lengthAdjust="spacingAndGlyphs">1.16795</text><rect x="346" y="108" width="38.5" height="11" fill="#fff"/><text x="349" y="116.7" font-size="10.3" textLength="32" fill="#000" lengthAdjust="spacingAndGlyphs">1.16839</text><path d="M6 8h7l-3.5 4z" fill="#fff" shape-rendering="auto"/><text x="18" y="14" font-size="10.3" textLength="48.7" fill="#ececec" lengthAdjust="spacingAndGlyphs">EURUSD,M5</text><text x="73.7" y="14" font-size="10.3" textLength="140.3" fill="#ececec" lengthAdjust="spacingAndGlyphs">1.16860 1.16869 1.16824 1.16839</text><text x="6.500" y="27.500" font-size="9.6" textLength="156" fill="#f4f4f4" font-weight="500" lengthAdjust="spacingAndGlyphs">ライセンスキーの認証が正常に完了しました。</text><path d="M269.0 3h9l-4.5 5z" fill="#8c96a8" shape-rendering="auto"/></svg></div></div>
<div class="a" style="left:200px;top:701px;width:1653px;height:2px;background:#f0f0f0;"></div>
<div class="a" style="left:200px;top:703px;width:1653px;height:1px;background:#000;"></div>
<div class="a" style="left:200px;top:704px;width:1653px;height:18px;background:#f4f4f4;"></div>
<div class="a" style="left:286px;top:705px;width:1px;height:14px;background:#5a5a5a;"></div>
<div class="a" style="left:366px;top:705px;width:1px;height:14px;background:#5a5a5a;"></div>
<div class="a" style="left:446px;top:705px;width:1px;height:14px;background:#5a5a5a;"></div>
<div class="a" style="left:526px;top:705px;width:1px;height:14px;background:#5a5a5a;"></div>
<div class="a" style="left:606px;top:705px;width:1px;height:14px;background:#5a5a5a;"></div>
<div class="a" style="left:686px;top:705px;width:1px;height:14px;background:#5a5a5a;"></div>
<div class="a" style="left:766px;top:705px;width:1px;height:14px;background:#5a5a5a;"></div>
<div class="a" style="left:846px;top:705px;width:1px;height:14px;background:#5a5a5a;"></div>
<div class="a" style="left:926px;top:705px;width:1px;height:14px;background:#5a5a5a;"></div>
<div class="a" style="left:1169px;top:705px;width:1px;height:14px;background:#5a5a5a;"></div>
<div class="a" style="left:1005px;top:703px;width:80px;height:19px;background:#fafafa;border:1px solid #000;border-top:none;box-shadow:1px 1px 0 #000"></div>
<svg class="a" style="left:1843px;top:707px" width="5" height="9" viewBox="0 0 5 9" ><path d="M5 0v9l-5-4.500z" fill="#606060"/></svg>
<div class="a" style="left:18px;top:723px;width:1835px;height:135px;background:#f0f0f0;"></div>
<div class="a" style="left:27px;top:727px;width:1826px;height:108px;background:#fff;"></div>
<div class="a" style="left:27px;top:727px;width:1826px;height:1px;background:#a0a0a0;"></div>
<div class="a" style="left:18px;top:741px;width:8px;height:115px;background:#2f8cf0;"></div>
<svg class="a" style="left:18px;top:729px" width="7" height="7" viewBox="0 0 7 7" ><path d="M1 1l4.500 4.500M5.500 1l-4.500 4.500" stroke="#000" stroke-width="1.3"/></svg>
<svg class="a" style="left:18px;top:800px" width="8" height="56" viewBox="0 0 8 56"><text transform="rotate(-90 6.800 53)" x="6.800" y="53" font-size="7.500" font-weight="bold" fill="#0a1a30" textLength="42" lengthAdjust="spacingAndGlyphs">ターミナル</text></svg>
<div class="a" style="left:27px;top:745px;width:1826px;height:1px;background:#c0c0c0;"></div>
<div class="a" style="left:208px;top:728px;width:1px;height:17px;background:#c0c0c0;"></div>
<div class="a" style="left:460px;top:728px;width:1px;height:17px;background:#c0c0c0;"></div>
<div class="a" style="left:584px;top:728px;width:1px;height:17px;background:#c0c0c0;"></div>
<div class="a" style="left:682px;top:728px;width:1px;height:17px;background:#c0c0c0;"></div>
<div class="a" style="left:806px;top:728px;width:1px;height:17px;background:#c0c0c0;"></div>
<div class="a" style="left:946px;top:728px;width:1px;height:17px;background:#c0c0c0;"></div>
<div class="a" style="left:1084px;top:728px;width:1px;height:17px;background:#c0c0c0;"></div>
<div class="a" style="left:1223px;top:728px;width:1px;height:17px;background:#c0c0c0;"></div>
<div class="a" style="left:1362px;top:728px;width:1px;height:17px;background:#c0c0c0;"></div>
<div class="a" style="left:1502px;top:728px;width:1px;height:17px;background:#c0c0c0;"></div>
<div class="a" style="left:1640px;top:728px;width:1px;height:17px;background:#c0c0c0;"></div>
<div class="a" style="left:27px;top:746px;width:1826px;height:20px;background:#ebebeb;"></div>
<div class="a" style="left:27px;top:765px;width:1826px;height:1px;background:#d4d4d4;"></div>
<div class="a" style="left:207px;top:746px;width:1px;height:19px;background:#d4d4d4;"></div>
<div class="a" style="left:459px;top:746px;width:1px;height:19px;background:#d4d4d4;"></div>
<div class="a" style="left:583px;top:746px;width:1px;height:19px;background:#d4d4d4;"></div>
<div class="a" style="left:681px;top:746px;width:1px;height:19px;background:#d4d4d4;"></div>
<div class="a" style="left:805px;top:746px;width:1px;height:19px;background:#d4d4d4;"></div>
<div class="a" style="left:945px;top:746px;width:1px;height:19px;background:#d4d4d4;"></div>
<div class="a" style="left:1083px;top:746px;width:1px;height:19px;background:#d4d4d4;"></div>
<div class="a" style="left:1222px;top:746px;width:1px;height:19px;background:#d4d4d4;"></div>
<div class="a" style="left:1361px;top:746px;width:1px;height:19px;background:#d4d4d4;"></div>
<div class="a" style="left:1501px;top:746px;width:1px;height:19px;background:#d4d4d4;"></div>
<div class="a" style="left:1639px;top:746px;width:1px;height:19px;background:#d4d4d4;"></div>
<div class="a" style="left:27px;top:766px;width:1826px;height:20px;background:#fff;"></div>
<div class="a" style="left:27px;top:785px;width:1826px;height:1px;background:#d4d4d4;"></div>
<div class="a" style="left:207px;top:766px;width:1px;height:19px;background:#d4d4d4;"></div>
<div class="a" style="left:459px;top:766px;width:1px;height:19px;background:#d4d4d4;"></div>
<div class="a" style="left:583px;top:766px;width:1px;height:19px;background:#d4d4d4;"></div>
<div class="a" style="left:681px;top:766px;width:1px;height:19px;background:#d4d4d4;"></div>
<div class="a" style="left:805px;top:766px;width:1px;height:19px;background:#d4d4d4;"></div>
<div class="a" style="left:945px;top:766px;width:1px;height:19px;background:#d4d4d4;"></div>
<div class="a" style="left:1083px;top:766px;width:1px;height:19px;background:#d4d4d4;"></div>
<div class="a" style="left:1222px;top:766px;width:1px;height:19px;background:#d4d4d4;"></div>
<div class="a" style="left:1361px;top:766px;width:1px;height:19px;background:#d4d4d4;"></div>
<div class="a" style="left:1501px;top:766px;width:1px;height:19px;background:#d4d4d4;"></div>
<div class="a" style="left:1639px;top:766px;width:1px;height:19px;background:#d4d4d4;"></div>
<div class="a" style="left:27px;top:786px;width:1826px;height:20px;background:#ebebeb;"></div>
<div class="a" style="left:27px;top:805px;width:1826px;height:1px;background:#d4d4d4;"></div>
<div class="a" style="left:207px;top:786px;width:1px;height:19px;background:#d4d4d4;"></div>
<div class="a" style="left:459px;top:786px;width:1px;height:19px;background:#d4d4d4;"></div>
<div class="a" style="left:583px;top:786px;width:1px;height:19px;background:#d4d4d4;"></div>
<div class="a" style="left:681px;top:786px;width:1px;height:19px;background:#d4d4d4;"></div>
<div class="a" style="left:805px;top:786px;width:1px;height:19px;background:#d4d4d4;"></div>
<div class="a" style="left:945px;top:786px;width:1px;height:19px;background:#d4d4d4;"></div>
<div class="a" style="left:1083px;top:786px;width:1px;height:19px;background:#d4d4d4;"></div>
<div class="a" style="left:1222px;top:786px;width:1px;height:19px;background:#d4d4d4;"></div>
<div class="a" style="left:1361px;top:786px;width:1px;height:19px;background:#d4d4d4;"></div>
<div class="a" style="left:1501px;top:786px;width:1px;height:19px;background:#d4d4d4;"></div>
<div class="a" style="left:1639px;top:786px;width:1px;height:19px;background:#d4d4d4;"></div>
<div class="a" style="left:27px;top:806px;width:1826px;height:19px;background:#c8c8c8;"></div>
<div class="a" style="left:27px;top:746px;width:1px;height:80px;background:#a8a8a8;"></div>
<svg class="a" style="left:90px;top:733px" width="5" height="7" viewBox="0 0 5 7" ><path d="M0.500 6.500L4 0.500" stroke="#777" stroke-width="0.8"/></svg>
<svg class="a" style="left:31px;top:748px" width="15" height="16" viewBox="0 0 15 16" ><path d="M1.500 0.500h7l3 3v11h-10z" fill="#fff" stroke="#555"/><path d="M8.500 0.500v3h3" fill="none" stroke="#555"/><circle cx="10" cy="12" r="3.200" fill="#e8501c" stroke="#a8300c" stroke-width="0.700"/></svg>
<svg class="a" style="left:1841px;top:751px" width="9" height="9" viewBox="0 0 9 9" ><path d="M1 1l7 7M8 1l-7 7" stroke="#9a9a9a" stroke-width="2"/></svg>
<svg class="a" style="left:31px;top:768px" width="15" height="16" viewBox="0 0 15 16" ><path d="M1.500 0.500h7l3 3v11h-10z" fill="#fff" stroke="#555"/><path d="M8.500 0.500v3h3" fill="none" stroke="#555"/><circle cx="10" cy="12" r="3.200" fill="#e8501c" stroke="#a8300c" stroke-width="0.700"/></svg>
<svg class="a" style="left:1841px;top:771px" width="9" height="9" viewBox="0 0 9 9" ><path d="M1 1l7 7M8 1l-7 7" stroke="#9a9a9a" stroke-width="2"/></svg>
<svg class="a" style="left:31px;top:788px" width="15" height="16" viewBox="0 0 15 16" ><path d="M1.500 0.500h7l3 3v11h-10z" fill="#fff" stroke="#555"/><path d="M8.500 0.500v3h3" fill="none" stroke="#555"/><circle cx="10" cy="12" r="3.200" fill="#e8501c" stroke="#a8300c" stroke-width="0.700"/></svg>
<svg class="a" style="left:1841px;top:791px" width="9" height="9" viewBox="0 0 9 9" ><path d="M1 1l7 7M8 1l-7 7" stroke="#9a9a9a" stroke-width="2"/></svg>
<svg class="a" style="left:32px;top:808px" width="11" height="15" viewBox="0 0 11 15" ><rect x="0.500" y="0.500" width="10" height="14" rx="1" fill="#fff" stroke="#666"/><path d="M5.500 3v4M2.500 6.500l3 4 3-4z" fill="#d8320c" stroke="#d8320c" stroke-width="1.200"/></svg>
<div class="a" style="left:27px;top:835px;width:1826px;height:1px;background:#000;"></div>
<div class="a" style="left:27px;top:836px;width:1826px;height:22px;background:#f0f0f0;"></div>
<div class="a" style="left:29px;top:835px;width:43px;height:18px;background:#fff;border:1px solid #000;border-top:none;box-shadow:1px 1px 0 #000"></div>
<div class="a" style="left:136px;top:838px;width:1px;height:12px;background:#5a5a5a;"></div>
<div class="a" style="left:200px;top:838px;width:1px;height:12px;background:#5a5a5a;"></div>
<div class="a" style="left:252px;top:838px;width:1px;height:12px;background:#5a5a5a;"></div>
<div class="a" style="left:328px;top:838px;width:1px;height:12px;background:#5a5a5a;"></div>
<div class="a" style="left:417px;top:838px;width:1px;height:12px;background:#5a5a5a;"></div>
<div class="a" style="left:477px;top:838px;width:1px;height:12px;background:#5a5a5a;"></div>
<div class="a" style="left:519px;top:838px;width:1px;height:12px;background:#5a5a5a;"></div>
<div class="a" style="left:577px;top:838px;width:1px;height:12px;background:#5a5a5a;"></div>
<div class="a" style="left:649px;top:838px;width:1px;height:12px;background:#5a5a5a;"></div>
<div class="a" style="left:711px;top:838px;width:1px;height:12px;background:#5a5a5a;"></div>
<div class="a" style="left:18px;top:858px;width:1835px;height:1px;background:#d0d0d0;"></div>
<div class="a" style="left:18px;top:859px;width:1835px;height:21px;background:#f0f0f0;"></div>
<div class="a" style="left:1170px;top:863px;width:1px;height:17px;background:#b8b8b8;"></div>
<div class="a" style="left:1286px;top:863px;width:1px;height:17px;background:#b8b8b8;"></div>
<div class="a" style="left:1386px;top:863px;width:1px;height:17px;background:#b8b8b8;"></div>
<div class="a" style="left:1456px;top:863px;width:1px;height:17px;background:#b8b8b8;"></div>
<div class="a" style="left:1526px;top:863px;width:1px;height:17px;background:#b8b8b8;"></div>
<div class="a" style="left:1594px;top:863px;width:1px;height:17px;background:#b8b8b8;"></div>
<div class="a" style="left:1663px;top:863px;width:1px;height:17px;background:#b8b8b8;"></div>
<div class="a" style="left:1729px;top:863px;width:1px;height:17px;background:#b8b8b8;"></div>
<svg class="a" style="left:1735px;top:865px" width="24" height="13" viewBox="0 0 24 13" ><rect x="0" y="0" width="2" height="9" fill="#5c7c06"/><rect x="0" y="10" width="2" height="3" fill="#063258"/><rect x="3" y="0" width="2" height="8" fill="#5c7c06"/><rect x="3" y="9" width="2" height="4" fill="#063258"/><rect x="6" y="0" width="2" height="7" fill="#5c7c06"/><rect x="6" y="8" width="2" height="5" fill="#063258"/><rect x="9" y="0" width="2" height="6" fill="#5c7c06"/><rect x="9" y="7" width="2" height="6" fill="#063258"/><rect x="12" y="0" width="2" height="5" fill="#5c7c06"/><rect x="12" y="6" width="2" height="7" fill="#063258"/><rect x="15" y="0" width="2" height="4" fill="#5c7c06"/><rect x="15" y="5" width="2" height="8" fill="#063258"/><rect x="18" y="0" width="2" height="3" fill="#5c7c06"/><rect x="18" y="4" width="2" height="9" fill="#063258"/><rect x="21" y="0" width="2" height="2" fill="#5c7c06"/><rect x="21" y="3" width="2" height="10" fill="#063258"/></svg>
<div class="a" style="left:1861px;top:795px;width:2px;height:85px;background:#d0d0d0;"></div>
<svg class="a ov" style="left:0;top:0;pointer-events:none" width="1865" height="880" viewBox="0 0 1865 880"><text x="216" y="715.3" font-size="10.5" textLength="54.5" lengthAdjust="spacingAndGlyphs" fill="#6e6e6e">AUDJPY,M5</text><text x="295.5" y="715.3" font-size="10.5" textLength="57" lengthAdjust="spacingAndGlyphs" fill="#6e6e6e">AUDUSD,M5</text><text x="376" y="715.3" font-size="10.5" textLength="55" lengthAdjust="spacingAndGlyphs" fill="#6e6e6e">CADJPY,M5</text><text x="456.5" y="715.3" font-size="10.5" textLength="53.5" lengthAdjust="spacingAndGlyphs" fill="#6e6e6e">CHFJPY,M5</text><text x="535.5" y="715.3" font-size="10.5" textLength="57.5" lengthAdjust="spacingAndGlyphs" fill="#6e6e6e">EURAUD,M5</text><text x="616" y="715.3" font-size="10.5" textLength="56" lengthAdjust="spacingAndGlyphs" fill="#6e6e6e">EURGBP,M5</text><text x="697" y="715.3" font-size="10.5" textLength="53" lengthAdjust="spacingAndGlyphs" fill="#6e6e6e">GBPJPY,M5</text><text x="776" y="715.3" font-size="10.5" textLength="54" lengthAdjust="spacingAndGlyphs" fill="#6e6e6e">NZDJPY,M5</text><text x="855.5" y="715.3" font-size="10.5" textLength="56" lengthAdjust="spacingAndGlyphs" fill="#6e6e6e">USDCHF,M5</text><text x="937.5" y="715.3" font-size="10.5" textLength="53" lengthAdjust="spacingAndGlyphs" fill="#6e6e6e">USDJPY,M5</text><text x="1016.5" y="715.3" font-size="10.5" textLength="56" lengthAdjust="spacingAndGlyphs">EURUSD,M5</text><text x="1097.5" y="715.3" font-size="10.5" textLength="56.5" lengthAdjust="spacingAndGlyphs" fill="#6e6e6e">NZDUSD,M5</text><text x="34.5" y="740.8" font-size="10.5" textLength="42.5" lengthAdjust="spacingAndGlyphs">注文番号</text><text x="454" y="740.8" font-size="10.5" text-anchor="end" textLength="21" lengthAdjust="spacingAndGlyphs">時間</text><text x="579" y="740.8" font-size="10.5" text-anchor="end" textLength="43.5" lengthAdjust="spacingAndGlyphs">取引種別</text><text x="676" y="740.8" font-size="10.5" text-anchor="end" textLength="21" lengthAdjust="spacingAndGlyphs">数量</text><text x="802" y="740.8" font-size="10.5" text-anchor="end" textLength="39.5" lengthAdjust="spacingAndGlyphs">通貨ペア</text><text x="939.5" y="740.8" font-size="10.5" text-anchor="end" textLength="21.5" lengthAdjust="spacingAndGlyphs">価格</text><text x="1078" y="740.8" font-size="10.5" text-anchor="end" textLength="77" lengthAdjust="spacingAndGlyphs">決済逆指値(S/L)</text><text x="1217" y="740.8" font-size="10.5" text-anchor="end" textLength="67" lengthAdjust="spacingAndGlyphs">決済指値(T/P)</text><text x="1357" y="740.8" font-size="10.5" text-anchor="end" textLength="21.5" lengthAdjust="spacingAndGlyphs">価格</text><text x="1496" y="740.8" font-size="10.5" text-anchor="end" textLength="31.5" lengthAdjust="spacingAndGlyphs">手数料</text><text x="1635" y="740.8" font-size="10.5" text-anchor="end" textLength="29.5" lengthAdjust="spacingAndGlyphs">スワップ</text><text x="1850" y="740.8" font-size="10.5" text-anchor="end" textLength="22" lengthAdjust="spacingAndGlyphs">損益</text><text x="50.5" y="760.4" font-size="10.5" textLength="47" lengthAdjust="spacingAndGlyphs">17562161</text><text x="458" y="760.4" font-size="10.5" text-anchor="end" textLength="100.5" lengthAdjust="spacingAndGlyphs">2025.08.22 17:18:25</text><text x="579.5" y="760.4" font-size="10.5" text-anchor="end" textLength="16.5" lengthAdjust="spacingAndGlyphs">sell</text><text x="678" y="760.4" font-size="10.5" text-anchor="end" textLength="21" lengthAdjust="spacingAndGlyphs">0.10</text><text x="763" y="760.4" font-size="10.5" textLength="35" lengthAdjust="spacingAndGlyphs">audusd</text><text x="942" y="760.4" font-size="10.5" text-anchor="end" textLength="39" lengthAdjust="spacingAndGlyphs">0.64840</text><text x="1081" y="760.4" font-size="10.5" text-anchor="end" textLength="39" lengthAdjust="spacingAndGlyphs">0.00000</text><text x="1220" y="760.4" font-size="10.5" text-anchor="end" textLength="39" lengthAdjust="spacingAndGlyphs">0.00000</text><text x="1359" y="760.4" font-size="10.5" text-anchor="end" textLength="39" lengthAdjust="spacingAndGlyphs">0.65434</text><text x="1498" y="760.4" font-size="10.5" text-anchor="end" textLength="5.5" lengthAdjust="spacingAndGlyphs">0</text><text x="1637" y="760.4" font-size="10.5" text-anchor="end" textLength="11.5" lengthAdjust="spacingAndGlyphs">16</text><text x="1832" y="760.4" font-size="10.5" text-anchor="end" textLength="31" lengthAdjust="spacingAndGlyphs">-8 736</text><text x="50.5" y="780.4" font-size="10.5" textLength="47" lengthAdjust="spacingAndGlyphs">17589270</text><text x="458" y="780.4" font-size="10.5" text-anchor="end" textLength="100.5" lengthAdjust="spacingAndGlyphs">2025.08.28 03:03:39</text><text x="579.5" y="780.4" font-size="10.5" text-anchor="end" textLength="16.5" lengthAdjust="spacingAndGlyphs">sell</text><text x="678" y="780.4" font-size="10.5" text-anchor="end" textLength="21" lengthAdjust="spacingAndGlyphs">0.10</text><text x="763" y="780.4" font-size="10.5" textLength="35" lengthAdjust="spacingAndGlyphs">audusd</text><text x="942" y="780.4" font-size="10.5" text-anchor="end" textLength="39" lengthAdjust="spacingAndGlyphs">0.65140</text><text x="1081" y="780.4" font-size="10.5" text-anchor="end" textLength="39" lengthAdjust="spacingAndGlyphs">0.00000</text><text x="1220" y="780.4" font-size="10.5" text-anchor="end" textLength="39" lengthAdjust="spacingAndGlyphs">0.00000</text><text x="1359" y="780.4" font-size="10.5" text-anchor="end" textLength="39" lengthAdjust="spacingAndGlyphs">0.65434</text><text x="1498" y="780.4" font-size="10.5" text-anchor="end" textLength="5.5" lengthAdjust="spacingAndGlyphs">0</text><text x="1637" y="780.4" font-size="10.5" text-anchor="end" textLength="6.0" lengthAdjust="spacingAndGlyphs">4</text><text x="1832" y="780.4" font-size="10.5" text-anchor="end" textLength="31" lengthAdjust="spacingAndGlyphs">-4 324</text><text x="50.5" y="800.4" font-size="10.5" textLength="47" lengthAdjust="spacingAndGlyphs">17604380</text><text x="458" y="800.4" font-size="10.5" text-anchor="end" textLength="100.5" lengthAdjust="spacingAndGlyphs">2025.08.29 17:30:01</text><text x="579.5" y="800.4" font-size="10.5" text-anchor="end" textLength="16.5" lengthAdjust="spacingAndGlyphs">sell</text><text x="678" y="800.4" font-size="10.5" text-anchor="end" textLength="21" lengthAdjust="spacingAndGlyphs">0.30</text><text x="763" y="800.4" font-size="10.5" textLength="35" lengthAdjust="spacingAndGlyphs">audusd</text><text x="942" y="800.4" font-size="10.5" text-anchor="end" textLength="39" lengthAdjust="spacingAndGlyphs">0.65439</text><text x="1081" y="800.4" font-size="10.5" text-anchor="end" textLength="39" lengthAdjust="spacingAndGlyphs">0.00000</text><text x="1220" y="800.4" font-size="10.5" text-anchor="end" textLength="39" lengthAdjust="spacingAndGlyphs">0.00000</text><text x="1359" y="800.4" font-size="10.5" text-anchor="end" textLength="39" lengthAdjust="spacingAndGlyphs">0.65434</text><text x="1498" y="800.4" font-size="10.5" text-anchor="end" textLength="5.5" lengthAdjust="spacingAndGlyphs">0</text><text x="1637" y="800.4" font-size="10.5" text-anchor="end" textLength="6.0" lengthAdjust="spacingAndGlyphs">6</text><text x="1832" y="800.4" font-size="10.5" text-anchor="end" textLength="18.5" lengthAdjust="spacingAndGlyphs">220</text><text x="50.5" y="819.8" font-size="10.5" textLength="21.5" lengthAdjust="spacingAndGlyphs" font-weight="bold">残高</text><text x="73" y="819.8" font-size="10.5" textLength="86" lengthAdjust="spacingAndGlyphs" letter-spacing="0.500">: 6 161 321 JPY</text><text x="166" y="819.8" font-size="10.5" textLength="56" lengthAdjust="spacingAndGlyphs" font-weight="bold">有効証拠金</text><text x="223" y="819.8" font-size="10.5" textLength="63" lengthAdjust="spacingAndGlyphs" letter-spacing="0.500">: 6 135 611</text><text x="294" y="819.8" font-size="10.5" textLength="56" lengthAdjust="spacingAndGlyphs" font-weight="bold">必要証拠金</text><text x="351" y="819.8" font-size="10.5" textLength="46" lengthAdjust="spacingAndGlyphs" letter-spacing="0.500">: 28 770</text><text x="404.5" y="819.8" font-size="10.5" textLength="56" lengthAdjust="spacingAndGlyphs" font-weight="bold">余剰証拠金</text><text x="461.5" y="819.8" font-size="10.5" textLength="63.5" lengthAdjust="spacingAndGlyphs" letter-spacing="0.500">: 6 106 841</text><text x="532.5" y="819.8" font-size="10.5" textLength="67.5" lengthAdjust="spacingAndGlyphs" font-weight="bold">証拠金維持率</text><text x="601" y="819.8" font-size="10.5" textLength="72" lengthAdjust="spacingAndGlyphs" letter-spacing="0.500">: 21326.73%</text><text x="1831.5" y="819.8" font-size="10.5" text-anchor="end" textLength="43" lengthAdjust="spacingAndGlyphs">-25 710</text><text x="40.5" y="847.8" font-size="10.5" textLength="21.5" lengthAdjust="spacingAndGlyphs">取引</text><text x="82.5" y="847.8" font-size="10.5" textLength="43" lengthAdjust="spacingAndGlyphs" fill="#6e6e6e">運用比率</text><text x="147" y="847.8" font-size="10.5" textLength="42.5" lengthAdjust="spacingAndGlyphs" fill="#6e6e6e">口座履歴</text><text x="210" y="847.8" font-size="10.5" textLength="32" lengthAdjust="spacingAndGlyphs" fill="#6e6e6e">ニュース</text><text x="262" y="847.8" font-size="10.5" textLength="55" lengthAdjust="spacingAndGlyphs" fill="#6e6e6e">アラーム設定</text><text x="338.5" y="847.8" font-size="10.5" textLength="57.5" lengthAdjust="spacingAndGlyphs" fill="#6e6e6e">メールボックス</text><text x="427" y="847.8" font-size="10.5" textLength="39.5" lengthAdjust="spacingAndGlyphs" fill="#6e6e6e">マーケット</text><text x="488" y="847.8" font-size="10.5" textLength="20.5" lengthAdjust="spacingAndGlyphs" fill="#6e6e6e">記事</text><text x="529" y="847.8" font-size="10.5" textLength="38.5" lengthAdjust="spacingAndGlyphs" fill="#6e6e6e">ライブラリ</text><text x="587.5" y="847.8" font-size="10.5" textLength="50.5" lengthAdjust="spacingAndGlyphs" fill="#6e6e6e">エキスパート</text><text x="659" y="847.8" font-size="10.5" textLength="42" lengthAdjust="spacingAndGlyphs" fill="#6e6e6e">操作履歴</text><text x="396.5" y="850.4" font-size="9.5" textLength="10" lengthAdjust="spacingAndGlyphs" fill="#d81e1e">10</text><text x="15.5" y="877.0" font-size="10.5" textLength="128.5" lengthAdjust="spacingAndGlyphs">F1キーでヘルプが表示されます</text><text x="1176" y="877.0" font-size="10.5" textLength="36" lengthAdjust="spacingAndGlyphs">Default</text><text x="1763" y="877.0" font-size="10.5" textLength="77" lengthAdjust="spacingAndGlyphs">1159651/597 kb</text></svg>
<div class="a" style="left:0;top:0;width:18px;height:880px;background:#fff"></div>
<div class="a" style="left:0;top:72px;width:212px;height:142px;background:#e31c1d"></div>
</body></html>
